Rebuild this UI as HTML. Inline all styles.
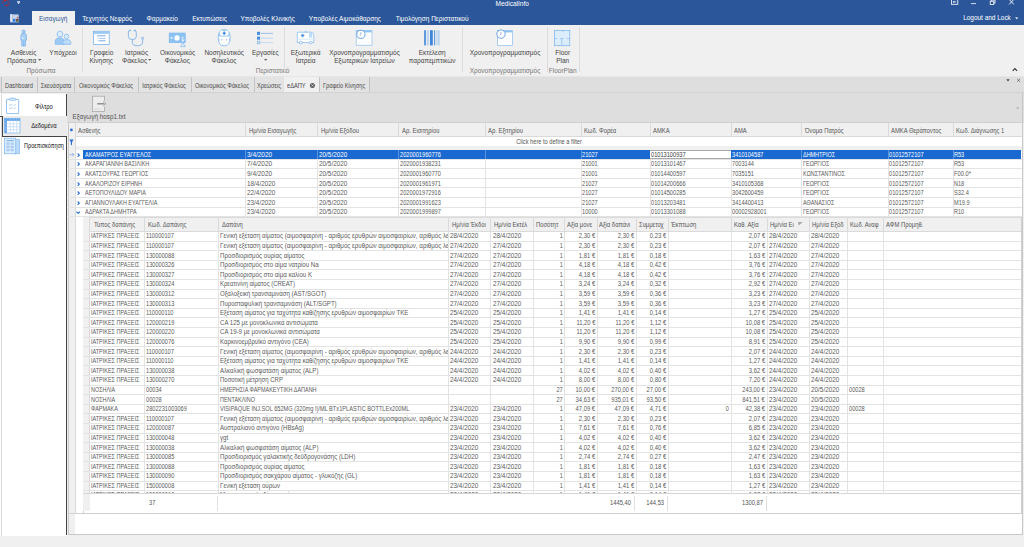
<!DOCTYPE html>
<html><head><meta charset="utf-8"><style>
html,body{margin:0;padding:0;width:1024px;height:547px;overflow:hidden;background:#f0f0f0}
body{position:relative;font-family:"Liberation Sans",sans-serif}
div,span,svg{position:absolute}
.t{white-space:nowrap}
</style></head><body>
<div style="left:0.00px;top:0.00px;width:1024.00px;height:24.60px;background:#2b579a"></div>
<span class="t" style="left:312.20px;width:400px;text-align:center;top:0.62px;font-size:6.5px;line-height:6.5px;color:#fff;">MedicalInfo</span>
<div style="left:31.80px;top:10.90px;width:43.00px;height:14.20px;background:#f0f0f0"></div>
<span class="t" style="left:-146.80px;width:400px;text-align:center;top:15.85px;font-size:6.45px;line-height:6.45px;color:#2b579a;">Εισαγωγή</span>
<span class="t" style="left:-92.80px;width:400px;text-align:center;top:15.82px;font-size:6.5px;line-height:6.5px;color:#fff;">Τεχνητός Νεφρός</span>
<span class="t" style="left:-37.80px;width:400px;text-align:center;top:15.82px;font-size:6.5px;line-height:6.5px;color:#fff;">Φαρμακείο</span>
<span class="t" style="left:9.50px;width:400px;text-align:center;top:15.82px;font-size:6.5px;line-height:6.5px;color:#fff;">Εκτυπώσεις</span>
<span class="t" style="left:67.70px;width:400px;text-align:center;top:15.82px;font-size:6.5px;line-height:6.5px;color:#fff;">Υποβολές Κλινικής</span>
<span class="t" style="left:144.90px;width:400px;text-align:center;top:15.82px;font-size:6.5px;line-height:6.5px;color:#fff;">Υποβολές Αιμοκάθαρσης</span>
<span class="t" style="left:232.10px;width:400px;text-align:center;top:15.82px;font-size:6.5px;line-height:6.5px;color:#fff;">Τιμολόγηση Περιστατικού</span>
<span class="t" style="left:787.00px;width:400px;text-align:center;top:14.84px;font-size:6.46px;line-height:6.46px;color:#fff;">Logout and Lock</span>
<div style="left:0.00px;top:24.60px;width:1024.00px;height:51.00px;background:#f0f0f0"></div>
<span class="t" style="left:-176.40px;width:400px;text-align:center;top:49.92px;font-size:6.5px;line-height:6.5px;color:#444;">Ασθενείς</span>
<span class="t" style="left:-178.40px;width:400px;text-align:center;top:58.02px;font-size:6.5px;line-height:6.5px;color:#444;">Πρόσωπα</span>
<svg style="left:38.00px;top:59.20px" width="3.2" height="2" viewBox="0 0 3.2 2"><path d="M0 0H3.2L1.6 1.8Z" fill="#666"/></svg>
<span class="t" style="left:-137.00px;width:400px;text-align:center;top:49.92px;font-size:6.5px;line-height:6.5px;color:#444;">Υπόχρεοι</span>
<span class="t" style="left:-159.00px;width:400px;text-align:center;top:68.02px;font-size:6.5px;line-height:6.5px;color:#777;">Πρόσωπα</span>
<div style="left:82.40px;top:27.00px;width:1.00px;height:45.00px;background:#dcdcdc"></div>
<span class="t" style="left:-98.30px;width:400px;text-align:center;top:49.92px;font-size:6.5px;line-height:6.5px;color:#444;">Γραφείο</span>
<span class="t" style="left:-98.80px;width:400px;text-align:center;top:58.02px;font-size:6.5px;line-height:6.5px;color:#444;">Κίνησης</span>
<span class="t" style="left:-63.50px;width:400px;text-align:center;top:49.92px;font-size:6.5px;line-height:6.5px;color:#444;">Ιατρικός</span>
<span class="t" style="left:-65.40px;width:400px;text-align:center;top:58.02px;font-size:6.5px;line-height:6.5px;color:#444;">Φάκελος</span>
<svg style="left:148.00px;top:59.20px" width="3.2" height="2" viewBox="0 0 3.2 2"><path d="M0 0H3.2L1.6 1.8Z" fill="#666"/></svg>
<span class="t" style="left:-22.40px;width:400px;text-align:center;top:49.92px;font-size:6.5px;line-height:6.5px;color:#444;">Οικονομικός</span>
<span class="t" style="left:-22.70px;width:400px;text-align:center;top:58.02px;font-size:6.5px;line-height:6.5px;color:#444;">Φάκελος</span>
<span class="t" style="left:24.20px;width:400px;text-align:center;top:49.92px;font-size:6.5px;line-height:6.5px;color:#444;">Νοσηλευτικός</span>
<span class="t" style="left:24.00px;width:400px;text-align:center;top:58.02px;font-size:6.5px;line-height:6.5px;color:#444;">Φάκελος</span>
<span class="t" style="left:65.30px;width:400px;text-align:center;top:49.92px;font-size:6.5px;line-height:6.5px;color:#444;">Εργασίες</span>
<svg style="left:264.00px;top:59.30px" width="3.2" height="2" viewBox="0 0 3.2 2"><path d="M0 0H3.2L1.6 1.8Z" fill="#666"/></svg>
<span class="t" style="left:72.60px;width:400px;text-align:center;top:68.02px;font-size:6.5px;line-height:6.5px;color:#777;">Περιστατικό</span>
<div style="left:283.80px;top:27.00px;width:1.00px;height:45.00px;background:#dcdcdc"></div>
<span class="t" style="left:105.60px;width:400px;text-align:center;top:49.92px;font-size:6.5px;line-height:6.5px;color:#444;">Εξωτερικά</span>
<span class="t" style="left:105.60px;width:400px;text-align:center;top:58.02px;font-size:6.5px;line-height:6.5px;color:#444;">Ιατρεία</span>
<span class="t" style="left:164.50px;width:400px;text-align:center;top:49.92px;font-size:6.5px;line-height:6.5px;color:#444;">Χρονοπρογραμματισμός</span>
<span class="t" style="left:164.50px;width:400px;text-align:center;top:58.02px;font-size:6.5px;line-height:6.5px;color:#444;">Εξωτερικών Ιατρείων</span>
<span class="t" style="left:232.20px;width:400px;text-align:center;top:49.92px;font-size:6.5px;line-height:6.5px;color:#444;">Εκτέλεση</span>
<span class="t" style="left:232.20px;width:400px;text-align:center;top:58.02px;font-size:6.5px;line-height:6.5px;color:#444;">παραπεμπτικών</span>
<div style="left:462.20px;top:27.00px;width:1.00px;height:45.00px;background:#dcdcdc"></div>
<span class="t" style="left:305.00px;width:400px;text-align:center;top:49.92px;font-size:6.5px;line-height:6.5px;color:#444;">Χρονοπρογραμματισμός</span>
<span class="t" style="left:305.00px;width:400px;text-align:center;top:68.02px;font-size:6.5px;line-height:6.5px;color:#777;">Χρονοπρογραμματισμός</span>
<div style="left:546.70px;top:27.00px;width:1.00px;height:45.00px;background:#dcdcdc"></div>
<span class="t" style="left:362.70px;width:400px;text-align:center;top:49.92px;font-size:6.5px;line-height:6.5px;color:#444;">Floor</span>
<span class="t" style="left:362.70px;width:400px;text-align:center;top:58.02px;font-size:6.5px;line-height:6.5px;color:#444;">Plan</span>
<span class="t" style="left:362.70px;width:400px;text-align:center;top:68.02px;font-size:6.5px;line-height:6.5px;color:#777;">FloorPlan</span>
<div style="left:578.80px;top:27.00px;width:1.00px;height:45.00px;background:#dcdcdc"></div>
<div style="left:0.00px;top:75.60px;width:1024.00px;height:17.00px;background:#dedede"></div>
<div style="left:0.00px;top:75.60px;width:1024.00px;height:1.00px;background:#e6e6e6"></div>
<div style="left:1.30px;top:76.80px;width:35.20px;height:16.00px;background:#e3e3e3;border-left:1px solid #c4c4c4"></div>
<span class="t" style="left:-180.80px;width:400px;text-align:center;top:83.27px;font-size:6.6px;line-height:6.6px;color:#4a4a4a;transform:scaleX(0.860);transform-origin:50% 50%;">Dashboard</span>
<div style="left:36.50px;top:76.80px;width:37.90px;height:16.00px;background:#e3e3e3;border-left:1px solid #c4c4c4"></div>
<span class="t" style="left:-144.25px;width:400px;text-align:center;top:83.27px;font-size:6.6px;line-height:6.6px;color:#4a4a4a;transform:scaleX(0.860);transform-origin:50% 50%;">Σκευάσματα</span>
<div style="left:74.40px;top:76.80px;width:63.30px;height:16.00px;background:#e3e3e3;border-left:1px solid #c4c4c4"></div>
<span class="t" style="left:-93.65px;width:400px;text-align:center;top:83.27px;font-size:6.6px;line-height:6.6px;color:#4a4a4a;transform:scaleX(0.860);transform-origin:50% 50%;">Οικονομικός Φάκελος</span>
<div style="left:137.70px;top:76.80px;width:52.80px;height:16.00px;background:#e3e3e3;border-left:1px solid #c4c4c4"></div>
<span class="t" style="left:-35.60px;width:400px;text-align:center;top:83.27px;font-size:6.6px;line-height:6.6px;color:#4a4a4a;transform:scaleX(0.860);transform-origin:50% 50%;">Ιατρικός Φάκελος</span>
<div style="left:190.50px;top:76.80px;width:63.10px;height:16.00px;background:#e3e3e3;border-left:1px solid #c4c4c4"></div>
<span class="t" style="left:22.35px;width:400px;text-align:center;top:83.27px;font-size:6.6px;line-height:6.6px;color:#4a4a4a;transform:scaleX(0.860);transform-origin:50% 50%;">Οικονομικός Φάκελος</span>
<div style="left:253.60px;top:76.80px;width:30.10px;height:16.00px;background:#e3e3e3;border-left:1px solid #c4c4c4"></div>
<span class="t" style="left:68.95px;width:400px;text-align:center;top:83.27px;font-size:6.6px;line-height:6.6px;color:#4a4a4a;transform:scaleX(0.860);transform-origin:50% 50%;">Χρεώσεις</span>
<div style="left:283.70px;top:76.80px;width:35.30px;height:16.00px;background:#f0f0f0"></div>
<span class="t" style="left:287.00px;top:83.17px;font-size:6.6px;line-height:6.6px;color:#444;transform:scaleX(0.860);transform-origin:0 50%;">eΔΑΠΥ</span>
<div style="left:319.00px;top:76.80px;width:49.70px;height:16.00px;background:#e3e3e3;border-left:1px solid #c4c4c4"></div>
<span class="t" style="left:144.15px;width:400px;text-align:center;top:83.27px;font-size:6.6px;line-height:6.6px;color:#4a4a4a;transform:scaleX(0.860);transform-origin:50% 50%;">Γραφείο Κίνησης</span>
<div style="left:368.70px;top:76.80px;width:1.00px;height:15.80px;background:#c4c4c4"></div>
<div style="left:0.00px;top:92.20px;width:1024.00px;height:1.00px;background:#d2d2d2"></div>
<div style="left:0.00px;top:93.50px;width:67.00px;height:442.00px;background:#fff"></div>
<div style="left:0.60px;top:93.50px;width:1.00px;height:442.00px;background:#d8d8d8"></div>
<div style="left:66.20px;top:93.50px;width:1.00px;height:22.80px;background:#444"></div>
<div style="left:0.00px;top:115.80px;width:67.00px;height:1.00px;background:#444"></div>
<div style="left:2.20px;top:116.30px;width:65.00px;height:19.90px;background:#ebebeb"></div>
<div style="left:2.20px;top:116.30px;width:1.00px;height:19.90px;background:#444"></div>
<div style="left:2.20px;top:135.90px;width:64.80px;height:1.00px;background:#444"></div>
<div style="left:66.20px;top:136.20px;width:1.00px;height:399.30px;background:#444"></div>
<span class="t" style="left:-155.70px;width:400px;text-align:center;top:103.77px;font-size:6.6px;line-height:6.6px;color:#111;transform:scaleX(0.885);transform-origin:50% 50%;">Φίλτρο</span>
<span class="t" style="left:-155.70px;width:400px;text-align:center;top:123.47px;font-size:6.6px;line-height:6.6px;color:#111;transform:scaleX(0.885);transform-origin:50% 50%;">Δεδομένα</span>
<span class="t" style="left:-155.90px;width:400px;text-align:center;top:142.97px;font-size:6.6px;line-height:6.6px;color:#111;transform:scaleX(0.830);transform-origin:50% 50%;">Προεπισκόπηση</span>
<div style="left:67.00px;top:92.60px;width:957.00px;height:30.00px;background:#dedede"></div>
<span class="t" style="left:-101.30px;width:400px;text-align:center;top:114.27px;font-size:6.6px;line-height:6.6px;color:#505050;transform:scaleX(0.960);transform-origin:50% 50%;">Εξαγωγή hosp1.txt</span>
<div style="left:68.20px;top:122.20px;width:954.10px;height:413.10px;background:#fff"></div>
<div style="left:68.20px;top:122.20px;width:954.10px;height:1.00px;background:#cfcfcf"></div>
<div style="left:68.20px;top:122.70px;width:954.10px;height:13.60px;background:#f0f0f0"></div>
<div style="left:68.20px;top:136.10px;width:954.10px;height:1.00px;background:#dadada"></div>
<div style="left:68.20px;top:146.20px;width:954.10px;height:1.00px;background:#e6e6e6"></div>
<div style="left:68.20px;top:146.40px;width:954.10px;height:3.20px;background:#f0f0f0"></div>
<div style="left:68.20px;top:122.70px;width:6.40px;height:412.60px;background:#f0f0f0"></div>
<div style="left:74.60px;top:122.70px;width:1.00px;height:390.70px;background:#dadada"></div>
<div style="left:1021.50px;top:93.00px;width:1.00px;height:442.30px;background:#c8c8c8"></div>
<div style="left:68.20px;top:122.20px;width:1.00px;height:413.10px;background:#c8c8c8"></div>
<div style="left:245.10px;top:122.70px;width:1.00px;height:13.40px;background:#dadada"></div>
<div style="left:317.30px;top:122.70px;width:1.00px;height:13.40px;background:#dadada"></div>
<div style="left:398.40px;top:122.70px;width:1.00px;height:13.40px;background:#dadada"></div>
<div style="left:485.30px;top:122.70px;width:1.00px;height:13.40px;background:#dadada"></div>
<div style="left:580.50px;top:122.70px;width:1.00px;height:13.40px;background:#dadada"></div>
<div style="left:649.60px;top:122.70px;width:1.00px;height:13.40px;background:#dadada"></div>
<div style="left:730.70px;top:122.70px;width:1.00px;height:13.40px;background:#dadada"></div>
<div style="left:801.30px;top:122.70px;width:1.00px;height:13.40px;background:#dadada"></div>
<div style="left:887.50px;top:122.70px;width:1.00px;height:13.40px;background:#dadada"></div>
<div style="left:952.70px;top:122.70px;width:1.00px;height:13.40px;background:#dadada"></div>
<span class="t" style="left:77.80px;top:127.57px;font-size:6.6px;line-height:6.6px;color:#555;transform:scaleX(0.890);transform-origin:0 50%;">Ασθενής</span>
<span class="t" style="left:248.75px;top:127.57px;font-size:6.6px;line-height:6.6px;color:#555;transform:scaleX(0.890);transform-origin:0 50%;">Ημ/νία Εισαγωγής</span>
<span class="t" style="left:321.00px;top:127.57px;font-size:6.6px;line-height:6.6px;color:#555;transform:scaleX(0.890);transform-origin:0 50%;">Ημ/νία Εξόδου</span>
<span class="t" style="left:402.30px;top:127.57px;font-size:6.6px;line-height:6.6px;color:#555;transform:scaleX(0.890);transform-origin:0 50%;">Αρ. Εισιτηρίου</span>
<span class="t" style="left:488.20px;top:127.57px;font-size:6.6px;line-height:6.6px;color:#555;transform:scaleX(0.890);transform-origin:0 50%;">Αρ. Εξιτηρίου</span>
<span class="t" style="left:583.70px;top:127.57px;font-size:6.6px;line-height:6.6px;color:#555;transform:scaleX(0.890);transform-origin:0 50%;">Κωδ. Φορέα</span>
<span class="t" style="left:652.50px;top:127.57px;font-size:6.6px;line-height:6.6px;color:#555;transform:scaleX(0.890);transform-origin:0 50%;">ΑΜΚΑ</span>
<span class="t" style="left:733.60px;top:127.57px;font-size:6.6px;line-height:6.6px;color:#555;transform:scaleX(0.890);transform-origin:0 50%;">ΑΜΑ</span>
<span class="t" style="left:804.50px;top:127.57px;font-size:6.6px;line-height:6.6px;color:#555;transform:scaleX(0.890);transform-origin:0 50%;">Όνομα Πατρός</span>
<span class="t" style="left:890.70px;top:127.57px;font-size:6.6px;line-height:6.6px;color:#555;transform:scaleX(0.890);transform-origin:0 50%;">ΑΜΚΑ Θεράποντος</span>
<span class="t" style="left:955.90px;top:127.57px;font-size:6.6px;line-height:6.6px;color:#555;transform:scaleX(0.890);transform-origin:0 50%;">Κωδ. Διάγνωσης 1</span>
<span class="t" style="left:348.50px;width:400px;text-align:center;top:138.77px;font-size:6.6px;line-height:6.6px;color:#555;transform:scaleX(0.860);transform-origin:50% 50%;">Click here to define a filter</span>
<div style="left:83.30px;top:149.60px;width:938.20px;height:9.00px;background:#1a69d1"></div>
<div style="left:649.90px;top:149.60px;width:81.00px;height:9.00px;background:#fff;border-top:1px solid #a8a8a8;border-bottom:1px solid #a8a8a8;box-sizing:border-box"></div>
<div style="left:68.20px;top:158.60px;width:954.10px;height:1.00px;background:#e3e3e3"></div>
<div style="left:245.10px;top:149.60px;width:1.00px;height:9.00px;background:#5f93dc"></div>
<div style="left:317.30px;top:149.60px;width:1.00px;height:9.00px;background:#5f93dc"></div>
<div style="left:398.40px;top:149.60px;width:1.00px;height:9.00px;background:#5f93dc"></div>
<div style="left:485.30px;top:149.60px;width:1.00px;height:9.00px;background:#5f93dc"></div>
<div style="left:580.50px;top:149.60px;width:1.00px;height:9.00px;background:#5f93dc"></div>
<div style="left:801.30px;top:149.60px;width:1.00px;height:9.00px;background:#5f93dc"></div>
<div style="left:887.50px;top:149.60px;width:1.00px;height:9.00px;background:#5f93dc"></div>
<div style="left:952.70px;top:149.60px;width:1.00px;height:9.00px;background:#5f93dc"></div>
<div style="left:83.30px;top:149.60px;width:161.80px;height:9.00px;overflow:hidden"><span class="t" style="left:1.60px;transform-origin:0 50%;top:2.21px;font-size:6.9px;line-height:6.9px;color:#fff;transform:scaleX(0.792);">ΑΚΑΜΑΤΡΟΣ ΕΥΑΓΓΕΛΟΣ</span></div>
<div style="left:245.10px;top:149.60px;width:72.20px;height:9.00px;overflow:hidden"><span class="t" style="left:1.60px;transform-origin:0 50%;top:2.21px;font-size:6.9px;line-height:6.9px;color:#fff;transform:scaleX(0.937);">3/4/2020</span></div>
<div style="left:317.30px;top:149.60px;width:81.10px;height:9.00px;overflow:hidden"><span class="t" style="left:1.60px;transform-origin:0 50%;top:2.21px;font-size:6.9px;line-height:6.9px;color:#fff;transform:scaleX(0.923);">20/5/2020</span></div>
<div style="left:398.40px;top:149.60px;width:86.90px;height:9.00px;overflow:hidden"><span class="t" style="left:1.60px;transform-origin:0 50%;top:2.21px;font-size:6.9px;line-height:6.9px;color:#fff;transform:scaleX(0.820);">2020001960776</span></div>
<div style="left:580.50px;top:149.60px;width:69.10px;height:9.00px;overflow:hidden"><span class="t" style="left:1.60px;transform-origin:0 50%;top:2.21px;font-size:6.9px;line-height:6.9px;color:#fff;transform:scaleX(0.820);">21027</span></div>
<div style="left:649.60px;top:149.60px;width:81.10px;height:9.00px;overflow:hidden"><span class="t" style="left:1.60px;transform-origin:0 50%;top:2.21px;font-size:6.9px;line-height:6.9px;color:#3a3a3a;transform:scaleX(0.820);">01013100937</span></div>
<div style="left:730.70px;top:149.60px;width:70.60px;height:9.00px;overflow:hidden"><span class="t" style="left:1.60px;transform-origin:0 50%;top:2.21px;font-size:6.9px;line-height:6.9px;color:#fff;transform:scaleX(0.820);">3410104587</span></div>
<div style="left:801.30px;top:149.60px;width:86.20px;height:9.00px;overflow:hidden"><span class="t" style="left:1.60px;transform-origin:0 50%;top:2.21px;font-size:6.9px;line-height:6.9px;color:#fff;transform:scaleX(0.790);">ΔΗΜΗΤΡΙΟΣ</span></div>
<div style="left:887.50px;top:149.60px;width:65.20px;height:9.00px;overflow:hidden"><span class="t" style="left:1.60px;transform-origin:0 50%;top:2.21px;font-size:6.9px;line-height:6.9px;color:#fff;transform:scaleX(0.820);">01012572107</span></div>
<div style="left:952.70px;top:149.60px;width:68.60px;height:9.00px;overflow:hidden"><span class="t" style="left:1.60px;transform-origin:0 50%;top:2.21px;font-size:6.9px;line-height:6.9px;color:#fff;transform:scaleX(0.808);">R53</span></div>
<svg style="left:77.2px;top:152.70px" width="3" height="4.4" viewBox="0 0 3 4.4"><path d="M0.6 0.5L2.3 2.2L0.6 3.9" stroke="#2a6fd6" stroke-width="1.1" fill="none"/></svg>
<div style="left:68.20px;top:168.20px;width:954.10px;height:1.00px;background:#e3e3e3"></div>
<div style="left:245.10px;top:159.20px;width:1.00px;height:9.00px;background:#e3e3e3"></div>
<div style="left:317.30px;top:159.20px;width:1.00px;height:9.00px;background:#e3e3e3"></div>
<div style="left:398.40px;top:159.20px;width:1.00px;height:9.00px;background:#e3e3e3"></div>
<div style="left:485.30px;top:159.20px;width:1.00px;height:9.00px;background:#e3e3e3"></div>
<div style="left:580.50px;top:159.20px;width:1.00px;height:9.00px;background:#e3e3e3"></div>
<div style="left:649.60px;top:159.20px;width:1.00px;height:9.00px;background:#e3e3e3"></div>
<div style="left:730.70px;top:159.20px;width:1.00px;height:9.00px;background:#e3e3e3"></div>
<div style="left:801.30px;top:159.20px;width:1.00px;height:9.00px;background:#e3e3e3"></div>
<div style="left:887.50px;top:159.20px;width:1.00px;height:9.00px;background:#e3e3e3"></div>
<div style="left:952.70px;top:159.20px;width:1.00px;height:9.00px;background:#e3e3e3"></div>
<div style="left:83.30px;top:159.20px;width:161.80px;height:9.00px;overflow:hidden"><span class="t" style="left:1.60px;transform-origin:0 50%;top:2.21px;font-size:6.9px;line-height:6.9px;color:#5a5a5a;transform:scaleX(0.793);">ΑΚΑΡΑΓΙΑΝΝΗ ΒΑΣΙΛΙΚΗ</span></div>
<div style="left:245.10px;top:159.20px;width:72.20px;height:9.00px;overflow:hidden"><span class="t" style="left:1.60px;transform-origin:0 50%;top:2.21px;font-size:6.9px;line-height:6.9px;color:#5a5a5a;transform:scaleX(0.937);">7/4/2020</span></div>
<div style="left:317.30px;top:159.20px;width:81.10px;height:9.00px;overflow:hidden"><span class="t" style="left:1.60px;transform-origin:0 50%;top:2.21px;font-size:6.9px;line-height:6.9px;color:#5a5a5a;transform:scaleX(0.923);">20/5/2020</span></div>
<div style="left:398.40px;top:159.20px;width:86.90px;height:9.00px;overflow:hidden"><span class="t" style="left:1.60px;transform-origin:0 50%;top:2.21px;font-size:6.9px;line-height:6.9px;color:#5a5a5a;transform:scaleX(0.820);">2020001938231</span></div>
<div style="left:580.50px;top:159.20px;width:69.10px;height:9.00px;overflow:hidden"><span class="t" style="left:1.60px;transform-origin:0 50%;top:2.21px;font-size:6.9px;line-height:6.9px;color:#5a5a5a;transform:scaleX(0.820);">21001</span></div>
<div style="left:649.60px;top:159.20px;width:81.10px;height:9.00px;overflow:hidden"><span class="t" style="left:1.60px;transform-origin:0 50%;top:2.21px;font-size:6.9px;line-height:6.9px;color:#5a5a5a;transform:scaleX(0.820);">01013101467</span></div>
<div style="left:730.70px;top:159.20px;width:70.60px;height:9.00px;overflow:hidden"><span class="t" style="left:1.60px;transform-origin:0 50%;top:2.21px;font-size:6.9px;line-height:6.9px;color:#5a5a5a;transform:scaleX(0.820);">7003144</span></div>
<div style="left:801.30px;top:159.20px;width:86.20px;height:9.00px;overflow:hidden"><span class="t" style="left:1.60px;transform-origin:0 50%;top:2.21px;font-size:6.9px;line-height:6.9px;color:#5a5a5a;transform:scaleX(0.790);">ΓΕΩΡΓΙΟΣ</span></div>
<div style="left:887.50px;top:159.20px;width:65.20px;height:9.00px;overflow:hidden"><span class="t" style="left:1.60px;transform-origin:0 50%;top:2.21px;font-size:6.9px;line-height:6.9px;color:#5a5a5a;transform:scaleX(0.820);">01012572107</span></div>
<div style="left:952.70px;top:159.20px;width:68.60px;height:9.00px;overflow:hidden"><span class="t" style="left:1.60px;transform-origin:0 50%;top:2.21px;font-size:6.9px;line-height:6.9px;color:#5a5a5a;transform:scaleX(0.808);">R53</span></div>
<svg style="left:77.2px;top:162.30px" width="3" height="4.4" viewBox="0 0 3 4.4"><path d="M0.6 0.5L2.3 2.2L0.6 3.9" stroke="#2a6fd6" stroke-width="1.1" fill="none"/></svg>
<div style="left:68.20px;top:177.80px;width:954.10px;height:1.00px;background:#e3e3e3"></div>
<div style="left:245.10px;top:168.80px;width:1.00px;height:9.00px;background:#e3e3e3"></div>
<div style="left:317.30px;top:168.80px;width:1.00px;height:9.00px;background:#e3e3e3"></div>
<div style="left:398.40px;top:168.80px;width:1.00px;height:9.00px;background:#e3e3e3"></div>
<div style="left:485.30px;top:168.80px;width:1.00px;height:9.00px;background:#e3e3e3"></div>
<div style="left:580.50px;top:168.80px;width:1.00px;height:9.00px;background:#e3e3e3"></div>
<div style="left:649.60px;top:168.80px;width:1.00px;height:9.00px;background:#e3e3e3"></div>
<div style="left:730.70px;top:168.80px;width:1.00px;height:9.00px;background:#e3e3e3"></div>
<div style="left:801.30px;top:168.80px;width:1.00px;height:9.00px;background:#e3e3e3"></div>
<div style="left:887.50px;top:168.80px;width:1.00px;height:9.00px;background:#e3e3e3"></div>
<div style="left:952.70px;top:168.80px;width:1.00px;height:9.00px;background:#e3e3e3"></div>
<div style="left:83.30px;top:168.80px;width:161.80px;height:9.00px;overflow:hidden"><span class="t" style="left:1.60px;transform-origin:0 50%;top:2.21px;font-size:6.9px;line-height:6.9px;color:#5a5a5a;transform:scaleX(0.793);">ΑΚΑΤΣΟΥΡΑΣ ΓΕΩΡΓΙΟΣ</span></div>
<div style="left:245.10px;top:168.80px;width:72.20px;height:9.00px;overflow:hidden"><span class="t" style="left:1.60px;transform-origin:0 50%;top:2.21px;font-size:6.9px;line-height:6.9px;color:#5a5a5a;transform:scaleX(0.937);">9/4/2020</span></div>
<div style="left:317.30px;top:168.80px;width:81.10px;height:9.00px;overflow:hidden"><span class="t" style="left:1.60px;transform-origin:0 50%;top:2.21px;font-size:6.9px;line-height:6.9px;color:#5a5a5a;transform:scaleX(0.923);">20/5/2020</span></div>
<div style="left:398.40px;top:168.80px;width:86.90px;height:9.00px;overflow:hidden"><span class="t" style="left:1.60px;transform-origin:0 50%;top:2.21px;font-size:6.9px;line-height:6.9px;color:#5a5a5a;transform:scaleX(0.820);">2020001960770</span></div>
<div style="left:580.50px;top:168.80px;width:69.10px;height:9.00px;overflow:hidden"><span class="t" style="left:1.60px;transform-origin:0 50%;top:2.21px;font-size:6.9px;line-height:6.9px;color:#5a5a5a;transform:scaleX(0.820);">21001</span></div>
<div style="left:649.60px;top:168.80px;width:81.10px;height:9.00px;overflow:hidden"><span class="t" style="left:1.60px;transform-origin:0 50%;top:2.21px;font-size:6.9px;line-height:6.9px;color:#5a5a5a;transform:scaleX(0.820);">01014400597</span></div>
<div style="left:730.70px;top:168.80px;width:70.60px;height:9.00px;overflow:hidden"><span class="t" style="left:1.60px;transform-origin:0 50%;top:2.21px;font-size:6.9px;line-height:6.9px;color:#5a5a5a;transform:scaleX(0.820);">7035151</span></div>
<div style="left:801.30px;top:168.80px;width:86.20px;height:9.00px;overflow:hidden"><span class="t" style="left:1.60px;transform-origin:0 50%;top:2.21px;font-size:6.9px;line-height:6.9px;color:#5a5a5a;transform:scaleX(0.790);">ΚΩΝΣΤΑΝΤΙΝΟΣ</span></div>
<div style="left:887.50px;top:168.80px;width:65.20px;height:9.00px;overflow:hidden"><span class="t" style="left:1.60px;transform-origin:0 50%;top:2.21px;font-size:6.9px;line-height:6.9px;color:#5a5a5a;transform:scaleX(0.820);">01012572107</span></div>
<div style="left:952.70px;top:168.80px;width:68.60px;height:9.00px;overflow:hidden"><span class="t" style="left:1.60px;transform-origin:0 50%;top:2.21px;font-size:6.9px;line-height:6.9px;color:#5a5a5a;transform:scaleX(0.832);">F00.0*</span></div>
<svg style="left:77.2px;top:171.90px" width="3" height="4.4" viewBox="0 0 3 4.4"><path d="M0.6 0.5L2.3 2.2L0.6 3.9" stroke="#2a6fd6" stroke-width="1.1" fill="none"/></svg>
<div style="left:68.20px;top:187.40px;width:954.10px;height:1.00px;background:#e3e3e3"></div>
<div style="left:245.10px;top:178.40px;width:1.00px;height:9.00px;background:#e3e3e3"></div>
<div style="left:317.30px;top:178.40px;width:1.00px;height:9.00px;background:#e3e3e3"></div>
<div style="left:398.40px;top:178.40px;width:1.00px;height:9.00px;background:#e3e3e3"></div>
<div style="left:485.30px;top:178.40px;width:1.00px;height:9.00px;background:#e3e3e3"></div>
<div style="left:580.50px;top:178.40px;width:1.00px;height:9.00px;background:#e3e3e3"></div>
<div style="left:649.60px;top:178.40px;width:1.00px;height:9.00px;background:#e3e3e3"></div>
<div style="left:730.70px;top:178.40px;width:1.00px;height:9.00px;background:#e3e3e3"></div>
<div style="left:801.30px;top:178.40px;width:1.00px;height:9.00px;background:#e3e3e3"></div>
<div style="left:887.50px;top:178.40px;width:1.00px;height:9.00px;background:#e3e3e3"></div>
<div style="left:952.70px;top:178.40px;width:1.00px;height:9.00px;background:#e3e3e3"></div>
<div style="left:83.30px;top:178.40px;width:161.80px;height:9.00px;overflow:hidden"><span class="t" style="left:1.60px;transform-origin:0 50%;top:2.21px;font-size:6.9px;line-height:6.9px;color:#5a5a5a;transform:scaleX(0.793);">ΑΚΑΛΟΡΙΖΟΥ ΕΙΡΗΝΗ</span></div>
<div style="left:245.10px;top:178.40px;width:72.20px;height:9.00px;overflow:hidden"><span class="t" style="left:1.60px;transform-origin:0 50%;top:2.21px;font-size:6.9px;line-height:6.9px;color:#5a5a5a;transform:scaleX(0.923);">18/4/2020</span></div>
<div style="left:317.30px;top:178.40px;width:81.10px;height:9.00px;overflow:hidden"><span class="t" style="left:1.60px;transform-origin:0 50%;top:2.21px;font-size:6.9px;line-height:6.9px;color:#5a5a5a;transform:scaleX(0.923);">20/5/2020</span></div>
<div style="left:398.40px;top:178.40px;width:86.90px;height:9.00px;overflow:hidden"><span class="t" style="left:1.60px;transform-origin:0 50%;top:2.21px;font-size:6.9px;line-height:6.9px;color:#5a5a5a;transform:scaleX(0.820);">2020001961971</span></div>
<div style="left:580.50px;top:178.40px;width:69.10px;height:9.00px;overflow:hidden"><span class="t" style="left:1.60px;transform-origin:0 50%;top:2.21px;font-size:6.9px;line-height:6.9px;color:#5a5a5a;transform:scaleX(0.820);">21027</span></div>
<div style="left:649.60px;top:178.40px;width:81.10px;height:9.00px;overflow:hidden"><span class="t" style="left:1.60px;transform-origin:0 50%;top:2.21px;font-size:6.9px;line-height:6.9px;color:#5a5a5a;transform:scaleX(0.820);">01014200666</span></div>
<div style="left:730.70px;top:178.40px;width:70.60px;height:9.00px;overflow:hidden"><span class="t" style="left:1.60px;transform-origin:0 50%;top:2.21px;font-size:6.9px;line-height:6.9px;color:#5a5a5a;transform:scaleX(0.820);">3410105368</span></div>
<div style="left:801.30px;top:178.40px;width:86.20px;height:9.00px;overflow:hidden"><span class="t" style="left:1.60px;transform-origin:0 50%;top:2.21px;font-size:6.9px;line-height:6.9px;color:#5a5a5a;transform:scaleX(0.790);">ΓΕΩΡΓΙΟΣ</span></div>
<div style="left:887.50px;top:178.40px;width:65.20px;height:9.00px;overflow:hidden"><span class="t" style="left:1.60px;transform-origin:0 50%;top:2.21px;font-size:6.9px;line-height:6.9px;color:#5a5a5a;transform:scaleX(0.820);">01012572107</span></div>
<div style="left:952.70px;top:178.40px;width:68.60px;height:9.00px;overflow:hidden"><span class="t" style="left:1.60px;transform-origin:0 50%;top:2.21px;font-size:6.9px;line-height:6.9px;color:#5a5a5a;transform:scaleX(0.808);">N18</span></div>
<svg style="left:77.2px;top:181.50px" width="3" height="4.4" viewBox="0 0 3 4.4"><path d="M0.6 0.5L2.3 2.2L0.6 3.9" stroke="#2a6fd6" stroke-width="1.1" fill="none"/></svg>
<div style="left:68.20px;top:197.00px;width:954.10px;height:1.00px;background:#e3e3e3"></div>
<div style="left:245.10px;top:188.00px;width:1.00px;height:9.00px;background:#e3e3e3"></div>
<div style="left:317.30px;top:188.00px;width:1.00px;height:9.00px;background:#e3e3e3"></div>
<div style="left:398.40px;top:188.00px;width:1.00px;height:9.00px;background:#e3e3e3"></div>
<div style="left:485.30px;top:188.00px;width:1.00px;height:9.00px;background:#e3e3e3"></div>
<div style="left:580.50px;top:188.00px;width:1.00px;height:9.00px;background:#e3e3e3"></div>
<div style="left:649.60px;top:188.00px;width:1.00px;height:9.00px;background:#e3e3e3"></div>
<div style="left:730.70px;top:188.00px;width:1.00px;height:9.00px;background:#e3e3e3"></div>
<div style="left:801.30px;top:188.00px;width:1.00px;height:9.00px;background:#e3e3e3"></div>
<div style="left:887.50px;top:188.00px;width:1.00px;height:9.00px;background:#e3e3e3"></div>
<div style="left:952.70px;top:188.00px;width:1.00px;height:9.00px;background:#e3e3e3"></div>
<div style="left:83.30px;top:188.00px;width:161.80px;height:9.00px;overflow:hidden"><span class="t" style="left:1.60px;transform-origin:0 50%;top:2.21px;font-size:6.9px;line-height:6.9px;color:#5a5a5a;transform:scaleX(0.793);">ΑΕΤΟΠΟΥΛΙΔΟΥ ΜΑΡΙΑ</span></div>
<div style="left:245.10px;top:188.00px;width:72.20px;height:9.00px;overflow:hidden"><span class="t" style="left:1.60px;transform-origin:0 50%;top:2.21px;font-size:6.9px;line-height:6.9px;color:#5a5a5a;transform:scaleX(0.923);">22/4/2020</span></div>
<div style="left:317.30px;top:188.00px;width:81.10px;height:9.00px;overflow:hidden"><span class="t" style="left:1.60px;transform-origin:0 50%;top:2.21px;font-size:6.9px;line-height:6.9px;color:#5a5a5a;transform:scaleX(0.923);">20/5/2020</span></div>
<div style="left:398.40px;top:188.00px;width:86.90px;height:9.00px;overflow:hidden"><span class="t" style="left:1.60px;transform-origin:0 50%;top:2.21px;font-size:6.9px;line-height:6.9px;color:#5a5a5a;transform:scaleX(0.820);">2020001972916</span></div>
<div style="left:580.50px;top:188.00px;width:69.10px;height:9.00px;overflow:hidden"><span class="t" style="left:1.60px;transform-origin:0 50%;top:2.21px;font-size:6.9px;line-height:6.9px;color:#5a5a5a;transform:scaleX(0.820);">21027</span></div>
<div style="left:649.60px;top:188.00px;width:81.10px;height:9.00px;overflow:hidden"><span class="t" style="left:1.60px;transform-origin:0 50%;top:2.21px;font-size:6.9px;line-height:6.9px;color:#5a5a5a;transform:scaleX(0.820);">01014500285</span></div>
<div style="left:730.70px;top:188.00px;width:70.60px;height:9.00px;overflow:hidden"><span class="t" style="left:1.60px;transform-origin:0 50%;top:2.21px;font-size:6.9px;line-height:6.9px;color:#5a5a5a;transform:scaleX(0.820);">3042600459</span></div>
<div style="left:801.30px;top:188.00px;width:86.20px;height:9.00px;overflow:hidden"><span class="t" style="left:1.60px;transform-origin:0 50%;top:2.21px;font-size:6.9px;line-height:6.9px;color:#5a5a5a;transform:scaleX(0.790);">ΓΕΩΡΓΙΟΣ</span></div>
<div style="left:887.50px;top:188.00px;width:65.20px;height:9.00px;overflow:hidden"><span class="t" style="left:1.60px;transform-origin:0 50%;top:2.21px;font-size:6.9px;line-height:6.9px;color:#5a5a5a;transform:scaleX(0.820);">01012572107</span></div>
<div style="left:952.70px;top:188.00px;width:68.60px;height:9.00px;overflow:hidden"><span class="t" style="left:1.60px;transform-origin:0 50%;top:2.21px;font-size:6.9px;line-height:6.9px;color:#5a5a5a;transform:scaleX(0.821);">S32.4</span></div>
<svg style="left:77.2px;top:191.10px" width="3" height="4.4" viewBox="0 0 3 4.4"><path d="M0.6 0.5L2.3 2.2L0.6 3.9" stroke="#2a6fd6" stroke-width="1.1" fill="none"/></svg>
<div style="left:68.20px;top:206.60px;width:954.10px;height:1.00px;background:#e3e3e3"></div>
<div style="left:245.10px;top:197.60px;width:1.00px;height:9.00px;background:#e3e3e3"></div>
<div style="left:317.30px;top:197.60px;width:1.00px;height:9.00px;background:#e3e3e3"></div>
<div style="left:398.40px;top:197.60px;width:1.00px;height:9.00px;background:#e3e3e3"></div>
<div style="left:485.30px;top:197.60px;width:1.00px;height:9.00px;background:#e3e3e3"></div>
<div style="left:580.50px;top:197.60px;width:1.00px;height:9.00px;background:#e3e3e3"></div>
<div style="left:649.60px;top:197.60px;width:1.00px;height:9.00px;background:#e3e3e3"></div>
<div style="left:730.70px;top:197.60px;width:1.00px;height:9.00px;background:#e3e3e3"></div>
<div style="left:801.30px;top:197.60px;width:1.00px;height:9.00px;background:#e3e3e3"></div>
<div style="left:887.50px;top:197.60px;width:1.00px;height:9.00px;background:#e3e3e3"></div>
<div style="left:952.70px;top:197.60px;width:1.00px;height:9.00px;background:#e3e3e3"></div>
<div style="left:83.30px;top:197.60px;width:161.80px;height:9.00px;overflow:hidden"><span class="t" style="left:1.60px;transform-origin:0 50%;top:2.21px;font-size:6.9px;line-height:6.9px;color:#5a5a5a;transform:scaleX(0.792);">ΑΓΙΑΝΝΟΥΛΑΚΗ ΕΥΑΓΓΕΛΙΑ</span></div>
<div style="left:245.10px;top:197.60px;width:72.20px;height:9.00px;overflow:hidden"><span class="t" style="left:1.60px;transform-origin:0 50%;top:2.21px;font-size:6.9px;line-height:6.9px;color:#5a5a5a;transform:scaleX(0.923);">23/4/2020</span></div>
<div style="left:317.30px;top:197.60px;width:81.10px;height:9.00px;overflow:hidden"><span class="t" style="left:1.60px;transform-origin:0 50%;top:2.21px;font-size:6.9px;line-height:6.9px;color:#5a5a5a;transform:scaleX(0.923);">20/5/2020</span></div>
<div style="left:398.40px;top:197.60px;width:86.90px;height:9.00px;overflow:hidden"><span class="t" style="left:1.60px;transform-origin:0 50%;top:2.21px;font-size:6.9px;line-height:6.9px;color:#5a5a5a;transform:scaleX(0.820);">2020001991623</span></div>
<div style="left:580.50px;top:197.60px;width:69.10px;height:9.00px;overflow:hidden"><span class="t" style="left:1.60px;transform-origin:0 50%;top:2.21px;font-size:6.9px;line-height:6.9px;color:#5a5a5a;transform:scaleX(0.820);">21027</span></div>
<div style="left:649.60px;top:197.60px;width:81.10px;height:9.00px;overflow:hidden"><span class="t" style="left:1.60px;transform-origin:0 50%;top:2.21px;font-size:6.9px;line-height:6.9px;color:#5a5a5a;transform:scaleX(0.820);">01013203481</span></div>
<div style="left:730.70px;top:197.60px;width:70.60px;height:9.00px;overflow:hidden"><span class="t" style="left:1.60px;transform-origin:0 50%;top:2.21px;font-size:6.9px;line-height:6.9px;color:#5a5a5a;transform:scaleX(0.820);">3414400413</span></div>
<div style="left:801.30px;top:197.60px;width:86.20px;height:9.00px;overflow:hidden"><span class="t" style="left:1.60px;transform-origin:0 50%;top:2.21px;font-size:6.9px;line-height:6.9px;color:#5a5a5a;transform:scaleX(0.790);">ΑΘΑΝΑΣΙΟΣ</span></div>
<div style="left:887.50px;top:197.60px;width:65.20px;height:9.00px;overflow:hidden"><span class="t" style="left:1.60px;transform-origin:0 50%;top:2.21px;font-size:6.9px;line-height:6.9px;color:#5a5a5a;transform:scaleX(0.820);">01012572107</span></div>
<div style="left:952.70px;top:197.60px;width:68.60px;height:9.00px;overflow:hidden"><span class="t" style="left:1.60px;transform-origin:0 50%;top:2.21px;font-size:6.9px;line-height:6.9px;color:#5a5a5a;transform:scaleX(0.819);">M19.9</span></div>
<svg style="left:77.2px;top:200.70px" width="3" height="4.4" viewBox="0 0 3 4.4"><path d="M0.6 0.5L2.3 2.2L0.6 3.9" stroke="#2a6fd6" stroke-width="1.1" fill="none"/></svg>
<div style="left:68.20px;top:216.20px;width:954.10px;height:1.00px;background:#e3e3e3"></div>
<div style="left:245.10px;top:207.20px;width:1.00px;height:9.00px;background:#e3e3e3"></div>
<div style="left:317.30px;top:207.20px;width:1.00px;height:9.00px;background:#e3e3e3"></div>
<div style="left:398.40px;top:207.20px;width:1.00px;height:9.00px;background:#e3e3e3"></div>
<div style="left:485.30px;top:207.20px;width:1.00px;height:9.00px;background:#e3e3e3"></div>
<div style="left:580.50px;top:207.20px;width:1.00px;height:9.00px;background:#e3e3e3"></div>
<div style="left:649.60px;top:207.20px;width:1.00px;height:9.00px;background:#e3e3e3"></div>
<div style="left:730.70px;top:207.20px;width:1.00px;height:9.00px;background:#e3e3e3"></div>
<div style="left:801.30px;top:207.20px;width:1.00px;height:9.00px;background:#e3e3e3"></div>
<div style="left:887.50px;top:207.20px;width:1.00px;height:9.00px;background:#e3e3e3"></div>
<div style="left:952.70px;top:207.20px;width:1.00px;height:9.00px;background:#e3e3e3"></div>
<div style="left:83.30px;top:207.20px;width:161.80px;height:9.00px;overflow:hidden"><span class="t" style="left:1.60px;transform-origin:0 50%;top:2.21px;font-size:6.9px;line-height:6.9px;color:#5a5a5a;transform:scaleX(0.793);">ΑΔΡΑΚΤΑ ΔΗΜΗΤΡΑ</span></div>
<div style="left:245.10px;top:207.20px;width:72.20px;height:9.00px;overflow:hidden"><span class="t" style="left:1.60px;transform-origin:0 50%;top:2.21px;font-size:6.9px;line-height:6.9px;color:#5a5a5a;transform:scaleX(0.923);">23/4/2020</span></div>
<div style="left:317.30px;top:207.20px;width:81.10px;height:9.00px;overflow:hidden"><span class="t" style="left:1.60px;transform-origin:0 50%;top:2.21px;font-size:6.9px;line-height:6.9px;color:#5a5a5a;transform:scaleX(0.923);">20/5/2020</span></div>
<div style="left:398.40px;top:207.20px;width:86.90px;height:9.00px;overflow:hidden"><span class="t" style="left:1.60px;transform-origin:0 50%;top:2.21px;font-size:6.9px;line-height:6.9px;color:#5a5a5a;transform:scaleX(0.820);">2020001999897</span></div>
<div style="left:580.50px;top:207.20px;width:69.10px;height:9.00px;overflow:hidden"><span class="t" style="left:1.60px;transform-origin:0 50%;top:2.21px;font-size:6.9px;line-height:6.9px;color:#5a5a5a;transform:scaleX(0.820);">10000</span></div>
<div style="left:649.60px;top:207.20px;width:81.10px;height:9.00px;overflow:hidden"><span class="t" style="left:1.60px;transform-origin:0 50%;top:2.21px;font-size:6.9px;line-height:6.9px;color:#5a5a5a;transform:scaleX(0.820);">01013301088</span></div>
<div style="left:730.70px;top:207.20px;width:70.60px;height:9.00px;overflow:hidden"><span class="t" style="left:1.60px;transform-origin:0 50%;top:2.21px;font-size:6.9px;line-height:6.9px;color:#5a5a5a;transform:scaleX(0.820);">00002928001</span></div>
<div style="left:801.30px;top:207.20px;width:86.20px;height:9.00px;overflow:hidden"><span class="t" style="left:1.60px;transform-origin:0 50%;top:2.21px;font-size:6.9px;line-height:6.9px;color:#5a5a5a;transform:scaleX(0.790);">ΓΕΩΡΓΙΟΣ</span></div>
<div style="left:887.50px;top:207.20px;width:65.20px;height:9.00px;overflow:hidden"><span class="t" style="left:1.60px;transform-origin:0 50%;top:2.21px;font-size:6.9px;line-height:6.9px;color:#5a5a5a;transform:scaleX(0.820);">01012572107</span></div>
<div style="left:952.70px;top:207.20px;width:68.60px;height:9.00px;overflow:hidden"><span class="t" style="left:1.60px;transform-origin:0 50%;top:2.21px;font-size:6.9px;line-height:6.9px;color:#5a5a5a;transform:scaleX(0.808);">R10</span></div>
<svg style="left:76.4px;top:211.00px" width="4.4" height="3" viewBox="0 0 4.4 3"><path d="M0.5 0.6L2.2 2.3L3.9 0.6" stroke="#2a6fd6" stroke-width="1.1" fill="none"/></svg>
<div style="left:82.90px;top:216.80px;width:938.50px;height:296.40px;background:#fff"></div>
<div style="left:82.90px;top:216.80px;width:1.00px;height:296.40px;background:#d0d0d0"></div>
<div style="left:82.90px;top:216.80px;width:938.50px;height:14.80px;background:#f0f0f0"></div>
<div style="left:82.90px;top:216.80px;width:938.50px;height:1.00px;background:#dadada"></div>
<div style="left:82.90px;top:231.10px;width:938.50px;height:1.00px;background:#dadada"></div>
<div style="left:83.40px;top:216.80px;width:6.40px;height:294.00px;background:#f0f0f0"></div>
<div style="left:89.40px;top:216.80px;width:1.00px;height:276.40px;background:#dadada"></div>
<div style="left:143.60px;top:216.80px;width:1.00px;height:14.80px;background:#dadada"></div>
<div style="left:217.80px;top:216.80px;width:1.00px;height:14.80px;background:#dadada"></div>
<div style="left:448.10px;top:216.80px;width:1.00px;height:14.80px;background:#dadada"></div>
<div style="left:490.30px;top:216.80px;width:1.00px;height:14.80px;background:#dadada"></div>
<div style="left:533.40px;top:216.80px;width:1.00px;height:14.80px;background:#dadada"></div>
<div style="left:564.40px;top:216.80px;width:1.00px;height:14.80px;background:#dadada"></div>
<div style="left:596.90px;top:216.80px;width:1.00px;height:14.80px;background:#dadada"></div>
<div style="left:635.90px;top:216.80px;width:1.00px;height:14.80px;background:#dadada"></div>
<div style="left:667.60px;top:216.80px;width:1.00px;height:14.80px;background:#dadada"></div>
<div style="left:730.60px;top:216.80px;width:1.00px;height:14.80px;background:#dadada"></div>
<div style="left:766.60px;top:216.80px;width:1.00px;height:14.80px;background:#dadada"></div>
<div style="left:808.50px;top:216.80px;width:1.00px;height:14.80px;background:#dadada"></div>
<div style="left:846.50px;top:216.80px;width:1.00px;height:14.80px;background:#dadada"></div>
<div style="left:882.80px;top:216.80px;width:1.00px;height:14.80px;background:#dadada"></div>
<span class="t" style="left:94.20px;top:221.77px;font-size:6.6px;line-height:6.6px;color:#555;transform:scaleX(0.890);transform-origin:0 50%;">Τύπος δαπάνης</span>
<span class="t" style="left:147.60px;top:221.77px;font-size:6.6px;line-height:6.6px;color:#555;transform:scaleX(0.890);transform-origin:0 50%;">Κωδ. Δαπάνης</span>
<span class="t" style="left:221.60px;top:221.77px;font-size:6.6px;line-height:6.6px;color:#555;transform:scaleX(0.890);transform-origin:0 50%;">Δαπάνη</span>
<span class="t" style="left:452.20px;top:221.77px;font-size:6.6px;line-height:6.6px;color:#555;transform:scaleX(0.890);transform-origin:0 50%;">Ημ/νία Έκδοι</span>
<span class="t" style="left:493.80px;top:221.77px;font-size:6.6px;line-height:6.6px;color:#555;transform:scaleX(0.890);transform-origin:0 50%;">Ημ/νία Εκτέλ</span>
<span class="t" style="left:536.40px;top:221.77px;font-size:6.6px;line-height:6.6px;color:#555;transform:scaleX(0.890);transform-origin:0 50%;">Ποσότητ</span>
<span class="t" style="left:566.90px;top:221.77px;font-size:6.6px;line-height:6.6px;color:#555;transform:scaleX(0.890);transform-origin:0 50%;">Αξία μονε</span>
<span class="t" style="left:599.40px;top:221.77px;font-size:6.6px;line-height:6.6px;color:#555;transform:scaleX(0.890);transform-origin:0 50%;">Αξία δαπάνι</span>
<span class="t" style="left:639.20px;top:221.77px;font-size:6.6px;line-height:6.6px;color:#555;transform:scaleX(0.890);transform-origin:0 50%;">Συμμετοχ</span>
<span class="t" style="left:670.70px;top:221.77px;font-size:6.6px;line-height:6.6px;color:#555;transform:scaleX(0.890);transform-origin:0 50%;">Έκπτωση</span>
<span class="t" style="left:734.00px;top:221.77px;font-size:6.6px;line-height:6.6px;color:#555;transform:scaleX(0.890);transform-origin:0 50%;">Καθ. Αξία</span>
<span class="t" style="left:769.60px;top:221.77px;font-size:6.6px;line-height:6.6px;color:#555;transform:scaleX(0.890);transform-origin:0 50%;">Ημ/νία Ει</span>
<span class="t" style="left:811.80px;top:221.77px;font-size:6.6px;line-height:6.6px;color:#555;transform:scaleX(0.890);transform-origin:0 50%;">Ημ/νία Εξόδ</span>
<span class="t" style="left:849.80px;top:221.77px;font-size:6.6px;line-height:6.6px;color:#555;transform:scaleX(0.890);transform-origin:0 50%;">Κωδ. Αναφ</span>
<span class="t" style="left:886.40px;top:221.77px;font-size:6.6px;line-height:6.6px;color:#555;transform:scaleX(0.890);transform-origin:0 50%;">ΑΦΜ Προμηθ.</span>
<div style="left:82.90px;top:240.60px;width:938.50px;height:1.00px;background:#e3e3e3"></div>
<div style="left:143.60px;top:231.60px;width:1.00px;height:9.60px;background:#e3e3e3"></div>
<div style="left:217.80px;top:231.60px;width:1.00px;height:9.60px;background:#e3e3e3"></div>
<div style="left:448.10px;top:231.60px;width:1.00px;height:9.60px;background:#e3e3e3"></div>
<div style="left:490.30px;top:231.60px;width:1.00px;height:9.60px;background:#e3e3e3"></div>
<div style="left:533.40px;top:231.60px;width:1.00px;height:9.60px;background:#e3e3e3"></div>
<div style="left:564.40px;top:231.60px;width:1.00px;height:9.60px;background:#e3e3e3"></div>
<div style="left:596.90px;top:231.60px;width:1.00px;height:9.60px;background:#e3e3e3"></div>
<div style="left:635.90px;top:231.60px;width:1.00px;height:9.60px;background:#e3e3e3"></div>
<div style="left:667.60px;top:231.60px;width:1.00px;height:9.60px;background:#e3e3e3"></div>
<div style="left:730.60px;top:231.60px;width:1.00px;height:9.60px;background:#e3e3e3"></div>
<div style="left:766.60px;top:231.60px;width:1.00px;height:9.60px;background:#e3e3e3"></div>
<div style="left:808.50px;top:231.60px;width:1.00px;height:9.60px;background:#e3e3e3"></div>
<div style="left:846.50px;top:231.60px;width:1.00px;height:9.60px;background:#e3e3e3"></div>
<div style="left:882.80px;top:231.60px;width:1.00px;height:9.60px;background:#e3e3e3"></div>
<div style="left:89.40px;top:231.60px;width:54.20px;height:9.00px;overflow:hidden"><span class="t" style="left:1.60px;transform-origin:0 50%;top:1.81px;font-size:6.9px;line-height:6.9px;color:#5a5a5a;transform:scaleX(0.793);">ΙΑΤΡΙΚΕΣ ΠΡΑΞΕΙΣ</span></div>
<div style="left:143.60px;top:231.60px;width:74.20px;height:9.00px;overflow:hidden"><span class="t" style="left:2.40px;transform-origin:0 50%;top:1.81px;font-size:6.9px;line-height:6.9px;color:#5a5a5a;transform:scaleX(0.820);">110000107</span></div>
<div style="left:217.80px;top:231.60px;width:230.30px;height:9.00px;overflow:hidden"><span class="t" style="left:2.40px;transform-origin:0 50%;top:1.81px;font-size:6.9px;line-height:6.9px;color:#5a5a5a;transform:scaleX(0.898);">Γενική εξέταση αίματος (αιμοσφαιρίνη - αριθμός ερυθρών αιμοσφαιρίων, αριθμός λευ</span></div>
<div style="left:448.10px;top:231.60px;width:42.20px;height:9.00px;overflow:hidden"><span class="t" style="left:2.40px;transform-origin:0 50%;top:1.81px;font-size:6.9px;line-height:6.9px;color:#5a5a5a;transform:scaleX(0.923);">28/4/2020</span></div>
<div style="left:490.30px;top:231.60px;width:43.10px;height:9.00px;overflow:hidden"><span class="t" style="left:2.40px;transform-origin:0 50%;top:1.81px;font-size:6.9px;line-height:6.9px;color:#5a5a5a;transform:scaleX(0.923);">28/4/2020</span></div>
<div style="left:533.40px;top:231.60px;width:31.00px;height:9.00px;overflow:hidden"><span class="t" style="right:1.60px;transform-origin:100% 50%;top:1.81px;font-size:6.9px;line-height:6.9px;color:#5a5a5a;transform:scaleX(0.820);">1</span></div>
<div style="left:564.40px;top:231.60px;width:32.50px;height:9.00px;overflow:hidden"><span class="t" style="right:1.60px;transform-origin:100% 50%;top:1.81px;font-size:6.9px;line-height:6.9px;color:#5a5a5a;transform:scaleX(0.852);">2,30 €</span></div>
<div style="left:596.90px;top:231.60px;width:39.00px;height:9.00px;overflow:hidden"><span class="t" style="right:1.60px;transform-origin:100% 50%;top:1.81px;font-size:6.9px;line-height:6.9px;color:#5a5a5a;transform:scaleX(0.852);">2,30 €</span></div>
<div style="left:635.90px;top:231.60px;width:31.70px;height:9.00px;overflow:hidden"><span class="t" style="right:1.60px;transform-origin:100% 50%;top:1.81px;font-size:6.9px;line-height:6.9px;color:#5a5a5a;transform:scaleX(0.852);">0,23 €</span></div>
<div style="left:730.60px;top:231.60px;width:36.00px;height:9.00px;overflow:hidden"><span class="t" style="right:1.60px;transform-origin:100% 50%;top:1.81px;font-size:6.9px;line-height:6.9px;color:#5a5a5a;transform:scaleX(0.852);">2,07 €</span></div>
<div style="left:766.60px;top:231.60px;width:41.90px;height:9.00px;overflow:hidden"><span class="t" style="left:2.40px;transform-origin:0 50%;top:1.81px;font-size:6.9px;line-height:6.9px;color:#5a5a5a;transform:scaleX(0.923);">28/4/2020</span></div>
<div style="left:808.50px;top:231.60px;width:38.00px;height:9.00px;overflow:hidden"><span class="t" style="left:2.40px;transform-origin:0 50%;top:1.81px;font-size:6.9px;line-height:6.9px;color:#5a5a5a;transform:scaleX(0.923);">28/4/2020</span></div>
<div style="left:82.90px;top:250.20px;width:938.50px;height:1.00px;background:#e3e3e3"></div>
<div style="left:143.60px;top:241.20px;width:1.00px;height:9.60px;background:#e3e3e3"></div>
<div style="left:217.80px;top:241.20px;width:1.00px;height:9.60px;background:#e3e3e3"></div>
<div style="left:448.10px;top:241.20px;width:1.00px;height:9.60px;background:#e3e3e3"></div>
<div style="left:490.30px;top:241.20px;width:1.00px;height:9.60px;background:#e3e3e3"></div>
<div style="left:533.40px;top:241.20px;width:1.00px;height:9.60px;background:#e3e3e3"></div>
<div style="left:564.40px;top:241.20px;width:1.00px;height:9.60px;background:#e3e3e3"></div>
<div style="left:596.90px;top:241.20px;width:1.00px;height:9.60px;background:#e3e3e3"></div>
<div style="left:635.90px;top:241.20px;width:1.00px;height:9.60px;background:#e3e3e3"></div>
<div style="left:667.60px;top:241.20px;width:1.00px;height:9.60px;background:#e3e3e3"></div>
<div style="left:730.60px;top:241.20px;width:1.00px;height:9.60px;background:#e3e3e3"></div>
<div style="left:766.60px;top:241.20px;width:1.00px;height:9.60px;background:#e3e3e3"></div>
<div style="left:808.50px;top:241.20px;width:1.00px;height:9.60px;background:#e3e3e3"></div>
<div style="left:846.50px;top:241.20px;width:1.00px;height:9.60px;background:#e3e3e3"></div>
<div style="left:882.80px;top:241.20px;width:1.00px;height:9.60px;background:#e3e3e3"></div>
<div style="left:89.40px;top:241.20px;width:54.20px;height:9.00px;overflow:hidden"><span class="t" style="left:1.60px;transform-origin:0 50%;top:1.81px;font-size:6.9px;line-height:6.9px;color:#5a5a5a;transform:scaleX(0.793);">ΙΑΤΡΙΚΕΣ ΠΡΑΞΕΙΣ</span></div>
<div style="left:143.60px;top:241.20px;width:74.20px;height:9.00px;overflow:hidden"><span class="t" style="left:2.40px;transform-origin:0 50%;top:1.81px;font-size:6.9px;line-height:6.9px;color:#5a5a5a;transform:scaleX(0.820);">110000107</span></div>
<div style="left:217.80px;top:241.20px;width:230.30px;height:9.00px;overflow:hidden"><span class="t" style="left:2.40px;transform-origin:0 50%;top:1.81px;font-size:6.9px;line-height:6.9px;color:#5a5a5a;transform:scaleX(0.898);">Γενική εξέταση αίματος (αιμοσφαιρίνη - αριθμός ερυθρών αιμοσφαιρίων, αριθμός λευ</span></div>
<div style="left:448.10px;top:241.20px;width:42.20px;height:9.00px;overflow:hidden"><span class="t" style="left:2.40px;transform-origin:0 50%;top:1.81px;font-size:6.9px;line-height:6.9px;color:#5a5a5a;transform:scaleX(0.923);">27/4/2020</span></div>
<div style="left:490.30px;top:241.20px;width:43.10px;height:9.00px;overflow:hidden"><span class="t" style="left:2.40px;transform-origin:0 50%;top:1.81px;font-size:6.9px;line-height:6.9px;color:#5a5a5a;transform:scaleX(0.923);">27/4/2020</span></div>
<div style="left:533.40px;top:241.20px;width:31.00px;height:9.00px;overflow:hidden"><span class="t" style="right:1.60px;transform-origin:100% 50%;top:1.81px;font-size:6.9px;line-height:6.9px;color:#5a5a5a;transform:scaleX(0.820);">1</span></div>
<div style="left:564.40px;top:241.20px;width:32.50px;height:9.00px;overflow:hidden"><span class="t" style="right:1.60px;transform-origin:100% 50%;top:1.81px;font-size:6.9px;line-height:6.9px;color:#5a5a5a;transform:scaleX(0.852);">2,30 €</span></div>
<div style="left:596.90px;top:241.20px;width:39.00px;height:9.00px;overflow:hidden"><span class="t" style="right:1.60px;transform-origin:100% 50%;top:1.81px;font-size:6.9px;line-height:6.9px;color:#5a5a5a;transform:scaleX(0.852);">2,30 €</span></div>
<div style="left:635.90px;top:241.20px;width:31.70px;height:9.00px;overflow:hidden"><span class="t" style="right:1.60px;transform-origin:100% 50%;top:1.81px;font-size:6.9px;line-height:6.9px;color:#5a5a5a;transform:scaleX(0.852);">0,23 €</span></div>
<div style="left:730.60px;top:241.20px;width:36.00px;height:9.00px;overflow:hidden"><span class="t" style="right:1.60px;transform-origin:100% 50%;top:1.81px;font-size:6.9px;line-height:6.9px;color:#5a5a5a;transform:scaleX(0.852);">2,07 €</span></div>
<div style="left:766.60px;top:241.20px;width:41.90px;height:9.00px;overflow:hidden"><span class="t" style="left:2.40px;transform-origin:0 50%;top:1.81px;font-size:6.9px;line-height:6.9px;color:#5a5a5a;transform:scaleX(0.923);">27/4/2020</span></div>
<div style="left:808.50px;top:241.20px;width:38.00px;height:9.00px;overflow:hidden"><span class="t" style="left:2.40px;transform-origin:0 50%;top:1.81px;font-size:6.9px;line-height:6.9px;color:#5a5a5a;transform:scaleX(0.923);">27/4/2020</span></div>
<div style="left:82.90px;top:259.80px;width:938.50px;height:1.00px;background:#e3e3e3"></div>
<div style="left:143.60px;top:250.80px;width:1.00px;height:9.60px;background:#e3e3e3"></div>
<div style="left:217.80px;top:250.80px;width:1.00px;height:9.60px;background:#e3e3e3"></div>
<div style="left:448.10px;top:250.80px;width:1.00px;height:9.60px;background:#e3e3e3"></div>
<div style="left:490.30px;top:250.80px;width:1.00px;height:9.60px;background:#e3e3e3"></div>
<div style="left:533.40px;top:250.80px;width:1.00px;height:9.60px;background:#e3e3e3"></div>
<div style="left:564.40px;top:250.80px;width:1.00px;height:9.60px;background:#e3e3e3"></div>
<div style="left:596.90px;top:250.80px;width:1.00px;height:9.60px;background:#e3e3e3"></div>
<div style="left:635.90px;top:250.80px;width:1.00px;height:9.60px;background:#e3e3e3"></div>
<div style="left:667.60px;top:250.80px;width:1.00px;height:9.60px;background:#e3e3e3"></div>
<div style="left:730.60px;top:250.80px;width:1.00px;height:9.60px;background:#e3e3e3"></div>
<div style="left:766.60px;top:250.80px;width:1.00px;height:9.60px;background:#e3e3e3"></div>
<div style="left:808.50px;top:250.80px;width:1.00px;height:9.60px;background:#e3e3e3"></div>
<div style="left:846.50px;top:250.80px;width:1.00px;height:9.60px;background:#e3e3e3"></div>
<div style="left:882.80px;top:250.80px;width:1.00px;height:9.60px;background:#e3e3e3"></div>
<div style="left:89.40px;top:250.80px;width:54.20px;height:9.00px;overflow:hidden"><span class="t" style="left:1.60px;transform-origin:0 50%;top:1.81px;font-size:6.9px;line-height:6.9px;color:#5a5a5a;transform:scaleX(0.793);">ΙΑΤΡΙΚΕΣ ΠΡΑΞΕΙΣ</span></div>
<div style="left:143.60px;top:250.80px;width:74.20px;height:9.00px;overflow:hidden"><span class="t" style="left:2.40px;transform-origin:0 50%;top:1.81px;font-size:6.9px;line-height:6.9px;color:#5a5a5a;transform:scaleX(0.820);">130000088</span></div>
<div style="left:217.80px;top:250.80px;width:230.30px;height:9.00px;overflow:hidden"><span class="t" style="left:2.40px;transform-origin:0 50%;top:1.81px;font-size:6.9px;line-height:6.9px;color:#5a5a5a;transform:scaleX(0.894);">Προσδιορισμός ουρίας αίματος</span></div>
<div style="left:448.10px;top:250.80px;width:42.20px;height:9.00px;overflow:hidden"><span class="t" style="left:2.40px;transform-origin:0 50%;top:1.81px;font-size:6.9px;line-height:6.9px;color:#5a5a5a;transform:scaleX(0.923);">27/4/2020</span></div>
<div style="left:490.30px;top:250.80px;width:43.10px;height:9.00px;overflow:hidden"><span class="t" style="left:2.40px;transform-origin:0 50%;top:1.81px;font-size:6.9px;line-height:6.9px;color:#5a5a5a;transform:scaleX(0.923);">27/4/2020</span></div>
<div style="left:533.40px;top:250.80px;width:31.00px;height:9.00px;overflow:hidden"><span class="t" style="right:1.60px;transform-origin:100% 50%;top:1.81px;font-size:6.9px;line-height:6.9px;color:#5a5a5a;transform:scaleX(0.820);">1</span></div>
<div style="left:564.40px;top:250.80px;width:32.50px;height:9.00px;overflow:hidden"><span class="t" style="right:1.60px;transform-origin:100% 50%;top:1.81px;font-size:6.9px;line-height:6.9px;color:#5a5a5a;transform:scaleX(0.852);">1,81 €</span></div>
<div style="left:596.90px;top:250.80px;width:39.00px;height:9.00px;overflow:hidden"><span class="t" style="right:1.60px;transform-origin:100% 50%;top:1.81px;font-size:6.9px;line-height:6.9px;color:#5a5a5a;transform:scaleX(0.852);">1,81 €</span></div>
<div style="left:635.90px;top:250.80px;width:31.70px;height:9.00px;overflow:hidden"><span class="t" style="right:1.60px;transform-origin:100% 50%;top:1.81px;font-size:6.9px;line-height:6.9px;color:#5a5a5a;transform:scaleX(0.852);">0,18 €</span></div>
<div style="left:730.60px;top:250.80px;width:36.00px;height:9.00px;overflow:hidden"><span class="t" style="right:1.60px;transform-origin:100% 50%;top:1.81px;font-size:6.9px;line-height:6.9px;color:#5a5a5a;transform:scaleX(0.852);">1,63 €</span></div>
<div style="left:766.60px;top:250.80px;width:41.90px;height:9.00px;overflow:hidden"><span class="t" style="left:2.40px;transform-origin:0 50%;top:1.81px;font-size:6.9px;line-height:6.9px;color:#5a5a5a;transform:scaleX(0.923);">27/4/2020</span></div>
<div style="left:808.50px;top:250.80px;width:38.00px;height:9.00px;overflow:hidden"><span class="t" style="left:2.40px;transform-origin:0 50%;top:1.81px;font-size:6.9px;line-height:6.9px;color:#5a5a5a;transform:scaleX(0.923);">27/4/2020</span></div>
<div style="left:82.90px;top:269.40px;width:938.50px;height:1.00px;background:#e3e3e3"></div>
<div style="left:143.60px;top:260.40px;width:1.00px;height:9.60px;background:#e3e3e3"></div>
<div style="left:217.80px;top:260.40px;width:1.00px;height:9.60px;background:#e3e3e3"></div>
<div style="left:448.10px;top:260.40px;width:1.00px;height:9.60px;background:#e3e3e3"></div>
<div style="left:490.30px;top:260.40px;width:1.00px;height:9.60px;background:#e3e3e3"></div>
<div style="left:533.40px;top:260.40px;width:1.00px;height:9.60px;background:#e3e3e3"></div>
<div style="left:564.40px;top:260.40px;width:1.00px;height:9.60px;background:#e3e3e3"></div>
<div style="left:596.90px;top:260.40px;width:1.00px;height:9.60px;background:#e3e3e3"></div>
<div style="left:635.90px;top:260.40px;width:1.00px;height:9.60px;background:#e3e3e3"></div>
<div style="left:667.60px;top:260.40px;width:1.00px;height:9.60px;background:#e3e3e3"></div>
<div style="left:730.60px;top:260.40px;width:1.00px;height:9.60px;background:#e3e3e3"></div>
<div style="left:766.60px;top:260.40px;width:1.00px;height:9.60px;background:#e3e3e3"></div>
<div style="left:808.50px;top:260.40px;width:1.00px;height:9.60px;background:#e3e3e3"></div>
<div style="left:846.50px;top:260.40px;width:1.00px;height:9.60px;background:#e3e3e3"></div>
<div style="left:882.80px;top:260.40px;width:1.00px;height:9.60px;background:#e3e3e3"></div>
<div style="left:89.40px;top:260.40px;width:54.20px;height:9.00px;overflow:hidden"><span class="t" style="left:1.60px;transform-origin:0 50%;top:1.81px;font-size:6.9px;line-height:6.9px;color:#5a5a5a;transform:scaleX(0.793);">ΙΑΤΡΙΚΕΣ ΠΡΑΞΕΙΣ</span></div>
<div style="left:143.60px;top:260.40px;width:74.20px;height:9.00px;overflow:hidden"><span class="t" style="left:2.40px;transform-origin:0 50%;top:1.81px;font-size:6.9px;line-height:6.9px;color:#5a5a5a;transform:scaleX(0.820);">130000326</span></div>
<div style="left:217.80px;top:260.40px;width:230.30px;height:9.00px;overflow:hidden"><span class="t" style="left:2.40px;transform-origin:0 50%;top:1.81px;font-size:6.9px;line-height:6.9px;color:#5a5a5a;transform:scaleX(0.890);">Προσδιορισμός στο αίμα νατρίου Na</span></div>
<div style="left:448.10px;top:260.40px;width:42.20px;height:9.00px;overflow:hidden"><span class="t" style="left:2.40px;transform-origin:0 50%;top:1.81px;font-size:6.9px;line-height:6.9px;color:#5a5a5a;transform:scaleX(0.923);">27/4/2020</span></div>
<div style="left:490.30px;top:260.40px;width:43.10px;height:9.00px;overflow:hidden"><span class="t" style="left:2.40px;transform-origin:0 50%;top:1.81px;font-size:6.9px;line-height:6.9px;color:#5a5a5a;transform:scaleX(0.923);">27/4/2020</span></div>
<div style="left:533.40px;top:260.40px;width:31.00px;height:9.00px;overflow:hidden"><span class="t" style="right:1.60px;transform-origin:100% 50%;top:1.81px;font-size:6.9px;line-height:6.9px;color:#5a5a5a;transform:scaleX(0.820);">1</span></div>
<div style="left:564.40px;top:260.40px;width:32.50px;height:9.00px;overflow:hidden"><span class="t" style="right:1.60px;transform-origin:100% 50%;top:1.81px;font-size:6.9px;line-height:6.9px;color:#5a5a5a;transform:scaleX(0.852);">4,18 €</span></div>
<div style="left:596.90px;top:260.40px;width:39.00px;height:9.00px;overflow:hidden"><span class="t" style="right:1.60px;transform-origin:100% 50%;top:1.81px;font-size:6.9px;line-height:6.9px;color:#5a5a5a;transform:scaleX(0.852);">4,18 €</span></div>
<div style="left:635.90px;top:260.40px;width:31.70px;height:9.00px;overflow:hidden"><span class="t" style="right:1.60px;transform-origin:100% 50%;top:1.81px;font-size:6.9px;line-height:6.9px;color:#5a5a5a;transform:scaleX(0.852);">0,42 €</span></div>
<div style="left:730.60px;top:260.40px;width:36.00px;height:9.00px;overflow:hidden"><span class="t" style="right:1.60px;transform-origin:100% 50%;top:1.81px;font-size:6.9px;line-height:6.9px;color:#5a5a5a;transform:scaleX(0.852);">3,76 €</span></div>
<div style="left:766.60px;top:260.40px;width:41.90px;height:9.00px;overflow:hidden"><span class="t" style="left:2.40px;transform-origin:0 50%;top:1.81px;font-size:6.9px;line-height:6.9px;color:#5a5a5a;transform:scaleX(0.923);">27/4/2020</span></div>
<div style="left:808.50px;top:260.40px;width:38.00px;height:9.00px;overflow:hidden"><span class="t" style="left:2.40px;transform-origin:0 50%;top:1.81px;font-size:6.9px;line-height:6.9px;color:#5a5a5a;transform:scaleX(0.923);">27/4/2020</span></div>
<div style="left:82.90px;top:279.00px;width:938.50px;height:1.00px;background:#e3e3e3"></div>
<div style="left:143.60px;top:270.00px;width:1.00px;height:9.60px;background:#e3e3e3"></div>
<div style="left:217.80px;top:270.00px;width:1.00px;height:9.60px;background:#e3e3e3"></div>
<div style="left:448.10px;top:270.00px;width:1.00px;height:9.60px;background:#e3e3e3"></div>
<div style="left:490.30px;top:270.00px;width:1.00px;height:9.60px;background:#e3e3e3"></div>
<div style="left:533.40px;top:270.00px;width:1.00px;height:9.60px;background:#e3e3e3"></div>
<div style="left:564.40px;top:270.00px;width:1.00px;height:9.60px;background:#e3e3e3"></div>
<div style="left:596.90px;top:270.00px;width:1.00px;height:9.60px;background:#e3e3e3"></div>
<div style="left:635.90px;top:270.00px;width:1.00px;height:9.60px;background:#e3e3e3"></div>
<div style="left:667.60px;top:270.00px;width:1.00px;height:9.60px;background:#e3e3e3"></div>
<div style="left:730.60px;top:270.00px;width:1.00px;height:9.60px;background:#e3e3e3"></div>
<div style="left:766.60px;top:270.00px;width:1.00px;height:9.60px;background:#e3e3e3"></div>
<div style="left:808.50px;top:270.00px;width:1.00px;height:9.60px;background:#e3e3e3"></div>
<div style="left:846.50px;top:270.00px;width:1.00px;height:9.60px;background:#e3e3e3"></div>
<div style="left:882.80px;top:270.00px;width:1.00px;height:9.60px;background:#e3e3e3"></div>
<div style="left:89.40px;top:270.00px;width:54.20px;height:9.00px;overflow:hidden"><span class="t" style="left:1.60px;transform-origin:0 50%;top:1.81px;font-size:6.9px;line-height:6.9px;color:#5a5a5a;transform:scaleX(0.793);">ΙΑΤΡΙΚΕΣ ΠΡΑΞΕΙΣ</span></div>
<div style="left:143.60px;top:270.00px;width:74.20px;height:9.00px;overflow:hidden"><span class="t" style="left:2.40px;transform-origin:0 50%;top:1.81px;font-size:6.9px;line-height:6.9px;color:#5a5a5a;transform:scaleX(0.820);">130000327</span></div>
<div style="left:217.80px;top:270.00px;width:230.30px;height:9.00px;overflow:hidden"><span class="t" style="left:2.40px;transform-origin:0 50%;top:1.81px;font-size:6.9px;line-height:6.9px;color:#5a5a5a;transform:scaleX(0.890);">Προσδιορισμός στο αίμα καλίου K</span></div>
<div style="left:448.10px;top:270.00px;width:42.20px;height:9.00px;overflow:hidden"><span class="t" style="left:2.40px;transform-origin:0 50%;top:1.81px;font-size:6.9px;line-height:6.9px;color:#5a5a5a;transform:scaleX(0.923);">27/4/2020</span></div>
<div style="left:490.30px;top:270.00px;width:43.10px;height:9.00px;overflow:hidden"><span class="t" style="left:2.40px;transform-origin:0 50%;top:1.81px;font-size:6.9px;line-height:6.9px;color:#5a5a5a;transform:scaleX(0.923);">27/4/2020</span></div>
<div style="left:533.40px;top:270.00px;width:31.00px;height:9.00px;overflow:hidden"><span class="t" style="right:1.60px;transform-origin:100% 50%;top:1.81px;font-size:6.9px;line-height:6.9px;color:#5a5a5a;transform:scaleX(0.820);">1</span></div>
<div style="left:564.40px;top:270.00px;width:32.50px;height:9.00px;overflow:hidden"><span class="t" style="right:1.60px;transform-origin:100% 50%;top:1.81px;font-size:6.9px;line-height:6.9px;color:#5a5a5a;transform:scaleX(0.852);">4,18 €</span></div>
<div style="left:596.90px;top:270.00px;width:39.00px;height:9.00px;overflow:hidden"><span class="t" style="right:1.60px;transform-origin:100% 50%;top:1.81px;font-size:6.9px;line-height:6.9px;color:#5a5a5a;transform:scaleX(0.852);">4,18 €</span></div>
<div style="left:635.90px;top:270.00px;width:31.70px;height:9.00px;overflow:hidden"><span class="t" style="right:1.60px;transform-origin:100% 50%;top:1.81px;font-size:6.9px;line-height:6.9px;color:#5a5a5a;transform:scaleX(0.852);">0,42 €</span></div>
<div style="left:730.60px;top:270.00px;width:36.00px;height:9.00px;overflow:hidden"><span class="t" style="right:1.60px;transform-origin:100% 50%;top:1.81px;font-size:6.9px;line-height:6.9px;color:#5a5a5a;transform:scaleX(0.852);">3,76 €</span></div>
<div style="left:766.60px;top:270.00px;width:41.90px;height:9.00px;overflow:hidden"><span class="t" style="left:2.40px;transform-origin:0 50%;top:1.81px;font-size:6.9px;line-height:6.9px;color:#5a5a5a;transform:scaleX(0.923);">27/4/2020</span></div>
<div style="left:808.50px;top:270.00px;width:38.00px;height:9.00px;overflow:hidden"><span class="t" style="left:2.40px;transform-origin:0 50%;top:1.81px;font-size:6.9px;line-height:6.9px;color:#5a5a5a;transform:scaleX(0.923);">27/4/2020</span></div>
<div style="left:82.90px;top:288.60px;width:938.50px;height:1.00px;background:#e3e3e3"></div>
<div style="left:143.60px;top:279.60px;width:1.00px;height:9.60px;background:#e3e3e3"></div>
<div style="left:217.80px;top:279.60px;width:1.00px;height:9.60px;background:#e3e3e3"></div>
<div style="left:448.10px;top:279.60px;width:1.00px;height:9.60px;background:#e3e3e3"></div>
<div style="left:490.30px;top:279.60px;width:1.00px;height:9.60px;background:#e3e3e3"></div>
<div style="left:533.40px;top:279.60px;width:1.00px;height:9.60px;background:#e3e3e3"></div>
<div style="left:564.40px;top:279.60px;width:1.00px;height:9.60px;background:#e3e3e3"></div>
<div style="left:596.90px;top:279.60px;width:1.00px;height:9.60px;background:#e3e3e3"></div>
<div style="left:635.90px;top:279.60px;width:1.00px;height:9.60px;background:#e3e3e3"></div>
<div style="left:667.60px;top:279.60px;width:1.00px;height:9.60px;background:#e3e3e3"></div>
<div style="left:730.60px;top:279.60px;width:1.00px;height:9.60px;background:#e3e3e3"></div>
<div style="left:766.60px;top:279.60px;width:1.00px;height:9.60px;background:#e3e3e3"></div>
<div style="left:808.50px;top:279.60px;width:1.00px;height:9.60px;background:#e3e3e3"></div>
<div style="left:846.50px;top:279.60px;width:1.00px;height:9.60px;background:#e3e3e3"></div>
<div style="left:882.80px;top:279.60px;width:1.00px;height:9.60px;background:#e3e3e3"></div>
<div style="left:89.40px;top:279.60px;width:54.20px;height:9.00px;overflow:hidden"><span class="t" style="left:1.60px;transform-origin:0 50%;top:1.81px;font-size:6.9px;line-height:6.9px;color:#5a5a5a;transform:scaleX(0.793);">ΙΑΤΡΙΚΕΣ ΠΡΑΞΕΙΣ</span></div>
<div style="left:143.60px;top:279.60px;width:74.20px;height:9.00px;overflow:hidden"><span class="t" style="left:2.40px;transform-origin:0 50%;top:1.81px;font-size:6.9px;line-height:6.9px;color:#5a5a5a;transform:scaleX(0.820);">130000324</span></div>
<div style="left:217.80px;top:279.60px;width:230.30px;height:9.00px;overflow:hidden"><span class="t" style="left:2.40px;transform-origin:0 50%;top:1.81px;font-size:6.9px;line-height:6.9px;color:#5a5a5a;transform:scaleX(0.865);">Κρεατινίνη αίματος (CREAT)</span></div>
<div style="left:448.10px;top:279.60px;width:42.20px;height:9.00px;overflow:hidden"><span class="t" style="left:2.40px;transform-origin:0 50%;top:1.81px;font-size:6.9px;line-height:6.9px;color:#5a5a5a;transform:scaleX(0.923);">27/4/2020</span></div>
<div style="left:490.30px;top:279.60px;width:43.10px;height:9.00px;overflow:hidden"><span class="t" style="left:2.40px;transform-origin:0 50%;top:1.81px;font-size:6.9px;line-height:6.9px;color:#5a5a5a;transform:scaleX(0.923);">27/4/2020</span></div>
<div style="left:533.40px;top:279.60px;width:31.00px;height:9.00px;overflow:hidden"><span class="t" style="right:1.60px;transform-origin:100% 50%;top:1.81px;font-size:6.9px;line-height:6.9px;color:#5a5a5a;transform:scaleX(0.820);">1</span></div>
<div style="left:564.40px;top:279.60px;width:32.50px;height:9.00px;overflow:hidden"><span class="t" style="right:1.60px;transform-origin:100% 50%;top:1.81px;font-size:6.9px;line-height:6.9px;color:#5a5a5a;transform:scaleX(0.852);">3,24 €</span></div>
<div style="left:596.90px;top:279.60px;width:39.00px;height:9.00px;overflow:hidden"><span class="t" style="right:1.60px;transform-origin:100% 50%;top:1.81px;font-size:6.9px;line-height:6.9px;color:#5a5a5a;transform:scaleX(0.852);">3,24 €</span></div>
<div style="left:635.90px;top:279.60px;width:31.70px;height:9.00px;overflow:hidden"><span class="t" style="right:1.60px;transform-origin:100% 50%;top:1.81px;font-size:6.9px;line-height:6.9px;color:#5a5a5a;transform:scaleX(0.852);">0,32 €</span></div>
<div style="left:730.60px;top:279.60px;width:36.00px;height:9.00px;overflow:hidden"><span class="t" style="right:1.60px;transform-origin:100% 50%;top:1.81px;font-size:6.9px;line-height:6.9px;color:#5a5a5a;transform:scaleX(0.852);">2,92 €</span></div>
<div style="left:766.60px;top:279.60px;width:41.90px;height:9.00px;overflow:hidden"><span class="t" style="left:2.40px;transform-origin:0 50%;top:1.81px;font-size:6.9px;line-height:6.9px;color:#5a5a5a;transform:scaleX(0.923);">27/4/2020</span></div>
<div style="left:808.50px;top:279.60px;width:38.00px;height:9.00px;overflow:hidden"><span class="t" style="left:2.40px;transform-origin:0 50%;top:1.81px;font-size:6.9px;line-height:6.9px;color:#5a5a5a;transform:scaleX(0.923);">27/4/2020</span></div>
<div style="left:82.90px;top:298.20px;width:938.50px;height:1.00px;background:#e3e3e3"></div>
<div style="left:143.60px;top:289.20px;width:1.00px;height:9.60px;background:#e3e3e3"></div>
<div style="left:217.80px;top:289.20px;width:1.00px;height:9.60px;background:#e3e3e3"></div>
<div style="left:448.10px;top:289.20px;width:1.00px;height:9.60px;background:#e3e3e3"></div>
<div style="left:490.30px;top:289.20px;width:1.00px;height:9.60px;background:#e3e3e3"></div>
<div style="left:533.40px;top:289.20px;width:1.00px;height:9.60px;background:#e3e3e3"></div>
<div style="left:564.40px;top:289.20px;width:1.00px;height:9.60px;background:#e3e3e3"></div>
<div style="left:596.90px;top:289.20px;width:1.00px;height:9.60px;background:#e3e3e3"></div>
<div style="left:635.90px;top:289.20px;width:1.00px;height:9.60px;background:#e3e3e3"></div>
<div style="left:667.60px;top:289.20px;width:1.00px;height:9.60px;background:#e3e3e3"></div>
<div style="left:730.60px;top:289.20px;width:1.00px;height:9.60px;background:#e3e3e3"></div>
<div style="left:766.60px;top:289.20px;width:1.00px;height:9.60px;background:#e3e3e3"></div>
<div style="left:808.50px;top:289.20px;width:1.00px;height:9.60px;background:#e3e3e3"></div>
<div style="left:846.50px;top:289.20px;width:1.00px;height:9.60px;background:#e3e3e3"></div>
<div style="left:882.80px;top:289.20px;width:1.00px;height:9.60px;background:#e3e3e3"></div>
<div style="left:89.40px;top:289.20px;width:54.20px;height:9.00px;overflow:hidden"><span class="t" style="left:1.60px;transform-origin:0 50%;top:1.81px;font-size:6.9px;line-height:6.9px;color:#5a5a5a;transform:scaleX(0.793);">ΙΑΤΡΙΚΕΣ ΠΡΑΞΕΙΣ</span></div>
<div style="left:143.60px;top:289.20px;width:74.20px;height:9.00px;overflow:hidden"><span class="t" style="left:2.40px;transform-origin:0 50%;top:1.81px;font-size:6.9px;line-height:6.9px;color:#5a5a5a;transform:scaleX(0.820);">130000312</span></div>
<div style="left:217.80px;top:289.20px;width:230.30px;height:9.00px;overflow:hidden"><span class="t" style="left:2.40px;transform-origin:0 50%;top:1.81px;font-size:6.9px;line-height:6.9px;color:#5a5a5a;transform:scaleX(0.877);">Οξαλοξεική τρανσαμινάση (AST/SGOT)</span></div>
<div style="left:448.10px;top:289.20px;width:42.20px;height:9.00px;overflow:hidden"><span class="t" style="left:2.40px;transform-origin:0 50%;top:1.81px;font-size:6.9px;line-height:6.9px;color:#5a5a5a;transform:scaleX(0.923);">27/4/2020</span></div>
<div style="left:490.30px;top:289.20px;width:43.10px;height:9.00px;overflow:hidden"><span class="t" style="left:2.40px;transform-origin:0 50%;top:1.81px;font-size:6.9px;line-height:6.9px;color:#5a5a5a;transform:scaleX(0.923);">27/4/2020</span></div>
<div style="left:533.40px;top:289.20px;width:31.00px;height:9.00px;overflow:hidden"><span class="t" style="right:1.60px;transform-origin:100% 50%;top:1.81px;font-size:6.9px;line-height:6.9px;color:#5a5a5a;transform:scaleX(0.820);">1</span></div>
<div style="left:564.40px;top:289.20px;width:32.50px;height:9.00px;overflow:hidden"><span class="t" style="right:1.60px;transform-origin:100% 50%;top:1.81px;font-size:6.9px;line-height:6.9px;color:#5a5a5a;transform:scaleX(0.852);">3,59 €</span></div>
<div style="left:596.90px;top:289.20px;width:39.00px;height:9.00px;overflow:hidden"><span class="t" style="right:1.60px;transform-origin:100% 50%;top:1.81px;font-size:6.9px;line-height:6.9px;color:#5a5a5a;transform:scaleX(0.852);">3,59 €</span></div>
<div style="left:635.90px;top:289.20px;width:31.70px;height:9.00px;overflow:hidden"><span class="t" style="right:1.60px;transform-origin:100% 50%;top:1.81px;font-size:6.9px;line-height:6.9px;color:#5a5a5a;transform:scaleX(0.852);">0,36 €</span></div>
<div style="left:730.60px;top:289.20px;width:36.00px;height:9.00px;overflow:hidden"><span class="t" style="right:1.60px;transform-origin:100% 50%;top:1.81px;font-size:6.9px;line-height:6.9px;color:#5a5a5a;transform:scaleX(0.852);">3,23 €</span></div>
<div style="left:766.60px;top:289.20px;width:41.90px;height:9.00px;overflow:hidden"><span class="t" style="left:2.40px;transform-origin:0 50%;top:1.81px;font-size:6.9px;line-height:6.9px;color:#5a5a5a;transform:scaleX(0.923);">27/4/2020</span></div>
<div style="left:808.50px;top:289.20px;width:38.00px;height:9.00px;overflow:hidden"><span class="t" style="left:2.40px;transform-origin:0 50%;top:1.81px;font-size:6.9px;line-height:6.9px;color:#5a5a5a;transform:scaleX(0.923);">27/4/2020</span></div>
<div style="left:82.90px;top:307.80px;width:938.50px;height:1.00px;background:#e3e3e3"></div>
<div style="left:143.60px;top:298.80px;width:1.00px;height:9.60px;background:#e3e3e3"></div>
<div style="left:217.80px;top:298.80px;width:1.00px;height:9.60px;background:#e3e3e3"></div>
<div style="left:448.10px;top:298.80px;width:1.00px;height:9.60px;background:#e3e3e3"></div>
<div style="left:490.30px;top:298.80px;width:1.00px;height:9.60px;background:#e3e3e3"></div>
<div style="left:533.40px;top:298.80px;width:1.00px;height:9.60px;background:#e3e3e3"></div>
<div style="left:564.40px;top:298.80px;width:1.00px;height:9.60px;background:#e3e3e3"></div>
<div style="left:596.90px;top:298.80px;width:1.00px;height:9.60px;background:#e3e3e3"></div>
<div style="left:635.90px;top:298.80px;width:1.00px;height:9.60px;background:#e3e3e3"></div>
<div style="left:667.60px;top:298.80px;width:1.00px;height:9.60px;background:#e3e3e3"></div>
<div style="left:730.60px;top:298.80px;width:1.00px;height:9.60px;background:#e3e3e3"></div>
<div style="left:766.60px;top:298.80px;width:1.00px;height:9.60px;background:#e3e3e3"></div>
<div style="left:808.50px;top:298.80px;width:1.00px;height:9.60px;background:#e3e3e3"></div>
<div style="left:846.50px;top:298.80px;width:1.00px;height:9.60px;background:#e3e3e3"></div>
<div style="left:882.80px;top:298.80px;width:1.00px;height:9.60px;background:#e3e3e3"></div>
<div style="left:89.40px;top:298.80px;width:54.20px;height:9.00px;overflow:hidden"><span class="t" style="left:1.60px;transform-origin:0 50%;top:1.81px;font-size:6.9px;line-height:6.9px;color:#5a5a5a;transform:scaleX(0.793);">ΙΑΤΡΙΚΕΣ ΠΡΑΞΕΙΣ</span></div>
<div style="left:143.60px;top:298.80px;width:74.20px;height:9.00px;overflow:hidden"><span class="t" style="left:2.40px;transform-origin:0 50%;top:1.81px;font-size:6.9px;line-height:6.9px;color:#5a5a5a;transform:scaleX(0.820);">130000313</span></div>
<div style="left:217.80px;top:298.80px;width:230.30px;height:9.00px;overflow:hidden"><span class="t" style="left:2.40px;transform-origin:0 50%;top:1.81px;font-size:6.9px;line-height:6.9px;color:#5a5a5a;transform:scaleX(0.881);">Πυροσταφυλική τρανσαμινάση (ALT/SGPT)</span></div>
<div style="left:448.10px;top:298.80px;width:42.20px;height:9.00px;overflow:hidden"><span class="t" style="left:2.40px;transform-origin:0 50%;top:1.81px;font-size:6.9px;line-height:6.9px;color:#5a5a5a;transform:scaleX(0.923);">27/4/2020</span></div>
<div style="left:490.30px;top:298.80px;width:43.10px;height:9.00px;overflow:hidden"><span class="t" style="left:2.40px;transform-origin:0 50%;top:1.81px;font-size:6.9px;line-height:6.9px;color:#5a5a5a;transform:scaleX(0.923);">27/4/2020</span></div>
<div style="left:533.40px;top:298.80px;width:31.00px;height:9.00px;overflow:hidden"><span class="t" style="right:1.60px;transform-origin:100% 50%;top:1.81px;font-size:6.9px;line-height:6.9px;color:#5a5a5a;transform:scaleX(0.820);">1</span></div>
<div style="left:564.40px;top:298.80px;width:32.50px;height:9.00px;overflow:hidden"><span class="t" style="right:1.60px;transform-origin:100% 50%;top:1.81px;font-size:6.9px;line-height:6.9px;color:#5a5a5a;transform:scaleX(0.852);">3,59 €</span></div>
<div style="left:596.90px;top:298.80px;width:39.00px;height:9.00px;overflow:hidden"><span class="t" style="right:1.60px;transform-origin:100% 50%;top:1.81px;font-size:6.9px;line-height:6.9px;color:#5a5a5a;transform:scaleX(0.852);">3,59 €</span></div>
<div style="left:635.90px;top:298.80px;width:31.70px;height:9.00px;overflow:hidden"><span class="t" style="right:1.60px;transform-origin:100% 50%;top:1.81px;font-size:6.9px;line-height:6.9px;color:#5a5a5a;transform:scaleX(0.852);">0,36 €</span></div>
<div style="left:730.60px;top:298.80px;width:36.00px;height:9.00px;overflow:hidden"><span class="t" style="right:1.60px;transform-origin:100% 50%;top:1.81px;font-size:6.9px;line-height:6.9px;color:#5a5a5a;transform:scaleX(0.852);">3,23 €</span></div>
<div style="left:766.60px;top:298.80px;width:41.90px;height:9.00px;overflow:hidden"><span class="t" style="left:2.40px;transform-origin:0 50%;top:1.81px;font-size:6.9px;line-height:6.9px;color:#5a5a5a;transform:scaleX(0.923);">27/4/2020</span></div>
<div style="left:808.50px;top:298.80px;width:38.00px;height:9.00px;overflow:hidden"><span class="t" style="left:2.40px;transform-origin:0 50%;top:1.81px;font-size:6.9px;line-height:6.9px;color:#5a5a5a;transform:scaleX(0.923);">27/4/2020</span></div>
<div style="left:82.90px;top:317.40px;width:938.50px;height:1.00px;background:#e3e3e3"></div>
<div style="left:143.60px;top:308.40px;width:1.00px;height:9.60px;background:#e3e3e3"></div>
<div style="left:217.80px;top:308.40px;width:1.00px;height:9.60px;background:#e3e3e3"></div>
<div style="left:448.10px;top:308.40px;width:1.00px;height:9.60px;background:#e3e3e3"></div>
<div style="left:490.30px;top:308.40px;width:1.00px;height:9.60px;background:#e3e3e3"></div>
<div style="left:533.40px;top:308.40px;width:1.00px;height:9.60px;background:#e3e3e3"></div>
<div style="left:564.40px;top:308.40px;width:1.00px;height:9.60px;background:#e3e3e3"></div>
<div style="left:596.90px;top:308.40px;width:1.00px;height:9.60px;background:#e3e3e3"></div>
<div style="left:635.90px;top:308.40px;width:1.00px;height:9.60px;background:#e3e3e3"></div>
<div style="left:667.60px;top:308.40px;width:1.00px;height:9.60px;background:#e3e3e3"></div>
<div style="left:730.60px;top:308.40px;width:1.00px;height:9.60px;background:#e3e3e3"></div>
<div style="left:766.60px;top:308.40px;width:1.00px;height:9.60px;background:#e3e3e3"></div>
<div style="left:808.50px;top:308.40px;width:1.00px;height:9.60px;background:#e3e3e3"></div>
<div style="left:846.50px;top:308.40px;width:1.00px;height:9.60px;background:#e3e3e3"></div>
<div style="left:882.80px;top:308.40px;width:1.00px;height:9.60px;background:#e3e3e3"></div>
<div style="left:89.40px;top:308.40px;width:54.20px;height:9.00px;overflow:hidden"><span class="t" style="left:1.60px;transform-origin:0 50%;top:1.81px;font-size:6.9px;line-height:6.9px;color:#5a5a5a;transform:scaleX(0.793);">ΙΑΤΡΙΚΕΣ ΠΡΑΞΕΙΣ</span></div>
<div style="left:143.60px;top:308.40px;width:74.20px;height:9.00px;overflow:hidden"><span class="t" style="left:2.40px;transform-origin:0 50%;top:1.81px;font-size:6.9px;line-height:6.9px;color:#5a5a5a;transform:scaleX(0.820);">110000110</span></div>
<div style="left:217.80px;top:308.40px;width:230.30px;height:9.00px;overflow:hidden"><span class="t" style="left:2.40px;transform-origin:0 50%;top:1.81px;font-size:6.9px;line-height:6.9px;color:#5a5a5a;transform:scaleX(0.891);">Εξέταση αίματος για ταχύτητα καθίζησης ερυθρών αιμοσφαιρίων ΤΚΕ</span></div>
<div style="left:448.10px;top:308.40px;width:42.20px;height:9.00px;overflow:hidden"><span class="t" style="left:2.40px;transform-origin:0 50%;top:1.81px;font-size:6.9px;line-height:6.9px;color:#5a5a5a;transform:scaleX(0.923);">25/4/2020</span></div>
<div style="left:490.30px;top:308.40px;width:43.10px;height:9.00px;overflow:hidden"><span class="t" style="left:2.40px;transform-origin:0 50%;top:1.81px;font-size:6.9px;line-height:6.9px;color:#5a5a5a;transform:scaleX(0.923);">25/4/2020</span></div>
<div style="left:533.40px;top:308.40px;width:31.00px;height:9.00px;overflow:hidden"><span class="t" style="right:1.60px;transform-origin:100% 50%;top:1.81px;font-size:6.9px;line-height:6.9px;color:#5a5a5a;transform:scaleX(0.820);">1</span></div>
<div style="left:564.40px;top:308.40px;width:32.50px;height:9.00px;overflow:hidden"><span class="t" style="right:1.60px;transform-origin:100% 50%;top:1.81px;font-size:6.9px;line-height:6.9px;color:#5a5a5a;transform:scaleX(0.852);">1,41 €</span></div>
<div style="left:596.90px;top:308.40px;width:39.00px;height:9.00px;overflow:hidden"><span class="t" style="right:1.60px;transform-origin:100% 50%;top:1.81px;font-size:6.9px;line-height:6.9px;color:#5a5a5a;transform:scaleX(0.852);">1,41 €</span></div>
<div style="left:635.90px;top:308.40px;width:31.70px;height:9.00px;overflow:hidden"><span class="t" style="right:1.60px;transform-origin:100% 50%;top:1.81px;font-size:6.9px;line-height:6.9px;color:#5a5a5a;transform:scaleX(0.852);">0,14 €</span></div>
<div style="left:730.60px;top:308.40px;width:36.00px;height:9.00px;overflow:hidden"><span class="t" style="right:1.60px;transform-origin:100% 50%;top:1.81px;font-size:6.9px;line-height:6.9px;color:#5a5a5a;transform:scaleX(0.852);">1,27 €</span></div>
<div style="left:766.60px;top:308.40px;width:41.90px;height:9.00px;overflow:hidden"><span class="t" style="left:2.40px;transform-origin:0 50%;top:1.81px;font-size:6.9px;line-height:6.9px;color:#5a5a5a;transform:scaleX(0.923);">25/4/2020</span></div>
<div style="left:808.50px;top:308.40px;width:38.00px;height:9.00px;overflow:hidden"><span class="t" style="left:2.40px;transform-origin:0 50%;top:1.81px;font-size:6.9px;line-height:6.9px;color:#5a5a5a;transform:scaleX(0.923);">25/4/2020</span></div>
<div style="left:82.90px;top:327.00px;width:938.50px;height:1.00px;background:#e3e3e3"></div>
<div style="left:143.60px;top:318.00px;width:1.00px;height:9.60px;background:#e3e3e3"></div>
<div style="left:217.80px;top:318.00px;width:1.00px;height:9.60px;background:#e3e3e3"></div>
<div style="left:448.10px;top:318.00px;width:1.00px;height:9.60px;background:#e3e3e3"></div>
<div style="left:490.30px;top:318.00px;width:1.00px;height:9.60px;background:#e3e3e3"></div>
<div style="left:533.40px;top:318.00px;width:1.00px;height:9.60px;background:#e3e3e3"></div>
<div style="left:564.40px;top:318.00px;width:1.00px;height:9.60px;background:#e3e3e3"></div>
<div style="left:596.90px;top:318.00px;width:1.00px;height:9.60px;background:#e3e3e3"></div>
<div style="left:635.90px;top:318.00px;width:1.00px;height:9.60px;background:#e3e3e3"></div>
<div style="left:667.60px;top:318.00px;width:1.00px;height:9.60px;background:#e3e3e3"></div>
<div style="left:730.60px;top:318.00px;width:1.00px;height:9.60px;background:#e3e3e3"></div>
<div style="left:766.60px;top:318.00px;width:1.00px;height:9.60px;background:#e3e3e3"></div>
<div style="left:808.50px;top:318.00px;width:1.00px;height:9.60px;background:#e3e3e3"></div>
<div style="left:846.50px;top:318.00px;width:1.00px;height:9.60px;background:#e3e3e3"></div>
<div style="left:882.80px;top:318.00px;width:1.00px;height:9.60px;background:#e3e3e3"></div>
<div style="left:89.40px;top:318.00px;width:54.20px;height:9.00px;overflow:hidden"><span class="t" style="left:1.60px;transform-origin:0 50%;top:1.81px;font-size:6.9px;line-height:6.9px;color:#5a5a5a;transform:scaleX(0.793);">ΙΑΤΡΙΚΕΣ ΠΡΑΞΕΙΣ</span></div>
<div style="left:143.60px;top:318.00px;width:74.20px;height:9.00px;overflow:hidden"><span class="t" style="left:2.40px;transform-origin:0 50%;top:1.81px;font-size:6.9px;line-height:6.9px;color:#5a5a5a;transform:scaleX(0.820);">120000219</span></div>
<div style="left:217.80px;top:318.00px;width:230.30px;height:9.00px;overflow:hidden"><span class="t" style="left:2.40px;transform-origin:0 50%;top:1.81px;font-size:6.9px;line-height:6.9px;color:#5a5a5a;transform:scaleX(0.882);">CA 125 με μονοκλωνικά αντισώματα</span></div>
<div style="left:448.10px;top:318.00px;width:42.20px;height:9.00px;overflow:hidden"><span class="t" style="left:2.40px;transform-origin:0 50%;top:1.81px;font-size:6.9px;line-height:6.9px;color:#5a5a5a;transform:scaleX(0.923);">25/4/2020</span></div>
<div style="left:490.30px;top:318.00px;width:43.10px;height:9.00px;overflow:hidden"><span class="t" style="left:2.40px;transform-origin:0 50%;top:1.81px;font-size:6.9px;line-height:6.9px;color:#5a5a5a;transform:scaleX(0.923);">25/4/2020</span></div>
<div style="left:533.40px;top:318.00px;width:31.00px;height:9.00px;overflow:hidden"><span class="t" style="right:1.60px;transform-origin:100% 50%;top:1.81px;font-size:6.9px;line-height:6.9px;color:#5a5a5a;transform:scaleX(0.820);">1</span></div>
<div style="left:564.40px;top:318.00px;width:32.50px;height:9.00px;overflow:hidden"><span class="t" style="right:1.60px;transform-origin:100% 50%;top:1.81px;font-size:6.9px;line-height:6.9px;color:#5a5a5a;transform:scaleX(0.847);">11,20 €</span></div>
<div style="left:596.90px;top:318.00px;width:39.00px;height:9.00px;overflow:hidden"><span class="t" style="right:1.60px;transform-origin:100% 50%;top:1.81px;font-size:6.9px;line-height:6.9px;color:#5a5a5a;transform:scaleX(0.847);">11,20 €</span></div>
<div style="left:635.90px;top:318.00px;width:31.70px;height:9.00px;overflow:hidden"><span class="t" style="right:1.60px;transform-origin:100% 50%;top:1.81px;font-size:6.9px;line-height:6.9px;color:#5a5a5a;transform:scaleX(0.852);">1,12 €</span></div>
<div style="left:730.60px;top:318.00px;width:36.00px;height:9.00px;overflow:hidden"><span class="t" style="right:1.60px;transform-origin:100% 50%;top:1.81px;font-size:6.9px;line-height:6.9px;color:#5a5a5a;transform:scaleX(0.847);">10,08 €</span></div>
<div style="left:766.60px;top:318.00px;width:41.90px;height:9.00px;overflow:hidden"><span class="t" style="left:2.40px;transform-origin:0 50%;top:1.81px;font-size:6.9px;line-height:6.9px;color:#5a5a5a;transform:scaleX(0.923);">25/4/2020</span></div>
<div style="left:808.50px;top:318.00px;width:38.00px;height:9.00px;overflow:hidden"><span class="t" style="left:2.40px;transform-origin:0 50%;top:1.81px;font-size:6.9px;line-height:6.9px;color:#5a5a5a;transform:scaleX(0.923);">25/4/2020</span></div>
<div style="left:82.90px;top:336.60px;width:938.50px;height:1.00px;background:#e3e3e3"></div>
<div style="left:143.60px;top:327.60px;width:1.00px;height:9.60px;background:#e3e3e3"></div>
<div style="left:217.80px;top:327.60px;width:1.00px;height:9.60px;background:#e3e3e3"></div>
<div style="left:448.10px;top:327.60px;width:1.00px;height:9.60px;background:#e3e3e3"></div>
<div style="left:490.30px;top:327.60px;width:1.00px;height:9.60px;background:#e3e3e3"></div>
<div style="left:533.40px;top:327.60px;width:1.00px;height:9.60px;background:#e3e3e3"></div>
<div style="left:564.40px;top:327.60px;width:1.00px;height:9.60px;background:#e3e3e3"></div>
<div style="left:596.90px;top:327.60px;width:1.00px;height:9.60px;background:#e3e3e3"></div>
<div style="left:635.90px;top:327.60px;width:1.00px;height:9.60px;background:#e3e3e3"></div>
<div style="left:667.60px;top:327.60px;width:1.00px;height:9.60px;background:#e3e3e3"></div>
<div style="left:730.60px;top:327.60px;width:1.00px;height:9.60px;background:#e3e3e3"></div>
<div style="left:766.60px;top:327.60px;width:1.00px;height:9.60px;background:#e3e3e3"></div>
<div style="left:808.50px;top:327.60px;width:1.00px;height:9.60px;background:#e3e3e3"></div>
<div style="left:846.50px;top:327.60px;width:1.00px;height:9.60px;background:#e3e3e3"></div>
<div style="left:882.80px;top:327.60px;width:1.00px;height:9.60px;background:#e3e3e3"></div>
<div style="left:89.40px;top:327.60px;width:54.20px;height:9.00px;overflow:hidden"><span class="t" style="left:1.60px;transform-origin:0 50%;top:1.81px;font-size:6.9px;line-height:6.9px;color:#5a5a5a;transform:scaleX(0.793);">ΙΑΤΡΙΚΕΣ ΠΡΑΞΕΙΣ</span></div>
<div style="left:143.60px;top:327.60px;width:74.20px;height:9.00px;overflow:hidden"><span class="t" style="left:2.40px;transform-origin:0 50%;top:1.81px;font-size:6.9px;line-height:6.9px;color:#5a5a5a;transform:scaleX(0.820);">120000220</span></div>
<div style="left:217.80px;top:327.60px;width:230.30px;height:9.00px;overflow:hidden"><span class="t" style="left:2.40px;transform-origin:0 50%;top:1.81px;font-size:6.9px;line-height:6.9px;color:#5a5a5a;transform:scaleX(0.883);">CA 19-9 με μονοκλωνικά αντισώματα</span></div>
<div style="left:448.10px;top:327.60px;width:42.20px;height:9.00px;overflow:hidden"><span class="t" style="left:2.40px;transform-origin:0 50%;top:1.81px;font-size:6.9px;line-height:6.9px;color:#5a5a5a;transform:scaleX(0.923);">25/4/2020</span></div>
<div style="left:490.30px;top:327.60px;width:43.10px;height:9.00px;overflow:hidden"><span class="t" style="left:2.40px;transform-origin:0 50%;top:1.81px;font-size:6.9px;line-height:6.9px;color:#5a5a5a;transform:scaleX(0.923);">25/4/2020</span></div>
<div style="left:533.40px;top:327.60px;width:31.00px;height:9.00px;overflow:hidden"><span class="t" style="right:1.60px;transform-origin:100% 50%;top:1.81px;font-size:6.9px;line-height:6.9px;color:#5a5a5a;transform:scaleX(0.820);">1</span></div>
<div style="left:564.40px;top:327.60px;width:32.50px;height:9.00px;overflow:hidden"><span class="t" style="right:1.60px;transform-origin:100% 50%;top:1.81px;font-size:6.9px;line-height:6.9px;color:#5a5a5a;transform:scaleX(0.847);">11,20 €</span></div>
<div style="left:596.90px;top:327.60px;width:39.00px;height:9.00px;overflow:hidden"><span class="t" style="right:1.60px;transform-origin:100% 50%;top:1.81px;font-size:6.9px;line-height:6.9px;color:#5a5a5a;transform:scaleX(0.847);">11,20 €</span></div>
<div style="left:635.90px;top:327.60px;width:31.70px;height:9.00px;overflow:hidden"><span class="t" style="right:1.60px;transform-origin:100% 50%;top:1.81px;font-size:6.9px;line-height:6.9px;color:#5a5a5a;transform:scaleX(0.852);">1,12 €</span></div>
<div style="left:730.60px;top:327.60px;width:36.00px;height:9.00px;overflow:hidden"><span class="t" style="right:1.60px;transform-origin:100% 50%;top:1.81px;font-size:6.9px;line-height:6.9px;color:#5a5a5a;transform:scaleX(0.847);">10,08 €</span></div>
<div style="left:766.60px;top:327.60px;width:41.90px;height:9.00px;overflow:hidden"><span class="t" style="left:2.40px;transform-origin:0 50%;top:1.81px;font-size:6.9px;line-height:6.9px;color:#5a5a5a;transform:scaleX(0.923);">25/4/2020</span></div>
<div style="left:808.50px;top:327.60px;width:38.00px;height:9.00px;overflow:hidden"><span class="t" style="left:2.40px;transform-origin:0 50%;top:1.81px;font-size:6.9px;line-height:6.9px;color:#5a5a5a;transform:scaleX(0.923);">25/4/2020</span></div>
<div style="left:82.90px;top:346.20px;width:938.50px;height:1.00px;background:#e3e3e3"></div>
<div style="left:143.60px;top:337.20px;width:1.00px;height:9.60px;background:#e3e3e3"></div>
<div style="left:217.80px;top:337.20px;width:1.00px;height:9.60px;background:#e3e3e3"></div>
<div style="left:448.10px;top:337.20px;width:1.00px;height:9.60px;background:#e3e3e3"></div>
<div style="left:490.30px;top:337.20px;width:1.00px;height:9.60px;background:#e3e3e3"></div>
<div style="left:533.40px;top:337.20px;width:1.00px;height:9.60px;background:#e3e3e3"></div>
<div style="left:564.40px;top:337.20px;width:1.00px;height:9.60px;background:#e3e3e3"></div>
<div style="left:596.90px;top:337.20px;width:1.00px;height:9.60px;background:#e3e3e3"></div>
<div style="left:635.90px;top:337.20px;width:1.00px;height:9.60px;background:#e3e3e3"></div>
<div style="left:667.60px;top:337.20px;width:1.00px;height:9.60px;background:#e3e3e3"></div>
<div style="left:730.60px;top:337.20px;width:1.00px;height:9.60px;background:#e3e3e3"></div>
<div style="left:766.60px;top:337.20px;width:1.00px;height:9.60px;background:#e3e3e3"></div>
<div style="left:808.50px;top:337.20px;width:1.00px;height:9.60px;background:#e3e3e3"></div>
<div style="left:846.50px;top:337.20px;width:1.00px;height:9.60px;background:#e3e3e3"></div>
<div style="left:882.80px;top:337.20px;width:1.00px;height:9.60px;background:#e3e3e3"></div>
<div style="left:89.40px;top:337.20px;width:54.20px;height:9.00px;overflow:hidden"><span class="t" style="left:1.60px;transform-origin:0 50%;top:1.81px;font-size:6.9px;line-height:6.9px;color:#5a5a5a;transform:scaleX(0.793);">ΙΑΤΡΙΚΕΣ ΠΡΑΞΕΙΣ</span></div>
<div style="left:143.60px;top:337.20px;width:74.20px;height:9.00px;overflow:hidden"><span class="t" style="left:2.40px;transform-origin:0 50%;top:1.81px;font-size:6.9px;line-height:6.9px;color:#5a5a5a;transform:scaleX(0.820);">120000076</span></div>
<div style="left:217.80px;top:337.20px;width:230.30px;height:9.00px;overflow:hidden"><span class="t" style="left:2.40px;transform-origin:0 50%;top:1.81px;font-size:6.9px;line-height:6.9px;color:#5a5a5a;transform:scaleX(0.880);">Καρκινοεμβρυϊκό αντιγόνο (CEA)</span></div>
<div style="left:448.10px;top:337.20px;width:42.20px;height:9.00px;overflow:hidden"><span class="t" style="left:2.40px;transform-origin:0 50%;top:1.81px;font-size:6.9px;line-height:6.9px;color:#5a5a5a;transform:scaleX(0.923);">25/4/2020</span></div>
<div style="left:490.30px;top:337.20px;width:43.10px;height:9.00px;overflow:hidden"><span class="t" style="left:2.40px;transform-origin:0 50%;top:1.81px;font-size:6.9px;line-height:6.9px;color:#5a5a5a;transform:scaleX(0.923);">25/4/2020</span></div>
<div style="left:533.40px;top:337.20px;width:31.00px;height:9.00px;overflow:hidden"><span class="t" style="right:1.60px;transform-origin:100% 50%;top:1.81px;font-size:6.9px;line-height:6.9px;color:#5a5a5a;transform:scaleX(0.820);">1</span></div>
<div style="left:564.40px;top:337.20px;width:32.50px;height:9.00px;overflow:hidden"><span class="t" style="right:1.60px;transform-origin:100% 50%;top:1.81px;font-size:6.9px;line-height:6.9px;color:#5a5a5a;transform:scaleX(0.852);">9,90 €</span></div>
<div style="left:596.90px;top:337.20px;width:39.00px;height:9.00px;overflow:hidden"><span class="t" style="right:1.60px;transform-origin:100% 50%;top:1.81px;font-size:6.9px;line-height:6.9px;color:#5a5a5a;transform:scaleX(0.852);">9,90 €</span></div>
<div style="left:635.90px;top:337.20px;width:31.70px;height:9.00px;overflow:hidden"><span class="t" style="right:1.60px;transform-origin:100% 50%;top:1.81px;font-size:6.9px;line-height:6.9px;color:#5a5a5a;transform:scaleX(0.852);">0,99 €</span></div>
<div style="left:730.60px;top:337.20px;width:36.00px;height:9.00px;overflow:hidden"><span class="t" style="right:1.60px;transform-origin:100% 50%;top:1.81px;font-size:6.9px;line-height:6.9px;color:#5a5a5a;transform:scaleX(0.852);">8,91 €</span></div>
<div style="left:766.60px;top:337.20px;width:41.90px;height:9.00px;overflow:hidden"><span class="t" style="left:2.40px;transform-origin:0 50%;top:1.81px;font-size:6.9px;line-height:6.9px;color:#5a5a5a;transform:scaleX(0.923);">25/4/2020</span></div>
<div style="left:808.50px;top:337.20px;width:38.00px;height:9.00px;overflow:hidden"><span class="t" style="left:2.40px;transform-origin:0 50%;top:1.81px;font-size:6.9px;line-height:6.9px;color:#5a5a5a;transform:scaleX(0.923);">25/4/2020</span></div>
<div style="left:82.90px;top:355.80px;width:938.50px;height:1.00px;background:#e3e3e3"></div>
<div style="left:143.60px;top:346.80px;width:1.00px;height:9.60px;background:#e3e3e3"></div>
<div style="left:217.80px;top:346.80px;width:1.00px;height:9.60px;background:#e3e3e3"></div>
<div style="left:448.10px;top:346.80px;width:1.00px;height:9.60px;background:#e3e3e3"></div>
<div style="left:490.30px;top:346.80px;width:1.00px;height:9.60px;background:#e3e3e3"></div>
<div style="left:533.40px;top:346.80px;width:1.00px;height:9.60px;background:#e3e3e3"></div>
<div style="left:564.40px;top:346.80px;width:1.00px;height:9.60px;background:#e3e3e3"></div>
<div style="left:596.90px;top:346.80px;width:1.00px;height:9.60px;background:#e3e3e3"></div>
<div style="left:635.90px;top:346.80px;width:1.00px;height:9.60px;background:#e3e3e3"></div>
<div style="left:667.60px;top:346.80px;width:1.00px;height:9.60px;background:#e3e3e3"></div>
<div style="left:730.60px;top:346.80px;width:1.00px;height:9.60px;background:#e3e3e3"></div>
<div style="left:766.60px;top:346.80px;width:1.00px;height:9.60px;background:#e3e3e3"></div>
<div style="left:808.50px;top:346.80px;width:1.00px;height:9.60px;background:#e3e3e3"></div>
<div style="left:846.50px;top:346.80px;width:1.00px;height:9.60px;background:#e3e3e3"></div>
<div style="left:882.80px;top:346.80px;width:1.00px;height:9.60px;background:#e3e3e3"></div>
<div style="left:89.40px;top:346.80px;width:54.20px;height:9.00px;overflow:hidden"><span class="t" style="left:1.60px;transform-origin:0 50%;top:1.81px;font-size:6.9px;line-height:6.9px;color:#5a5a5a;transform:scaleX(0.793);">ΙΑΤΡΙΚΕΣ ΠΡΑΞΕΙΣ</span></div>
<div style="left:143.60px;top:346.80px;width:74.20px;height:9.00px;overflow:hidden"><span class="t" style="left:2.40px;transform-origin:0 50%;top:1.81px;font-size:6.9px;line-height:6.9px;color:#5a5a5a;transform:scaleX(0.820);">110000107</span></div>
<div style="left:217.80px;top:346.80px;width:230.30px;height:9.00px;overflow:hidden"><span class="t" style="left:2.40px;transform-origin:0 50%;top:1.81px;font-size:6.9px;line-height:6.9px;color:#5a5a5a;transform:scaleX(0.898);">Γενική εξέταση αίματος (αιμοσφαιρίνη - αριθμός ερυθρών αιμοσφαιρίων, αριθμός λευ</span></div>
<div style="left:448.10px;top:346.80px;width:42.20px;height:9.00px;overflow:hidden"><span class="t" style="left:2.40px;transform-origin:0 50%;top:1.81px;font-size:6.9px;line-height:6.9px;color:#5a5a5a;transform:scaleX(0.923);">24/4/2020</span></div>
<div style="left:490.30px;top:346.80px;width:43.10px;height:9.00px;overflow:hidden"><span class="t" style="left:2.40px;transform-origin:0 50%;top:1.81px;font-size:6.9px;line-height:6.9px;color:#5a5a5a;transform:scaleX(0.923);">24/4/2020</span></div>
<div style="left:533.40px;top:346.80px;width:31.00px;height:9.00px;overflow:hidden"><span class="t" style="right:1.60px;transform-origin:100% 50%;top:1.81px;font-size:6.9px;line-height:6.9px;color:#5a5a5a;transform:scaleX(0.820);">1</span></div>
<div style="left:564.40px;top:346.80px;width:32.50px;height:9.00px;overflow:hidden"><span class="t" style="right:1.60px;transform-origin:100% 50%;top:1.81px;font-size:6.9px;line-height:6.9px;color:#5a5a5a;transform:scaleX(0.852);">2,30 €</span></div>
<div style="left:596.90px;top:346.80px;width:39.00px;height:9.00px;overflow:hidden"><span class="t" style="right:1.60px;transform-origin:100% 50%;top:1.81px;font-size:6.9px;line-height:6.9px;color:#5a5a5a;transform:scaleX(0.852);">2,30 €</span></div>
<div style="left:635.90px;top:346.80px;width:31.70px;height:9.00px;overflow:hidden"><span class="t" style="right:1.60px;transform-origin:100% 50%;top:1.81px;font-size:6.9px;line-height:6.9px;color:#5a5a5a;transform:scaleX(0.852);">0,23 €</span></div>
<div style="left:730.60px;top:346.80px;width:36.00px;height:9.00px;overflow:hidden"><span class="t" style="right:1.60px;transform-origin:100% 50%;top:1.81px;font-size:6.9px;line-height:6.9px;color:#5a5a5a;transform:scaleX(0.852);">2,07 €</span></div>
<div style="left:766.60px;top:346.80px;width:41.90px;height:9.00px;overflow:hidden"><span class="t" style="left:2.40px;transform-origin:0 50%;top:1.81px;font-size:6.9px;line-height:6.9px;color:#5a5a5a;transform:scaleX(0.923);">24/4/2020</span></div>
<div style="left:808.50px;top:346.80px;width:38.00px;height:9.00px;overflow:hidden"><span class="t" style="left:2.40px;transform-origin:0 50%;top:1.81px;font-size:6.9px;line-height:6.9px;color:#5a5a5a;transform:scaleX(0.923);">24/4/2020</span></div>
<div style="left:82.90px;top:365.40px;width:938.50px;height:1.00px;background:#e3e3e3"></div>
<div style="left:143.60px;top:356.40px;width:1.00px;height:9.60px;background:#e3e3e3"></div>
<div style="left:217.80px;top:356.40px;width:1.00px;height:9.60px;background:#e3e3e3"></div>
<div style="left:448.10px;top:356.40px;width:1.00px;height:9.60px;background:#e3e3e3"></div>
<div style="left:490.30px;top:356.40px;width:1.00px;height:9.60px;background:#e3e3e3"></div>
<div style="left:533.40px;top:356.40px;width:1.00px;height:9.60px;background:#e3e3e3"></div>
<div style="left:564.40px;top:356.40px;width:1.00px;height:9.60px;background:#e3e3e3"></div>
<div style="left:596.90px;top:356.40px;width:1.00px;height:9.60px;background:#e3e3e3"></div>
<div style="left:635.90px;top:356.40px;width:1.00px;height:9.60px;background:#e3e3e3"></div>
<div style="left:667.60px;top:356.40px;width:1.00px;height:9.60px;background:#e3e3e3"></div>
<div style="left:730.60px;top:356.40px;width:1.00px;height:9.60px;background:#e3e3e3"></div>
<div style="left:766.60px;top:356.40px;width:1.00px;height:9.60px;background:#e3e3e3"></div>
<div style="left:808.50px;top:356.40px;width:1.00px;height:9.60px;background:#e3e3e3"></div>
<div style="left:846.50px;top:356.40px;width:1.00px;height:9.60px;background:#e3e3e3"></div>
<div style="left:882.80px;top:356.40px;width:1.00px;height:9.60px;background:#e3e3e3"></div>
<div style="left:89.40px;top:356.40px;width:54.20px;height:9.00px;overflow:hidden"><span class="t" style="left:1.60px;transform-origin:0 50%;top:1.81px;font-size:6.9px;line-height:6.9px;color:#5a5a5a;transform:scaleX(0.793);">ΙΑΤΡΙΚΕΣ ΠΡΑΞΕΙΣ</span></div>
<div style="left:143.60px;top:356.40px;width:74.20px;height:9.00px;overflow:hidden"><span class="t" style="left:2.40px;transform-origin:0 50%;top:1.81px;font-size:6.9px;line-height:6.9px;color:#5a5a5a;transform:scaleX(0.820);">110000110</span></div>
<div style="left:217.80px;top:356.40px;width:230.30px;height:9.00px;overflow:hidden"><span class="t" style="left:2.40px;transform-origin:0 50%;top:1.81px;font-size:6.9px;line-height:6.9px;color:#5a5a5a;transform:scaleX(0.891);">Εξέταση αίματος για ταχύτητα καθίζησης ερυθρών αιμοσφαιρίων ΤΚΕ</span></div>
<div style="left:448.10px;top:356.40px;width:42.20px;height:9.00px;overflow:hidden"><span class="t" style="left:2.40px;transform-origin:0 50%;top:1.81px;font-size:6.9px;line-height:6.9px;color:#5a5a5a;transform:scaleX(0.923);">24/4/2020</span></div>
<div style="left:490.30px;top:356.40px;width:43.10px;height:9.00px;overflow:hidden"><span class="t" style="left:2.40px;transform-origin:0 50%;top:1.81px;font-size:6.9px;line-height:6.9px;color:#5a5a5a;transform:scaleX(0.923);">24/4/2020</span></div>
<div style="left:533.40px;top:356.40px;width:31.00px;height:9.00px;overflow:hidden"><span class="t" style="right:1.60px;transform-origin:100% 50%;top:1.81px;font-size:6.9px;line-height:6.9px;color:#5a5a5a;transform:scaleX(0.820);">1</span></div>
<div style="left:564.40px;top:356.40px;width:32.50px;height:9.00px;overflow:hidden"><span class="t" style="right:1.60px;transform-origin:100% 50%;top:1.81px;font-size:6.9px;line-height:6.9px;color:#5a5a5a;transform:scaleX(0.852);">1,41 €</span></div>
<div style="left:596.90px;top:356.40px;width:39.00px;height:9.00px;overflow:hidden"><span class="t" style="right:1.60px;transform-origin:100% 50%;top:1.81px;font-size:6.9px;line-height:6.9px;color:#5a5a5a;transform:scaleX(0.852);">1,41 €</span></div>
<div style="left:635.90px;top:356.40px;width:31.70px;height:9.00px;overflow:hidden"><span class="t" style="right:1.60px;transform-origin:100% 50%;top:1.81px;font-size:6.9px;line-height:6.9px;color:#5a5a5a;transform:scaleX(0.852);">0,14 €</span></div>
<div style="left:730.60px;top:356.40px;width:36.00px;height:9.00px;overflow:hidden"><span class="t" style="right:1.60px;transform-origin:100% 50%;top:1.81px;font-size:6.9px;line-height:6.9px;color:#5a5a5a;transform:scaleX(0.852);">1,27 €</span></div>
<div style="left:766.60px;top:356.40px;width:41.90px;height:9.00px;overflow:hidden"><span class="t" style="left:2.40px;transform-origin:0 50%;top:1.81px;font-size:6.9px;line-height:6.9px;color:#5a5a5a;transform:scaleX(0.923);">24/4/2020</span></div>
<div style="left:808.50px;top:356.40px;width:38.00px;height:9.00px;overflow:hidden"><span class="t" style="left:2.40px;transform-origin:0 50%;top:1.81px;font-size:6.9px;line-height:6.9px;color:#5a5a5a;transform:scaleX(0.923);">24/4/2020</span></div>
<div style="left:82.90px;top:375.00px;width:938.50px;height:1.00px;background:#e3e3e3"></div>
<div style="left:143.60px;top:366.00px;width:1.00px;height:9.60px;background:#e3e3e3"></div>
<div style="left:217.80px;top:366.00px;width:1.00px;height:9.60px;background:#e3e3e3"></div>
<div style="left:448.10px;top:366.00px;width:1.00px;height:9.60px;background:#e3e3e3"></div>
<div style="left:490.30px;top:366.00px;width:1.00px;height:9.60px;background:#e3e3e3"></div>
<div style="left:533.40px;top:366.00px;width:1.00px;height:9.60px;background:#e3e3e3"></div>
<div style="left:564.40px;top:366.00px;width:1.00px;height:9.60px;background:#e3e3e3"></div>
<div style="left:596.90px;top:366.00px;width:1.00px;height:9.60px;background:#e3e3e3"></div>
<div style="left:635.90px;top:366.00px;width:1.00px;height:9.60px;background:#e3e3e3"></div>
<div style="left:667.60px;top:366.00px;width:1.00px;height:9.60px;background:#e3e3e3"></div>
<div style="left:730.60px;top:366.00px;width:1.00px;height:9.60px;background:#e3e3e3"></div>
<div style="left:766.60px;top:366.00px;width:1.00px;height:9.60px;background:#e3e3e3"></div>
<div style="left:808.50px;top:366.00px;width:1.00px;height:9.60px;background:#e3e3e3"></div>
<div style="left:846.50px;top:366.00px;width:1.00px;height:9.60px;background:#e3e3e3"></div>
<div style="left:882.80px;top:366.00px;width:1.00px;height:9.60px;background:#e3e3e3"></div>
<div style="left:89.40px;top:366.00px;width:54.20px;height:9.00px;overflow:hidden"><span class="t" style="left:1.60px;transform-origin:0 50%;top:1.81px;font-size:6.9px;line-height:6.9px;color:#5a5a5a;transform:scaleX(0.793);">ΙΑΤΡΙΚΕΣ ΠΡΑΞΕΙΣ</span></div>
<div style="left:143.60px;top:366.00px;width:74.20px;height:9.00px;overflow:hidden"><span class="t" style="left:2.40px;transform-origin:0 50%;top:1.81px;font-size:6.9px;line-height:6.9px;color:#5a5a5a;transform:scaleX(0.820);">130000038</span></div>
<div style="left:217.80px;top:366.00px;width:230.30px;height:9.00px;overflow:hidden"><span class="t" style="left:2.40px;transform-origin:0 50%;top:1.81px;font-size:6.9px;line-height:6.9px;color:#5a5a5a;transform:scaleX(0.883);">Αλκαλική φωσφατάση αίματος (ALP)</span></div>
<div style="left:448.10px;top:366.00px;width:42.20px;height:9.00px;overflow:hidden"><span class="t" style="left:2.40px;transform-origin:0 50%;top:1.81px;font-size:6.9px;line-height:6.9px;color:#5a5a5a;transform:scaleX(0.923);">24/4/2020</span></div>
<div style="left:490.30px;top:366.00px;width:43.10px;height:9.00px;overflow:hidden"><span class="t" style="left:2.40px;transform-origin:0 50%;top:1.81px;font-size:6.9px;line-height:6.9px;color:#5a5a5a;transform:scaleX(0.923);">24/4/2020</span></div>
<div style="left:533.40px;top:366.00px;width:31.00px;height:9.00px;overflow:hidden"><span class="t" style="right:1.60px;transform-origin:100% 50%;top:1.81px;font-size:6.9px;line-height:6.9px;color:#5a5a5a;transform:scaleX(0.820);">1</span></div>
<div style="left:564.40px;top:366.00px;width:32.50px;height:9.00px;overflow:hidden"><span class="t" style="right:1.60px;transform-origin:100% 50%;top:1.81px;font-size:6.9px;line-height:6.9px;color:#5a5a5a;transform:scaleX(0.852);">4,02 €</span></div>
<div style="left:596.90px;top:366.00px;width:39.00px;height:9.00px;overflow:hidden"><span class="t" style="right:1.60px;transform-origin:100% 50%;top:1.81px;font-size:6.9px;line-height:6.9px;color:#5a5a5a;transform:scaleX(0.852);">4,02 €</span></div>
<div style="left:635.90px;top:366.00px;width:31.70px;height:9.00px;overflow:hidden"><span class="t" style="right:1.60px;transform-origin:100% 50%;top:1.81px;font-size:6.9px;line-height:6.9px;color:#5a5a5a;transform:scaleX(0.852);">0,40 €</span></div>
<div style="left:730.60px;top:366.00px;width:36.00px;height:9.00px;overflow:hidden"><span class="t" style="right:1.60px;transform-origin:100% 50%;top:1.81px;font-size:6.9px;line-height:6.9px;color:#5a5a5a;transform:scaleX(0.852);">3,62 €</span></div>
<div style="left:766.60px;top:366.00px;width:41.90px;height:9.00px;overflow:hidden"><span class="t" style="left:2.40px;transform-origin:0 50%;top:1.81px;font-size:6.9px;line-height:6.9px;color:#5a5a5a;transform:scaleX(0.923);">24/4/2020</span></div>
<div style="left:808.50px;top:366.00px;width:38.00px;height:9.00px;overflow:hidden"><span class="t" style="left:2.40px;transform-origin:0 50%;top:1.81px;font-size:6.9px;line-height:6.9px;color:#5a5a5a;transform:scaleX(0.923);">24/4/2020</span></div>
<div style="left:82.90px;top:384.60px;width:938.50px;height:1.00px;background:#e3e3e3"></div>
<div style="left:143.60px;top:375.60px;width:1.00px;height:9.60px;background:#e3e3e3"></div>
<div style="left:217.80px;top:375.60px;width:1.00px;height:9.60px;background:#e3e3e3"></div>
<div style="left:448.10px;top:375.60px;width:1.00px;height:9.60px;background:#e3e3e3"></div>
<div style="left:490.30px;top:375.60px;width:1.00px;height:9.60px;background:#e3e3e3"></div>
<div style="left:533.40px;top:375.60px;width:1.00px;height:9.60px;background:#e3e3e3"></div>
<div style="left:564.40px;top:375.60px;width:1.00px;height:9.60px;background:#e3e3e3"></div>
<div style="left:596.90px;top:375.60px;width:1.00px;height:9.60px;background:#e3e3e3"></div>
<div style="left:635.90px;top:375.60px;width:1.00px;height:9.60px;background:#e3e3e3"></div>
<div style="left:667.60px;top:375.60px;width:1.00px;height:9.60px;background:#e3e3e3"></div>
<div style="left:730.60px;top:375.60px;width:1.00px;height:9.60px;background:#e3e3e3"></div>
<div style="left:766.60px;top:375.60px;width:1.00px;height:9.60px;background:#e3e3e3"></div>
<div style="left:808.50px;top:375.60px;width:1.00px;height:9.60px;background:#e3e3e3"></div>
<div style="left:846.50px;top:375.60px;width:1.00px;height:9.60px;background:#e3e3e3"></div>
<div style="left:882.80px;top:375.60px;width:1.00px;height:9.60px;background:#e3e3e3"></div>
<div style="left:89.40px;top:375.60px;width:54.20px;height:9.00px;overflow:hidden"><span class="t" style="left:1.60px;transform-origin:0 50%;top:1.81px;font-size:6.9px;line-height:6.9px;color:#5a5a5a;transform:scaleX(0.793);">ΙΑΤΡΙΚΕΣ ΠΡΑΞΕΙΣ</span></div>
<div style="left:143.60px;top:375.60px;width:74.20px;height:9.00px;overflow:hidden"><span class="t" style="left:2.40px;transform-origin:0 50%;top:1.81px;font-size:6.9px;line-height:6.9px;color:#5a5a5a;transform:scaleX(0.820);">130000270</span></div>
<div style="left:217.80px;top:375.60px;width:230.30px;height:9.00px;overflow:hidden"><span class="t" style="left:2.40px;transform-origin:0 50%;top:1.81px;font-size:6.9px;line-height:6.9px;color:#5a5a5a;transform:scaleX(0.870);">Ποσοτική μέτρηση CRP</span></div>
<div style="left:448.10px;top:375.60px;width:42.20px;height:9.00px;overflow:hidden"><span class="t" style="left:2.40px;transform-origin:0 50%;top:1.81px;font-size:6.9px;line-height:6.9px;color:#5a5a5a;transform:scaleX(0.923);">24/4/2020</span></div>
<div style="left:490.30px;top:375.60px;width:43.10px;height:9.00px;overflow:hidden"><span class="t" style="left:2.40px;transform-origin:0 50%;top:1.81px;font-size:6.9px;line-height:6.9px;color:#5a5a5a;transform:scaleX(0.923);">24/4/2020</span></div>
<div style="left:533.40px;top:375.60px;width:31.00px;height:9.00px;overflow:hidden"><span class="t" style="right:1.60px;transform-origin:100% 50%;top:1.81px;font-size:6.9px;line-height:6.9px;color:#5a5a5a;transform:scaleX(0.820);">1</span></div>
<div style="left:564.40px;top:375.60px;width:32.50px;height:9.00px;overflow:hidden"><span class="t" style="right:1.60px;transform-origin:100% 50%;top:1.81px;font-size:6.9px;line-height:6.9px;color:#5a5a5a;transform:scaleX(0.852);">8,00 €</span></div>
<div style="left:596.90px;top:375.60px;width:39.00px;height:9.00px;overflow:hidden"><span class="t" style="right:1.60px;transform-origin:100% 50%;top:1.81px;font-size:6.9px;line-height:6.9px;color:#5a5a5a;transform:scaleX(0.852);">8,00 €</span></div>
<div style="left:635.90px;top:375.60px;width:31.70px;height:9.00px;overflow:hidden"><span class="t" style="right:1.60px;transform-origin:100% 50%;top:1.81px;font-size:6.9px;line-height:6.9px;color:#5a5a5a;transform:scaleX(0.852);">0,80 €</span></div>
<div style="left:730.60px;top:375.60px;width:36.00px;height:9.00px;overflow:hidden"><span class="t" style="right:1.60px;transform-origin:100% 50%;top:1.81px;font-size:6.9px;line-height:6.9px;color:#5a5a5a;transform:scaleX(0.852);">7,20 €</span></div>
<div style="left:766.60px;top:375.60px;width:41.90px;height:9.00px;overflow:hidden"><span class="t" style="left:2.40px;transform-origin:0 50%;top:1.81px;font-size:6.9px;line-height:6.9px;color:#5a5a5a;transform:scaleX(0.923);">24/4/2020</span></div>
<div style="left:808.50px;top:375.60px;width:38.00px;height:9.00px;overflow:hidden"><span class="t" style="left:2.40px;transform-origin:0 50%;top:1.81px;font-size:6.9px;line-height:6.9px;color:#5a5a5a;transform:scaleX(0.923);">24/4/2020</span></div>
<div style="left:82.90px;top:394.20px;width:938.50px;height:1.00px;background:#e3e3e3"></div>
<div style="left:143.60px;top:385.20px;width:1.00px;height:9.60px;background:#e3e3e3"></div>
<div style="left:217.80px;top:385.20px;width:1.00px;height:9.60px;background:#e3e3e3"></div>
<div style="left:448.10px;top:385.20px;width:1.00px;height:9.60px;background:#e3e3e3"></div>
<div style="left:490.30px;top:385.20px;width:1.00px;height:9.60px;background:#e3e3e3"></div>
<div style="left:533.40px;top:385.20px;width:1.00px;height:9.60px;background:#e3e3e3"></div>
<div style="left:564.40px;top:385.20px;width:1.00px;height:9.60px;background:#e3e3e3"></div>
<div style="left:596.90px;top:385.20px;width:1.00px;height:9.60px;background:#e3e3e3"></div>
<div style="left:635.90px;top:385.20px;width:1.00px;height:9.60px;background:#e3e3e3"></div>
<div style="left:667.60px;top:385.20px;width:1.00px;height:9.60px;background:#e3e3e3"></div>
<div style="left:730.60px;top:385.20px;width:1.00px;height:9.60px;background:#e3e3e3"></div>
<div style="left:766.60px;top:385.20px;width:1.00px;height:9.60px;background:#e3e3e3"></div>
<div style="left:808.50px;top:385.20px;width:1.00px;height:9.60px;background:#e3e3e3"></div>
<div style="left:846.50px;top:385.20px;width:1.00px;height:9.60px;background:#e3e3e3"></div>
<div style="left:882.80px;top:385.20px;width:1.00px;height:9.60px;background:#e3e3e3"></div>
<div style="left:89.40px;top:385.20px;width:54.20px;height:9.00px;overflow:hidden"><span class="t" style="left:1.60px;transform-origin:0 50%;top:1.81px;font-size:6.9px;line-height:6.9px;color:#5a5a5a;transform:scaleX(0.790);">ΝΟΣΗΛΙΑ</span></div>
<div style="left:143.60px;top:385.20px;width:74.20px;height:9.00px;overflow:hidden"><span class="t" style="left:2.40px;transform-origin:0 50%;top:1.81px;font-size:6.9px;line-height:6.9px;color:#5a5a5a;transform:scaleX(0.820);">00034</span></div>
<div style="left:217.80px;top:385.20px;width:230.30px;height:9.00px;overflow:hidden"><span class="t" style="left:2.40px;transform-origin:0 50%;top:1.81px;font-size:6.9px;line-height:6.9px;color:#5a5a5a;transform:scaleX(0.793);">ΗΜΕΡΗΣΙΑ ΦΑΡΜΑΚΕΥΤΙΚΗ ΔΑΠΑΝΗ</span></div>
<div style="left:533.40px;top:385.20px;width:31.00px;height:9.00px;overflow:hidden"><span class="t" style="right:1.60px;transform-origin:100% 50%;top:1.81px;font-size:6.9px;line-height:6.9px;color:#5a5a5a;transform:scaleX(0.820);">27</span></div>
<div style="left:564.40px;top:385.20px;width:32.50px;height:9.00px;overflow:hidden"><span class="t" style="right:1.60px;transform-origin:100% 50%;top:1.81px;font-size:6.9px;line-height:6.9px;color:#5a5a5a;transform:scaleX(0.847);">10,00 €</span></div>
<div style="left:596.90px;top:385.20px;width:39.00px;height:9.00px;overflow:hidden"><span class="t" style="right:1.60px;transform-origin:100% 50%;top:1.81px;font-size:6.9px;line-height:6.9px;color:#5a5a5a;transform:scaleX(0.843);">270,00 €</span></div>
<div style="left:635.90px;top:385.20px;width:31.70px;height:9.00px;overflow:hidden"><span class="t" style="right:1.60px;transform-origin:100% 50%;top:1.81px;font-size:6.9px;line-height:6.9px;color:#5a5a5a;transform:scaleX(0.847);">27,00 €</span></div>
<div style="left:730.60px;top:385.20px;width:36.00px;height:9.00px;overflow:hidden"><span class="t" style="right:1.60px;transform-origin:100% 50%;top:1.81px;font-size:6.9px;line-height:6.9px;color:#5a5a5a;transform:scaleX(0.843);">243,00 €</span></div>
<div style="left:766.60px;top:385.20px;width:41.90px;height:9.00px;overflow:hidden"><span class="t" style="left:2.40px;transform-origin:0 50%;top:1.81px;font-size:6.9px;line-height:6.9px;color:#5a5a5a;transform:scaleX(0.923);">23/4/2020</span></div>
<div style="left:808.50px;top:385.20px;width:38.00px;height:9.00px;overflow:hidden"><span class="t" style="left:2.40px;transform-origin:0 50%;top:1.81px;font-size:6.9px;line-height:6.9px;color:#5a5a5a;transform:scaleX(0.923);">20/5/2020</span></div>
<div style="left:846.50px;top:385.20px;width:36.30px;height:9.00px;overflow:hidden"><span class="t" style="left:2.40px;transform-origin:0 50%;top:1.81px;font-size:6.9px;line-height:6.9px;color:#5a5a5a;transform:scaleX(0.820);">00028</span></div>
<div style="left:82.90px;top:403.80px;width:938.50px;height:1.00px;background:#e3e3e3"></div>
<div style="left:143.60px;top:394.80px;width:1.00px;height:9.60px;background:#e3e3e3"></div>
<div style="left:217.80px;top:394.80px;width:1.00px;height:9.60px;background:#e3e3e3"></div>
<div style="left:448.10px;top:394.80px;width:1.00px;height:9.60px;background:#e3e3e3"></div>
<div style="left:490.30px;top:394.80px;width:1.00px;height:9.60px;background:#e3e3e3"></div>
<div style="left:533.40px;top:394.80px;width:1.00px;height:9.60px;background:#e3e3e3"></div>
<div style="left:564.40px;top:394.80px;width:1.00px;height:9.60px;background:#e3e3e3"></div>
<div style="left:596.90px;top:394.80px;width:1.00px;height:9.60px;background:#e3e3e3"></div>
<div style="left:635.90px;top:394.80px;width:1.00px;height:9.60px;background:#e3e3e3"></div>
<div style="left:667.60px;top:394.80px;width:1.00px;height:9.60px;background:#e3e3e3"></div>
<div style="left:730.60px;top:394.80px;width:1.00px;height:9.60px;background:#e3e3e3"></div>
<div style="left:766.60px;top:394.80px;width:1.00px;height:9.60px;background:#e3e3e3"></div>
<div style="left:808.50px;top:394.80px;width:1.00px;height:9.60px;background:#e3e3e3"></div>
<div style="left:846.50px;top:394.80px;width:1.00px;height:9.60px;background:#e3e3e3"></div>
<div style="left:882.80px;top:394.80px;width:1.00px;height:9.60px;background:#e3e3e3"></div>
<div style="left:89.40px;top:394.80px;width:54.20px;height:9.00px;overflow:hidden"><span class="t" style="left:1.60px;transform-origin:0 50%;top:1.81px;font-size:6.9px;line-height:6.9px;color:#5a5a5a;transform:scaleX(0.790);">ΝΟΣΗΛΙΑ</span></div>
<div style="left:143.60px;top:394.80px;width:74.20px;height:9.00px;overflow:hidden"><span class="t" style="left:2.40px;transform-origin:0 50%;top:1.81px;font-size:6.9px;line-height:6.9px;color:#5a5a5a;transform:scaleX(0.820);">00028</span></div>
<div style="left:217.80px;top:394.80px;width:230.30px;height:9.00px;overflow:hidden"><span class="t" style="left:2.40px;transform-origin:0 50%;top:1.81px;font-size:6.9px;line-height:6.9px;color:#5a5a5a;transform:scaleX(0.790);">ΠΕΝΤΑΚΛΙΝΟ</span></div>
<div style="left:533.40px;top:394.80px;width:31.00px;height:9.00px;overflow:hidden"><span class="t" style="right:1.60px;transform-origin:100% 50%;top:1.81px;font-size:6.9px;line-height:6.9px;color:#5a5a5a;transform:scaleX(0.820);">27</span></div>
<div style="left:564.40px;top:394.80px;width:32.50px;height:9.00px;overflow:hidden"><span class="t" style="right:1.60px;transform-origin:100% 50%;top:1.81px;font-size:6.9px;line-height:6.9px;color:#5a5a5a;transform:scaleX(0.847);">34,63 €</span></div>
<div style="left:596.90px;top:394.80px;width:39.00px;height:9.00px;overflow:hidden"><span class="t" style="right:1.60px;transform-origin:100% 50%;top:1.81px;font-size:6.9px;line-height:6.9px;color:#5a5a5a;transform:scaleX(0.843);">935,01 €</span></div>
<div style="left:635.90px;top:394.80px;width:31.70px;height:9.00px;overflow:hidden"><span class="t" style="right:1.60px;transform-origin:100% 50%;top:1.81px;font-size:6.9px;line-height:6.9px;color:#5a5a5a;transform:scaleX(0.847);">93,50 €</span></div>
<div style="left:730.60px;top:394.80px;width:36.00px;height:9.00px;overflow:hidden"><span class="t" style="right:1.60px;transform-origin:100% 50%;top:1.81px;font-size:6.9px;line-height:6.9px;color:#5a5a5a;transform:scaleX(0.843);">841,51 €</span></div>
<div style="left:766.60px;top:394.80px;width:41.90px;height:9.00px;overflow:hidden"><span class="t" style="left:2.40px;transform-origin:0 50%;top:1.81px;font-size:6.9px;line-height:6.9px;color:#5a5a5a;transform:scaleX(0.923);">23/4/2020</span></div>
<div style="left:808.50px;top:394.80px;width:38.00px;height:9.00px;overflow:hidden"><span class="t" style="left:2.40px;transform-origin:0 50%;top:1.81px;font-size:6.9px;line-height:6.9px;color:#5a5a5a;transform:scaleX(0.923);">20/5/2020</span></div>
<div style="left:82.90px;top:413.40px;width:938.50px;height:1.00px;background:#e3e3e3"></div>
<div style="left:143.60px;top:404.40px;width:1.00px;height:9.60px;background:#e3e3e3"></div>
<div style="left:217.80px;top:404.40px;width:1.00px;height:9.60px;background:#e3e3e3"></div>
<div style="left:448.10px;top:404.40px;width:1.00px;height:9.60px;background:#e3e3e3"></div>
<div style="left:490.30px;top:404.40px;width:1.00px;height:9.60px;background:#e3e3e3"></div>
<div style="left:533.40px;top:404.40px;width:1.00px;height:9.60px;background:#e3e3e3"></div>
<div style="left:564.40px;top:404.40px;width:1.00px;height:9.60px;background:#e3e3e3"></div>
<div style="left:596.90px;top:404.40px;width:1.00px;height:9.60px;background:#e3e3e3"></div>
<div style="left:635.90px;top:404.40px;width:1.00px;height:9.60px;background:#e3e3e3"></div>
<div style="left:667.60px;top:404.40px;width:1.00px;height:9.60px;background:#e3e3e3"></div>
<div style="left:730.60px;top:404.40px;width:1.00px;height:9.60px;background:#e3e3e3"></div>
<div style="left:766.60px;top:404.40px;width:1.00px;height:9.60px;background:#e3e3e3"></div>
<div style="left:808.50px;top:404.40px;width:1.00px;height:9.60px;background:#e3e3e3"></div>
<div style="left:846.50px;top:404.40px;width:1.00px;height:9.60px;background:#e3e3e3"></div>
<div style="left:882.80px;top:404.40px;width:1.00px;height:9.60px;background:#e3e3e3"></div>
<div style="left:89.40px;top:404.40px;width:54.20px;height:9.00px;overflow:hidden"><span class="t" style="left:1.60px;transform-origin:0 50%;top:1.81px;font-size:6.9px;line-height:6.9px;color:#5a5a5a;transform:scaleX(0.790);">ΦΑΡΜΑΚΑ</span></div>
<div style="left:143.60px;top:404.40px;width:74.20px;height:9.00px;overflow:hidden"><span class="t" style="left:2.40px;transform-origin:0 50%;top:1.81px;font-size:6.9px;line-height:6.9px;color:#5a5a5a;transform:scaleX(0.820);">2802231003069</span></div>
<div style="left:217.80px;top:404.40px;width:230.30px;height:9.00px;overflow:hidden"><span class="t" style="left:2.40px;transform-origin:0 50%;top:1.81px;font-size:6.9px;line-height:6.9px;color:#5a5a5a;transform:scaleX(0.818);">VISIPAQUE INJ.SOL 652MG (320mg I)/ML BTx1PLASTIC BOTTLEx200ML</span></div>
<div style="left:448.10px;top:404.40px;width:42.20px;height:9.00px;overflow:hidden"><span class="t" style="left:2.40px;transform-origin:0 50%;top:1.81px;font-size:6.9px;line-height:6.9px;color:#5a5a5a;transform:scaleX(0.923);">23/4/2020</span></div>
<div style="left:490.30px;top:404.40px;width:43.10px;height:9.00px;overflow:hidden"><span class="t" style="left:2.40px;transform-origin:0 50%;top:1.81px;font-size:6.9px;line-height:6.9px;color:#5a5a5a;transform:scaleX(0.923);">23/4/2020</span></div>
<div style="left:533.40px;top:404.40px;width:31.00px;height:9.00px;overflow:hidden"><span class="t" style="right:1.60px;transform-origin:100% 50%;top:1.81px;font-size:6.9px;line-height:6.9px;color:#5a5a5a;transform:scaleX(0.820);">1</span></div>
<div style="left:564.40px;top:404.40px;width:32.50px;height:9.00px;overflow:hidden"><span class="t" style="right:1.60px;transform-origin:100% 50%;top:1.81px;font-size:6.9px;line-height:6.9px;color:#5a5a5a;transform:scaleX(0.847);">47,09 €</span></div>
<div style="left:596.90px;top:404.40px;width:39.00px;height:9.00px;overflow:hidden"><span class="t" style="right:1.60px;transform-origin:100% 50%;top:1.81px;font-size:6.9px;line-height:6.9px;color:#5a5a5a;transform:scaleX(0.847);">47,09 €</span></div>
<div style="left:635.90px;top:404.40px;width:31.70px;height:9.00px;overflow:hidden"><span class="t" style="right:1.60px;transform-origin:100% 50%;top:1.81px;font-size:6.9px;line-height:6.9px;color:#5a5a5a;transform:scaleX(0.852);">4,71 €</span></div>
<div style="left:667.60px;top:404.40px;width:63.00px;height:9.00px;overflow:hidden"><span class="t" style="right:1.60px;transform-origin:100% 50%;top:1.81px;font-size:6.9px;line-height:6.9px;color:#5a5a5a;transform:scaleX(0.820);">0</span></div>
<div style="left:730.60px;top:404.40px;width:36.00px;height:9.00px;overflow:hidden"><span class="t" style="right:1.60px;transform-origin:100% 50%;top:1.81px;font-size:6.9px;line-height:6.9px;color:#5a5a5a;transform:scaleX(0.847);">42,38 €</span></div>
<div style="left:766.60px;top:404.40px;width:41.90px;height:9.00px;overflow:hidden"><span class="t" style="left:2.40px;transform-origin:0 50%;top:1.81px;font-size:6.9px;line-height:6.9px;color:#5a5a5a;transform:scaleX(0.923);">23/4/2020</span></div>
<div style="left:808.50px;top:404.40px;width:38.00px;height:9.00px;overflow:hidden"><span class="t" style="left:2.40px;transform-origin:0 50%;top:1.81px;font-size:6.9px;line-height:6.9px;color:#5a5a5a;transform:scaleX(0.923);">23/4/2020</span></div>
<div style="left:846.50px;top:404.40px;width:36.30px;height:9.00px;overflow:hidden"><span class="t" style="left:2.40px;transform-origin:0 50%;top:1.81px;font-size:6.9px;line-height:6.9px;color:#5a5a5a;transform:scaleX(0.820);">00028</span></div>
<div style="left:82.90px;top:423.00px;width:938.50px;height:1.00px;background:#e3e3e3"></div>
<div style="left:143.60px;top:414.00px;width:1.00px;height:9.60px;background:#e3e3e3"></div>
<div style="left:217.80px;top:414.00px;width:1.00px;height:9.60px;background:#e3e3e3"></div>
<div style="left:448.10px;top:414.00px;width:1.00px;height:9.60px;background:#e3e3e3"></div>
<div style="left:490.30px;top:414.00px;width:1.00px;height:9.60px;background:#e3e3e3"></div>
<div style="left:533.40px;top:414.00px;width:1.00px;height:9.60px;background:#e3e3e3"></div>
<div style="left:564.40px;top:414.00px;width:1.00px;height:9.60px;background:#e3e3e3"></div>
<div style="left:596.90px;top:414.00px;width:1.00px;height:9.60px;background:#e3e3e3"></div>
<div style="left:635.90px;top:414.00px;width:1.00px;height:9.60px;background:#e3e3e3"></div>
<div style="left:667.60px;top:414.00px;width:1.00px;height:9.60px;background:#e3e3e3"></div>
<div style="left:730.60px;top:414.00px;width:1.00px;height:9.60px;background:#e3e3e3"></div>
<div style="left:766.60px;top:414.00px;width:1.00px;height:9.60px;background:#e3e3e3"></div>
<div style="left:808.50px;top:414.00px;width:1.00px;height:9.60px;background:#e3e3e3"></div>
<div style="left:846.50px;top:414.00px;width:1.00px;height:9.60px;background:#e3e3e3"></div>
<div style="left:882.80px;top:414.00px;width:1.00px;height:9.60px;background:#e3e3e3"></div>
<div style="left:89.40px;top:414.00px;width:54.20px;height:9.00px;overflow:hidden"><span class="t" style="left:1.60px;transform-origin:0 50%;top:1.81px;font-size:6.9px;line-height:6.9px;color:#5a5a5a;transform:scaleX(0.793);">ΙΑΤΡΙΚΕΣ ΠΡΑΞΕΙΣ</span></div>
<div style="left:143.60px;top:414.00px;width:74.20px;height:9.00px;overflow:hidden"><span class="t" style="left:2.40px;transform-origin:0 50%;top:1.81px;font-size:6.9px;line-height:6.9px;color:#5a5a5a;transform:scaleX(0.820);">110000107</span></div>
<div style="left:217.80px;top:414.00px;width:230.30px;height:9.00px;overflow:hidden"><span class="t" style="left:2.40px;transform-origin:0 50%;top:1.81px;font-size:6.9px;line-height:6.9px;color:#5a5a5a;transform:scaleX(0.898);">Γενική εξέταση αίματος (αιμοσφαιρίνη - αριθμός ερυθρών αιμοσφαιρίων, αριθμός λευ</span></div>
<div style="left:448.10px;top:414.00px;width:42.20px;height:9.00px;overflow:hidden"><span class="t" style="left:2.40px;transform-origin:0 50%;top:1.81px;font-size:6.9px;line-height:6.9px;color:#5a5a5a;transform:scaleX(0.923);">23/4/2020</span></div>
<div style="left:490.30px;top:414.00px;width:43.10px;height:9.00px;overflow:hidden"><span class="t" style="left:2.40px;transform-origin:0 50%;top:1.81px;font-size:6.9px;line-height:6.9px;color:#5a5a5a;transform:scaleX(0.923);">23/4/2020</span></div>
<div style="left:533.40px;top:414.00px;width:31.00px;height:9.00px;overflow:hidden"><span class="t" style="right:1.60px;transform-origin:100% 50%;top:1.81px;font-size:6.9px;line-height:6.9px;color:#5a5a5a;transform:scaleX(0.820);">1</span></div>
<div style="left:564.40px;top:414.00px;width:32.50px;height:9.00px;overflow:hidden"><span class="t" style="right:1.60px;transform-origin:100% 50%;top:1.81px;font-size:6.9px;line-height:6.9px;color:#5a5a5a;transform:scaleX(0.852);">2,30 €</span></div>
<div style="left:596.90px;top:414.00px;width:39.00px;height:9.00px;overflow:hidden"><span class="t" style="right:1.60px;transform-origin:100% 50%;top:1.81px;font-size:6.9px;line-height:6.9px;color:#5a5a5a;transform:scaleX(0.852);">2,30 €</span></div>
<div style="left:635.90px;top:414.00px;width:31.70px;height:9.00px;overflow:hidden"><span class="t" style="right:1.60px;transform-origin:100% 50%;top:1.81px;font-size:6.9px;line-height:6.9px;color:#5a5a5a;transform:scaleX(0.852);">0,23 €</span></div>
<div style="left:730.60px;top:414.00px;width:36.00px;height:9.00px;overflow:hidden"><span class="t" style="right:1.60px;transform-origin:100% 50%;top:1.81px;font-size:6.9px;line-height:6.9px;color:#5a5a5a;transform:scaleX(0.852);">2,07 €</span></div>
<div style="left:766.60px;top:414.00px;width:41.90px;height:9.00px;overflow:hidden"><span class="t" style="left:2.40px;transform-origin:0 50%;top:1.81px;font-size:6.9px;line-height:6.9px;color:#5a5a5a;transform:scaleX(0.923);">23/4/2020</span></div>
<div style="left:808.50px;top:414.00px;width:38.00px;height:9.00px;overflow:hidden"><span class="t" style="left:2.40px;transform-origin:0 50%;top:1.81px;font-size:6.9px;line-height:6.9px;color:#5a5a5a;transform:scaleX(0.923);">23/4/2020</span></div>
<div style="left:82.90px;top:432.60px;width:938.50px;height:1.00px;background:#e3e3e3"></div>
<div style="left:143.60px;top:423.60px;width:1.00px;height:9.60px;background:#e3e3e3"></div>
<div style="left:217.80px;top:423.60px;width:1.00px;height:9.60px;background:#e3e3e3"></div>
<div style="left:448.10px;top:423.60px;width:1.00px;height:9.60px;background:#e3e3e3"></div>
<div style="left:490.30px;top:423.60px;width:1.00px;height:9.60px;background:#e3e3e3"></div>
<div style="left:533.40px;top:423.60px;width:1.00px;height:9.60px;background:#e3e3e3"></div>
<div style="left:564.40px;top:423.60px;width:1.00px;height:9.60px;background:#e3e3e3"></div>
<div style="left:596.90px;top:423.60px;width:1.00px;height:9.60px;background:#e3e3e3"></div>
<div style="left:635.90px;top:423.60px;width:1.00px;height:9.60px;background:#e3e3e3"></div>
<div style="left:667.60px;top:423.60px;width:1.00px;height:9.60px;background:#e3e3e3"></div>
<div style="left:730.60px;top:423.60px;width:1.00px;height:9.60px;background:#e3e3e3"></div>
<div style="left:766.60px;top:423.60px;width:1.00px;height:9.60px;background:#e3e3e3"></div>
<div style="left:808.50px;top:423.60px;width:1.00px;height:9.60px;background:#e3e3e3"></div>
<div style="left:846.50px;top:423.60px;width:1.00px;height:9.60px;background:#e3e3e3"></div>
<div style="left:882.80px;top:423.60px;width:1.00px;height:9.60px;background:#e3e3e3"></div>
<div style="left:89.40px;top:423.60px;width:54.20px;height:9.00px;overflow:hidden"><span class="t" style="left:1.60px;transform-origin:0 50%;top:1.81px;font-size:6.9px;line-height:6.9px;color:#5a5a5a;transform:scaleX(0.793);">ΙΑΤΡΙΚΕΣ ΠΡΑΞΕΙΣ</span></div>
<div style="left:143.60px;top:423.60px;width:74.20px;height:9.00px;overflow:hidden"><span class="t" style="left:2.40px;transform-origin:0 50%;top:1.81px;font-size:6.9px;line-height:6.9px;color:#5a5a5a;transform:scaleX(0.820);">120000087</span></div>
<div style="left:217.80px;top:423.60px;width:230.30px;height:9.00px;overflow:hidden"><span class="t" style="left:2.40px;transform-origin:0 50%;top:1.81px;font-size:6.9px;line-height:6.9px;color:#5a5a5a;transform:scaleX(0.878);">Αυστραλιανό αντιγόνο (HBsAg)</span></div>
<div style="left:448.10px;top:423.60px;width:42.20px;height:9.00px;overflow:hidden"><span class="t" style="left:2.40px;transform-origin:0 50%;top:1.81px;font-size:6.9px;line-height:6.9px;color:#5a5a5a;transform:scaleX(0.923);">23/4/2020</span></div>
<div style="left:490.30px;top:423.60px;width:43.10px;height:9.00px;overflow:hidden"><span class="t" style="left:2.40px;transform-origin:0 50%;top:1.81px;font-size:6.9px;line-height:6.9px;color:#5a5a5a;transform:scaleX(0.923);">23/4/2020</span></div>
<div style="left:533.40px;top:423.60px;width:31.00px;height:9.00px;overflow:hidden"><span class="t" style="right:1.60px;transform-origin:100% 50%;top:1.81px;font-size:6.9px;line-height:6.9px;color:#5a5a5a;transform:scaleX(0.820);">1</span></div>
<div style="left:564.40px;top:423.60px;width:32.50px;height:9.00px;overflow:hidden"><span class="t" style="right:1.60px;transform-origin:100% 50%;top:1.81px;font-size:6.9px;line-height:6.9px;color:#5a5a5a;transform:scaleX(0.852);">7,61 €</span></div>
<div style="left:596.90px;top:423.60px;width:39.00px;height:9.00px;overflow:hidden"><span class="t" style="right:1.60px;transform-origin:100% 50%;top:1.81px;font-size:6.9px;line-height:6.9px;color:#5a5a5a;transform:scaleX(0.852);">7,61 €</span></div>
<div style="left:635.90px;top:423.60px;width:31.70px;height:9.00px;overflow:hidden"><span class="t" style="right:1.60px;transform-origin:100% 50%;top:1.81px;font-size:6.9px;line-height:6.9px;color:#5a5a5a;transform:scaleX(0.852);">0,76 €</span></div>
<div style="left:730.60px;top:423.60px;width:36.00px;height:9.00px;overflow:hidden"><span class="t" style="right:1.60px;transform-origin:100% 50%;top:1.81px;font-size:6.9px;line-height:6.9px;color:#5a5a5a;transform:scaleX(0.852);">6,85 €</span></div>
<div style="left:766.60px;top:423.60px;width:41.90px;height:9.00px;overflow:hidden"><span class="t" style="left:2.40px;transform-origin:0 50%;top:1.81px;font-size:6.9px;line-height:6.9px;color:#5a5a5a;transform:scaleX(0.923);">23/4/2020</span></div>
<div style="left:808.50px;top:423.60px;width:38.00px;height:9.00px;overflow:hidden"><span class="t" style="left:2.40px;transform-origin:0 50%;top:1.81px;font-size:6.9px;line-height:6.9px;color:#5a5a5a;transform:scaleX(0.923);">23/4/2020</span></div>
<div style="left:82.90px;top:442.20px;width:938.50px;height:1.00px;background:#e3e3e3"></div>
<div style="left:143.60px;top:433.20px;width:1.00px;height:9.60px;background:#e3e3e3"></div>
<div style="left:217.80px;top:433.20px;width:1.00px;height:9.60px;background:#e3e3e3"></div>
<div style="left:448.10px;top:433.20px;width:1.00px;height:9.60px;background:#e3e3e3"></div>
<div style="left:490.30px;top:433.20px;width:1.00px;height:9.60px;background:#e3e3e3"></div>
<div style="left:533.40px;top:433.20px;width:1.00px;height:9.60px;background:#e3e3e3"></div>
<div style="left:564.40px;top:433.20px;width:1.00px;height:9.60px;background:#e3e3e3"></div>
<div style="left:596.90px;top:433.20px;width:1.00px;height:9.60px;background:#e3e3e3"></div>
<div style="left:635.90px;top:433.20px;width:1.00px;height:9.60px;background:#e3e3e3"></div>
<div style="left:667.60px;top:433.20px;width:1.00px;height:9.60px;background:#e3e3e3"></div>
<div style="left:730.60px;top:433.20px;width:1.00px;height:9.60px;background:#e3e3e3"></div>
<div style="left:766.60px;top:433.20px;width:1.00px;height:9.60px;background:#e3e3e3"></div>
<div style="left:808.50px;top:433.20px;width:1.00px;height:9.60px;background:#e3e3e3"></div>
<div style="left:846.50px;top:433.20px;width:1.00px;height:9.60px;background:#e3e3e3"></div>
<div style="left:882.80px;top:433.20px;width:1.00px;height:9.60px;background:#e3e3e3"></div>
<div style="left:89.40px;top:433.20px;width:54.20px;height:9.00px;overflow:hidden"><span class="t" style="left:1.60px;transform-origin:0 50%;top:1.81px;font-size:6.9px;line-height:6.9px;color:#5a5a5a;transform:scaleX(0.793);">ΙΑΤΡΙΚΕΣ ΠΡΑΞΕΙΣ</span></div>
<div style="left:143.60px;top:433.20px;width:74.20px;height:9.00px;overflow:hidden"><span class="t" style="left:2.40px;transform-origin:0 50%;top:1.81px;font-size:6.9px;line-height:6.9px;color:#5a5a5a;transform:scaleX(0.820);">130000048</span></div>
<div style="left:217.80px;top:433.20px;width:230.30px;height:9.00px;overflow:hidden"><span class="t" style="left:2.40px;transform-origin:0 50%;top:1.81px;font-size:6.9px;line-height:6.9px;color:#5a5a5a;transform:scaleX(0.900);">γgt</span></div>
<div style="left:448.10px;top:433.20px;width:42.20px;height:9.00px;overflow:hidden"><span class="t" style="left:2.40px;transform-origin:0 50%;top:1.81px;font-size:6.9px;line-height:6.9px;color:#5a5a5a;transform:scaleX(0.923);">23/4/2020</span></div>
<div style="left:490.30px;top:433.20px;width:43.10px;height:9.00px;overflow:hidden"><span class="t" style="left:2.40px;transform-origin:0 50%;top:1.81px;font-size:6.9px;line-height:6.9px;color:#5a5a5a;transform:scaleX(0.923);">23/4/2020</span></div>
<div style="left:533.40px;top:433.20px;width:31.00px;height:9.00px;overflow:hidden"><span class="t" style="right:1.60px;transform-origin:100% 50%;top:1.81px;font-size:6.9px;line-height:6.9px;color:#5a5a5a;transform:scaleX(0.820);">1</span></div>
<div style="left:564.40px;top:433.20px;width:32.50px;height:9.00px;overflow:hidden"><span class="t" style="right:1.60px;transform-origin:100% 50%;top:1.81px;font-size:6.9px;line-height:6.9px;color:#5a5a5a;transform:scaleX(0.852);">4,02 €</span></div>
<div style="left:596.90px;top:433.20px;width:39.00px;height:9.00px;overflow:hidden"><span class="t" style="right:1.60px;transform-origin:100% 50%;top:1.81px;font-size:6.9px;line-height:6.9px;color:#5a5a5a;transform:scaleX(0.852);">4,02 €</span></div>
<div style="left:635.90px;top:433.20px;width:31.70px;height:9.00px;overflow:hidden"><span class="t" style="right:1.60px;transform-origin:100% 50%;top:1.81px;font-size:6.9px;line-height:6.9px;color:#5a5a5a;transform:scaleX(0.852);">0,40 €</span></div>
<div style="left:730.60px;top:433.20px;width:36.00px;height:9.00px;overflow:hidden"><span class="t" style="right:1.60px;transform-origin:100% 50%;top:1.81px;font-size:6.9px;line-height:6.9px;color:#5a5a5a;transform:scaleX(0.852);">3,62 €</span></div>
<div style="left:766.60px;top:433.20px;width:41.90px;height:9.00px;overflow:hidden"><span class="t" style="left:2.40px;transform-origin:0 50%;top:1.81px;font-size:6.9px;line-height:6.9px;color:#5a5a5a;transform:scaleX(0.923);">23/4/2020</span></div>
<div style="left:808.50px;top:433.20px;width:38.00px;height:9.00px;overflow:hidden"><span class="t" style="left:2.40px;transform-origin:0 50%;top:1.81px;font-size:6.9px;line-height:6.9px;color:#5a5a5a;transform:scaleX(0.923);">23/4/2020</span></div>
<div style="left:82.90px;top:451.80px;width:938.50px;height:1.00px;background:#e3e3e3"></div>
<div style="left:143.60px;top:442.80px;width:1.00px;height:9.60px;background:#e3e3e3"></div>
<div style="left:217.80px;top:442.80px;width:1.00px;height:9.60px;background:#e3e3e3"></div>
<div style="left:448.10px;top:442.80px;width:1.00px;height:9.60px;background:#e3e3e3"></div>
<div style="left:490.30px;top:442.80px;width:1.00px;height:9.60px;background:#e3e3e3"></div>
<div style="left:533.40px;top:442.80px;width:1.00px;height:9.60px;background:#e3e3e3"></div>
<div style="left:564.40px;top:442.80px;width:1.00px;height:9.60px;background:#e3e3e3"></div>
<div style="left:596.90px;top:442.80px;width:1.00px;height:9.60px;background:#e3e3e3"></div>
<div style="left:635.90px;top:442.80px;width:1.00px;height:9.60px;background:#e3e3e3"></div>
<div style="left:667.60px;top:442.80px;width:1.00px;height:9.60px;background:#e3e3e3"></div>
<div style="left:730.60px;top:442.80px;width:1.00px;height:9.60px;background:#e3e3e3"></div>
<div style="left:766.60px;top:442.80px;width:1.00px;height:9.60px;background:#e3e3e3"></div>
<div style="left:808.50px;top:442.80px;width:1.00px;height:9.60px;background:#e3e3e3"></div>
<div style="left:846.50px;top:442.80px;width:1.00px;height:9.60px;background:#e3e3e3"></div>
<div style="left:882.80px;top:442.80px;width:1.00px;height:9.60px;background:#e3e3e3"></div>
<div style="left:89.40px;top:442.80px;width:54.20px;height:9.00px;overflow:hidden"><span class="t" style="left:1.60px;transform-origin:0 50%;top:1.81px;font-size:6.9px;line-height:6.9px;color:#5a5a5a;transform:scaleX(0.793);">ΙΑΤΡΙΚΕΣ ΠΡΑΞΕΙΣ</span></div>
<div style="left:143.60px;top:442.80px;width:74.20px;height:9.00px;overflow:hidden"><span class="t" style="left:2.40px;transform-origin:0 50%;top:1.81px;font-size:6.9px;line-height:6.9px;color:#5a5a5a;transform:scaleX(0.820);">130000038</span></div>
<div style="left:217.80px;top:442.80px;width:230.30px;height:9.00px;overflow:hidden"><span class="t" style="left:2.40px;transform-origin:0 50%;top:1.81px;font-size:6.9px;line-height:6.9px;color:#5a5a5a;transform:scaleX(0.883);">Αλκαλική φωσφατάση αίματος (ALP)</span></div>
<div style="left:448.10px;top:442.80px;width:42.20px;height:9.00px;overflow:hidden"><span class="t" style="left:2.40px;transform-origin:0 50%;top:1.81px;font-size:6.9px;line-height:6.9px;color:#5a5a5a;transform:scaleX(0.923);">23/4/2020</span></div>
<div style="left:490.30px;top:442.80px;width:43.10px;height:9.00px;overflow:hidden"><span class="t" style="left:2.40px;transform-origin:0 50%;top:1.81px;font-size:6.9px;line-height:6.9px;color:#5a5a5a;transform:scaleX(0.923);">23/4/2020</span></div>
<div style="left:533.40px;top:442.80px;width:31.00px;height:9.00px;overflow:hidden"><span class="t" style="right:1.60px;transform-origin:100% 50%;top:1.81px;font-size:6.9px;line-height:6.9px;color:#5a5a5a;transform:scaleX(0.820);">1</span></div>
<div style="left:564.40px;top:442.80px;width:32.50px;height:9.00px;overflow:hidden"><span class="t" style="right:1.60px;transform-origin:100% 50%;top:1.81px;font-size:6.9px;line-height:6.9px;color:#5a5a5a;transform:scaleX(0.852);">4,02 €</span></div>
<div style="left:596.90px;top:442.80px;width:39.00px;height:9.00px;overflow:hidden"><span class="t" style="right:1.60px;transform-origin:100% 50%;top:1.81px;font-size:6.9px;line-height:6.9px;color:#5a5a5a;transform:scaleX(0.852);">4,02 €</span></div>
<div style="left:635.90px;top:442.80px;width:31.70px;height:9.00px;overflow:hidden"><span class="t" style="right:1.60px;transform-origin:100% 50%;top:1.81px;font-size:6.9px;line-height:6.9px;color:#5a5a5a;transform:scaleX(0.852);">0,40 €</span></div>
<div style="left:730.60px;top:442.80px;width:36.00px;height:9.00px;overflow:hidden"><span class="t" style="right:1.60px;transform-origin:100% 50%;top:1.81px;font-size:6.9px;line-height:6.9px;color:#5a5a5a;transform:scaleX(0.852);">3,62 €</span></div>
<div style="left:766.60px;top:442.80px;width:41.90px;height:9.00px;overflow:hidden"><span class="t" style="left:2.40px;transform-origin:0 50%;top:1.81px;font-size:6.9px;line-height:6.9px;color:#5a5a5a;transform:scaleX(0.923);">23/4/2020</span></div>
<div style="left:808.50px;top:442.80px;width:38.00px;height:9.00px;overflow:hidden"><span class="t" style="left:2.40px;transform-origin:0 50%;top:1.81px;font-size:6.9px;line-height:6.9px;color:#5a5a5a;transform:scaleX(0.923);">23/4/2020</span></div>
<div style="left:82.90px;top:461.40px;width:938.50px;height:1.00px;background:#e3e3e3"></div>
<div style="left:143.60px;top:452.40px;width:1.00px;height:9.60px;background:#e3e3e3"></div>
<div style="left:217.80px;top:452.40px;width:1.00px;height:9.60px;background:#e3e3e3"></div>
<div style="left:448.10px;top:452.40px;width:1.00px;height:9.60px;background:#e3e3e3"></div>
<div style="left:490.30px;top:452.40px;width:1.00px;height:9.60px;background:#e3e3e3"></div>
<div style="left:533.40px;top:452.40px;width:1.00px;height:9.60px;background:#e3e3e3"></div>
<div style="left:564.40px;top:452.40px;width:1.00px;height:9.60px;background:#e3e3e3"></div>
<div style="left:596.90px;top:452.40px;width:1.00px;height:9.60px;background:#e3e3e3"></div>
<div style="left:635.90px;top:452.40px;width:1.00px;height:9.60px;background:#e3e3e3"></div>
<div style="left:667.60px;top:452.40px;width:1.00px;height:9.60px;background:#e3e3e3"></div>
<div style="left:730.60px;top:452.40px;width:1.00px;height:9.60px;background:#e3e3e3"></div>
<div style="left:766.60px;top:452.40px;width:1.00px;height:9.60px;background:#e3e3e3"></div>
<div style="left:808.50px;top:452.40px;width:1.00px;height:9.60px;background:#e3e3e3"></div>
<div style="left:846.50px;top:452.40px;width:1.00px;height:9.60px;background:#e3e3e3"></div>
<div style="left:882.80px;top:452.40px;width:1.00px;height:9.60px;background:#e3e3e3"></div>
<div style="left:89.40px;top:452.40px;width:54.20px;height:9.00px;overflow:hidden"><span class="t" style="left:1.60px;transform-origin:0 50%;top:1.81px;font-size:6.9px;line-height:6.9px;color:#5a5a5a;transform:scaleX(0.793);">ΙΑΤΡΙΚΕΣ ΠΡΑΞΕΙΣ</span></div>
<div style="left:143.60px;top:452.40px;width:74.20px;height:9.00px;overflow:hidden"><span class="t" style="left:2.40px;transform-origin:0 50%;top:1.81px;font-size:6.9px;line-height:6.9px;color:#5a5a5a;transform:scaleX(0.820);">130000085</span></div>
<div style="left:217.80px;top:452.40px;width:230.30px;height:9.00px;overflow:hidden"><span class="t" style="left:2.40px;transform-origin:0 50%;top:1.81px;font-size:6.9px;line-height:6.9px;color:#5a5a5a;transform:scaleX(0.886);">Προσδιορισμός γαλακτικής δεϋδρογονάσης (LDH)</span></div>
<div style="left:448.10px;top:452.40px;width:42.20px;height:9.00px;overflow:hidden"><span class="t" style="left:2.40px;transform-origin:0 50%;top:1.81px;font-size:6.9px;line-height:6.9px;color:#5a5a5a;transform:scaleX(0.923);">23/4/2020</span></div>
<div style="left:490.30px;top:452.40px;width:43.10px;height:9.00px;overflow:hidden"><span class="t" style="left:2.40px;transform-origin:0 50%;top:1.81px;font-size:6.9px;line-height:6.9px;color:#5a5a5a;transform:scaleX(0.923);">23/4/2020</span></div>
<div style="left:533.40px;top:452.40px;width:31.00px;height:9.00px;overflow:hidden"><span class="t" style="right:1.60px;transform-origin:100% 50%;top:1.81px;font-size:6.9px;line-height:6.9px;color:#5a5a5a;transform:scaleX(0.820);">1</span></div>
<div style="left:564.40px;top:452.40px;width:32.50px;height:9.00px;overflow:hidden"><span class="t" style="right:1.60px;transform-origin:100% 50%;top:1.81px;font-size:6.9px;line-height:6.9px;color:#5a5a5a;transform:scaleX(0.852);">2,74 €</span></div>
<div style="left:596.90px;top:452.40px;width:39.00px;height:9.00px;overflow:hidden"><span class="t" style="right:1.60px;transform-origin:100% 50%;top:1.81px;font-size:6.9px;line-height:6.9px;color:#5a5a5a;transform:scaleX(0.852);">2,74 €</span></div>
<div style="left:635.90px;top:452.40px;width:31.70px;height:9.00px;overflow:hidden"><span class="t" style="right:1.60px;transform-origin:100% 50%;top:1.81px;font-size:6.9px;line-height:6.9px;color:#5a5a5a;transform:scaleX(0.852);">0,27 €</span></div>
<div style="left:730.60px;top:452.40px;width:36.00px;height:9.00px;overflow:hidden"><span class="t" style="right:1.60px;transform-origin:100% 50%;top:1.81px;font-size:6.9px;line-height:6.9px;color:#5a5a5a;transform:scaleX(0.852);">2,47 €</span></div>
<div style="left:766.60px;top:452.40px;width:41.90px;height:9.00px;overflow:hidden"><span class="t" style="left:2.40px;transform-origin:0 50%;top:1.81px;font-size:6.9px;line-height:6.9px;color:#5a5a5a;transform:scaleX(0.923);">23/4/2020</span></div>
<div style="left:808.50px;top:452.40px;width:38.00px;height:9.00px;overflow:hidden"><span class="t" style="left:2.40px;transform-origin:0 50%;top:1.81px;font-size:6.9px;line-height:6.9px;color:#5a5a5a;transform:scaleX(0.923);">23/4/2020</span></div>
<div style="left:82.90px;top:471.00px;width:938.50px;height:1.00px;background:#e3e3e3"></div>
<div style="left:143.60px;top:462.00px;width:1.00px;height:9.60px;background:#e3e3e3"></div>
<div style="left:217.80px;top:462.00px;width:1.00px;height:9.60px;background:#e3e3e3"></div>
<div style="left:448.10px;top:462.00px;width:1.00px;height:9.60px;background:#e3e3e3"></div>
<div style="left:490.30px;top:462.00px;width:1.00px;height:9.60px;background:#e3e3e3"></div>
<div style="left:533.40px;top:462.00px;width:1.00px;height:9.60px;background:#e3e3e3"></div>
<div style="left:564.40px;top:462.00px;width:1.00px;height:9.60px;background:#e3e3e3"></div>
<div style="left:596.90px;top:462.00px;width:1.00px;height:9.60px;background:#e3e3e3"></div>
<div style="left:635.90px;top:462.00px;width:1.00px;height:9.60px;background:#e3e3e3"></div>
<div style="left:667.60px;top:462.00px;width:1.00px;height:9.60px;background:#e3e3e3"></div>
<div style="left:730.60px;top:462.00px;width:1.00px;height:9.60px;background:#e3e3e3"></div>
<div style="left:766.60px;top:462.00px;width:1.00px;height:9.60px;background:#e3e3e3"></div>
<div style="left:808.50px;top:462.00px;width:1.00px;height:9.60px;background:#e3e3e3"></div>
<div style="left:846.50px;top:462.00px;width:1.00px;height:9.60px;background:#e3e3e3"></div>
<div style="left:882.80px;top:462.00px;width:1.00px;height:9.60px;background:#e3e3e3"></div>
<div style="left:89.40px;top:462.00px;width:54.20px;height:9.00px;overflow:hidden"><span class="t" style="left:1.60px;transform-origin:0 50%;top:1.81px;font-size:6.9px;line-height:6.9px;color:#5a5a5a;transform:scaleX(0.793);">ΙΑΤΡΙΚΕΣ ΠΡΑΞΕΙΣ</span></div>
<div style="left:143.60px;top:462.00px;width:74.20px;height:9.00px;overflow:hidden"><span class="t" style="left:2.40px;transform-origin:0 50%;top:1.81px;font-size:6.9px;line-height:6.9px;color:#5a5a5a;transform:scaleX(0.820);">130000088</span></div>
<div style="left:217.80px;top:462.00px;width:230.30px;height:9.00px;overflow:hidden"><span class="t" style="left:2.40px;transform-origin:0 50%;top:1.81px;font-size:6.9px;line-height:6.9px;color:#5a5a5a;transform:scaleX(0.894);">Προσδιορισμός ουρίας αίματος</span></div>
<div style="left:448.10px;top:462.00px;width:42.20px;height:9.00px;overflow:hidden"><span class="t" style="left:2.40px;transform-origin:0 50%;top:1.81px;font-size:6.9px;line-height:6.9px;color:#5a5a5a;transform:scaleX(0.923);">23/4/2020</span></div>
<div style="left:490.30px;top:462.00px;width:43.10px;height:9.00px;overflow:hidden"><span class="t" style="left:2.40px;transform-origin:0 50%;top:1.81px;font-size:6.9px;line-height:6.9px;color:#5a5a5a;transform:scaleX(0.923);">23/4/2020</span></div>
<div style="left:533.40px;top:462.00px;width:31.00px;height:9.00px;overflow:hidden"><span class="t" style="right:1.60px;transform-origin:100% 50%;top:1.81px;font-size:6.9px;line-height:6.9px;color:#5a5a5a;transform:scaleX(0.820);">1</span></div>
<div style="left:564.40px;top:462.00px;width:32.50px;height:9.00px;overflow:hidden"><span class="t" style="right:1.60px;transform-origin:100% 50%;top:1.81px;font-size:6.9px;line-height:6.9px;color:#5a5a5a;transform:scaleX(0.852);">1,81 €</span></div>
<div style="left:596.90px;top:462.00px;width:39.00px;height:9.00px;overflow:hidden"><span class="t" style="right:1.60px;transform-origin:100% 50%;top:1.81px;font-size:6.9px;line-height:6.9px;color:#5a5a5a;transform:scaleX(0.852);">1,81 €</span></div>
<div style="left:635.90px;top:462.00px;width:31.70px;height:9.00px;overflow:hidden"><span class="t" style="right:1.60px;transform-origin:100% 50%;top:1.81px;font-size:6.9px;line-height:6.9px;color:#5a5a5a;transform:scaleX(0.852);">0,18 €</span></div>
<div style="left:730.60px;top:462.00px;width:36.00px;height:9.00px;overflow:hidden"><span class="t" style="right:1.60px;transform-origin:100% 50%;top:1.81px;font-size:6.9px;line-height:6.9px;color:#5a5a5a;transform:scaleX(0.852);">1,63 €</span></div>
<div style="left:766.60px;top:462.00px;width:41.90px;height:9.00px;overflow:hidden"><span class="t" style="left:2.40px;transform-origin:0 50%;top:1.81px;font-size:6.9px;line-height:6.9px;color:#5a5a5a;transform:scaleX(0.923);">23/4/2020</span></div>
<div style="left:808.50px;top:462.00px;width:38.00px;height:9.00px;overflow:hidden"><span class="t" style="left:2.40px;transform-origin:0 50%;top:1.81px;font-size:6.9px;line-height:6.9px;color:#5a5a5a;transform:scaleX(0.923);">23/4/2020</span></div>
<div style="left:82.90px;top:480.60px;width:938.50px;height:1.00px;background:#e3e3e3"></div>
<div style="left:143.60px;top:471.60px;width:1.00px;height:9.60px;background:#e3e3e3"></div>
<div style="left:217.80px;top:471.60px;width:1.00px;height:9.60px;background:#e3e3e3"></div>
<div style="left:448.10px;top:471.60px;width:1.00px;height:9.60px;background:#e3e3e3"></div>
<div style="left:490.30px;top:471.60px;width:1.00px;height:9.60px;background:#e3e3e3"></div>
<div style="left:533.40px;top:471.60px;width:1.00px;height:9.60px;background:#e3e3e3"></div>
<div style="left:564.40px;top:471.60px;width:1.00px;height:9.60px;background:#e3e3e3"></div>
<div style="left:596.90px;top:471.60px;width:1.00px;height:9.60px;background:#e3e3e3"></div>
<div style="left:635.90px;top:471.60px;width:1.00px;height:9.60px;background:#e3e3e3"></div>
<div style="left:667.60px;top:471.60px;width:1.00px;height:9.60px;background:#e3e3e3"></div>
<div style="left:730.60px;top:471.60px;width:1.00px;height:9.60px;background:#e3e3e3"></div>
<div style="left:766.60px;top:471.60px;width:1.00px;height:9.60px;background:#e3e3e3"></div>
<div style="left:808.50px;top:471.60px;width:1.00px;height:9.60px;background:#e3e3e3"></div>
<div style="left:846.50px;top:471.60px;width:1.00px;height:9.60px;background:#e3e3e3"></div>
<div style="left:882.80px;top:471.60px;width:1.00px;height:9.60px;background:#e3e3e3"></div>
<div style="left:89.40px;top:471.60px;width:54.20px;height:9.00px;overflow:hidden"><span class="t" style="left:1.60px;transform-origin:0 50%;top:1.81px;font-size:6.9px;line-height:6.9px;color:#5a5a5a;transform:scaleX(0.793);">ΙΑΤΡΙΚΕΣ ΠΡΑΞΕΙΣ</span></div>
<div style="left:143.60px;top:471.60px;width:74.20px;height:9.00px;overflow:hidden"><span class="t" style="left:2.40px;transform-origin:0 50%;top:1.81px;font-size:6.9px;line-height:6.9px;color:#5a5a5a;transform:scaleX(0.820);">130000090</span></div>
<div style="left:217.80px;top:471.60px;width:230.30px;height:9.00px;overflow:hidden"><span class="t" style="left:2.40px;transform-origin:0 50%;top:1.81px;font-size:6.9px;line-height:6.9px;color:#5a5a5a;transform:scaleX(0.890);">Προσδιορισμός σακχάρου αίματος - γλυκόζης (GL)</span></div>
<div style="left:448.10px;top:471.60px;width:42.20px;height:9.00px;overflow:hidden"><span class="t" style="left:2.40px;transform-origin:0 50%;top:1.81px;font-size:6.9px;line-height:6.9px;color:#5a5a5a;transform:scaleX(0.923);">23/4/2020</span></div>
<div style="left:490.30px;top:471.60px;width:43.10px;height:9.00px;overflow:hidden"><span class="t" style="left:2.40px;transform-origin:0 50%;top:1.81px;font-size:6.9px;line-height:6.9px;color:#5a5a5a;transform:scaleX(0.923);">23/4/2020</span></div>
<div style="left:533.40px;top:471.60px;width:31.00px;height:9.00px;overflow:hidden"><span class="t" style="right:1.60px;transform-origin:100% 50%;top:1.81px;font-size:6.9px;line-height:6.9px;color:#5a5a5a;transform:scaleX(0.820);">1</span></div>
<div style="left:564.40px;top:471.60px;width:32.50px;height:9.00px;overflow:hidden"><span class="t" style="right:1.60px;transform-origin:100% 50%;top:1.81px;font-size:6.9px;line-height:6.9px;color:#5a5a5a;transform:scaleX(0.852);">1,81 €</span></div>
<div style="left:596.90px;top:471.60px;width:39.00px;height:9.00px;overflow:hidden"><span class="t" style="right:1.60px;transform-origin:100% 50%;top:1.81px;font-size:6.9px;line-height:6.9px;color:#5a5a5a;transform:scaleX(0.852);">1,81 €</span></div>
<div style="left:635.90px;top:471.60px;width:31.70px;height:9.00px;overflow:hidden"><span class="t" style="right:1.60px;transform-origin:100% 50%;top:1.81px;font-size:6.9px;line-height:6.9px;color:#5a5a5a;transform:scaleX(0.852);">0,18 €</span></div>
<div style="left:730.60px;top:471.60px;width:36.00px;height:9.00px;overflow:hidden"><span class="t" style="right:1.60px;transform-origin:100% 50%;top:1.81px;font-size:6.9px;line-height:6.9px;color:#5a5a5a;transform:scaleX(0.852);">1,63 €</span></div>
<div style="left:766.60px;top:471.60px;width:41.90px;height:9.00px;overflow:hidden"><span class="t" style="left:2.40px;transform-origin:0 50%;top:1.81px;font-size:6.9px;line-height:6.9px;color:#5a5a5a;transform:scaleX(0.923);">23/4/2020</span></div>
<div style="left:808.50px;top:471.60px;width:38.00px;height:9.00px;overflow:hidden"><span class="t" style="left:2.40px;transform-origin:0 50%;top:1.81px;font-size:6.9px;line-height:6.9px;color:#5a5a5a;transform:scaleX(0.923);">23/4/2020</span></div>
<div style="left:82.90px;top:490.20px;width:938.50px;height:1.00px;background:#e3e3e3"></div>
<div style="left:143.60px;top:481.20px;width:1.00px;height:9.60px;background:#e3e3e3"></div>
<div style="left:217.80px;top:481.20px;width:1.00px;height:9.60px;background:#e3e3e3"></div>
<div style="left:448.10px;top:481.20px;width:1.00px;height:9.60px;background:#e3e3e3"></div>
<div style="left:490.30px;top:481.20px;width:1.00px;height:9.60px;background:#e3e3e3"></div>
<div style="left:533.40px;top:481.20px;width:1.00px;height:9.60px;background:#e3e3e3"></div>
<div style="left:564.40px;top:481.20px;width:1.00px;height:9.60px;background:#e3e3e3"></div>
<div style="left:596.90px;top:481.20px;width:1.00px;height:9.60px;background:#e3e3e3"></div>
<div style="left:635.90px;top:481.20px;width:1.00px;height:9.60px;background:#e3e3e3"></div>
<div style="left:667.60px;top:481.20px;width:1.00px;height:9.60px;background:#e3e3e3"></div>
<div style="left:730.60px;top:481.20px;width:1.00px;height:9.60px;background:#e3e3e3"></div>
<div style="left:766.60px;top:481.20px;width:1.00px;height:9.60px;background:#e3e3e3"></div>
<div style="left:808.50px;top:481.20px;width:1.00px;height:9.60px;background:#e3e3e3"></div>
<div style="left:846.50px;top:481.20px;width:1.00px;height:9.60px;background:#e3e3e3"></div>
<div style="left:882.80px;top:481.20px;width:1.00px;height:9.60px;background:#e3e3e3"></div>
<div style="left:89.40px;top:481.20px;width:54.20px;height:9.00px;overflow:hidden"><span class="t" style="left:1.60px;transform-origin:0 50%;top:1.81px;font-size:6.9px;line-height:6.9px;color:#5a5a5a;transform:scaleX(0.793);">ΙΑΤΡΙΚΕΣ ΠΡΑΞΕΙΣ</span></div>
<div style="left:143.60px;top:481.20px;width:74.20px;height:9.00px;overflow:hidden"><span class="t" style="left:2.40px;transform-origin:0 50%;top:1.81px;font-size:6.9px;line-height:6.9px;color:#5a5a5a;transform:scaleX(0.820);">150000008</span></div>
<div style="left:217.80px;top:481.20px;width:230.30px;height:9.00px;overflow:hidden"><span class="t" style="left:2.40px;transform-origin:0 50%;top:1.81px;font-size:6.9px;line-height:6.9px;color:#5a5a5a;transform:scaleX(0.894);">Γενική εξέταση ούρων</span></div>
<div style="left:448.10px;top:481.20px;width:42.20px;height:9.00px;overflow:hidden"><span class="t" style="left:2.40px;transform-origin:0 50%;top:1.81px;font-size:6.9px;line-height:6.9px;color:#5a5a5a;transform:scaleX(0.923);">23/4/2020</span></div>
<div style="left:490.30px;top:481.20px;width:43.10px;height:9.00px;overflow:hidden"><span class="t" style="left:2.40px;transform-origin:0 50%;top:1.81px;font-size:6.9px;line-height:6.9px;color:#5a5a5a;transform:scaleX(0.923);">23/4/2020</span></div>
<div style="left:533.40px;top:481.20px;width:31.00px;height:9.00px;overflow:hidden"><span class="t" style="right:1.60px;transform-origin:100% 50%;top:1.81px;font-size:6.9px;line-height:6.9px;color:#5a5a5a;transform:scaleX(0.820);">1</span></div>
<div style="left:564.40px;top:481.20px;width:32.50px;height:9.00px;overflow:hidden"><span class="t" style="right:1.60px;transform-origin:100% 50%;top:1.81px;font-size:6.9px;line-height:6.9px;color:#5a5a5a;transform:scaleX(0.852);">1,41 €</span></div>
<div style="left:596.90px;top:481.20px;width:39.00px;height:9.00px;overflow:hidden"><span class="t" style="right:1.60px;transform-origin:100% 50%;top:1.81px;font-size:6.9px;line-height:6.9px;color:#5a5a5a;transform:scaleX(0.852);">1,41 €</span></div>
<div style="left:635.90px;top:481.20px;width:31.70px;height:9.00px;overflow:hidden"><span class="t" style="right:1.60px;transform-origin:100% 50%;top:1.81px;font-size:6.9px;line-height:6.9px;color:#5a5a5a;transform:scaleX(0.852);">0,14 €</span></div>
<div style="left:730.60px;top:481.20px;width:36.00px;height:9.00px;overflow:hidden"><span class="t" style="right:1.60px;transform-origin:100% 50%;top:1.81px;font-size:6.9px;line-height:6.9px;color:#5a5a5a;transform:scaleX(0.852);">1,27 €</span></div>
<div style="left:766.60px;top:481.20px;width:41.90px;height:9.00px;overflow:hidden"><span class="t" style="left:2.40px;transform-origin:0 50%;top:1.81px;font-size:6.9px;line-height:6.9px;color:#5a5a5a;transform:scaleX(0.923);">23/4/2020</span></div>
<div style="left:808.50px;top:481.20px;width:38.00px;height:9.00px;overflow:hidden"><span class="t" style="left:2.40px;transform-origin:0 50%;top:1.81px;font-size:6.9px;line-height:6.9px;color:#5a5a5a;transform:scaleX(0.923);">23/4/2020</span></div>
<div style="left:143.60px;top:490.80px;width:1.00px;height:2.40px;background:#e3e3e3"></div>
<div style="left:217.80px;top:490.80px;width:1.00px;height:2.40px;background:#e3e3e3"></div>
<div style="left:448.10px;top:490.80px;width:1.00px;height:2.40px;background:#e3e3e3"></div>
<div style="left:490.30px;top:490.80px;width:1.00px;height:2.40px;background:#e3e3e3"></div>
<div style="left:533.40px;top:490.80px;width:1.00px;height:2.40px;background:#e3e3e3"></div>
<div style="left:564.40px;top:490.80px;width:1.00px;height:2.40px;background:#e3e3e3"></div>
<div style="left:596.90px;top:490.80px;width:1.00px;height:2.40px;background:#e3e3e3"></div>
<div style="left:635.90px;top:490.80px;width:1.00px;height:2.40px;background:#e3e3e3"></div>
<div style="left:667.60px;top:490.80px;width:1.00px;height:2.40px;background:#e3e3e3"></div>
<div style="left:730.60px;top:490.80px;width:1.00px;height:2.40px;background:#e3e3e3"></div>
<div style="left:766.60px;top:490.80px;width:1.00px;height:2.40px;background:#e3e3e3"></div>
<div style="left:808.50px;top:490.80px;width:1.00px;height:2.40px;background:#e3e3e3"></div>
<div style="left:846.50px;top:490.80px;width:1.00px;height:2.40px;background:#e3e3e3"></div>
<div style="left:882.80px;top:490.80px;width:1.00px;height:2.40px;background:#e3e3e3"></div>
<div style="left:89.40px;top:490.80px;width:54.20px;height:2.40px;overflow:hidden"><span class="t" style="left:1.60px;transform-origin:0 50%;top:1.11px;font-size:6.9px;line-height:6.9px;color:#5a5a5a;transform:scaleX(0.793);">ΙΑΤΡΙΚΕΣ ΠΡΑΞΕΙΣ</span></div>
<div style="left:143.60px;top:490.80px;width:74.20px;height:2.40px;overflow:hidden"><span class="t" style="left:2.40px;transform-origin:0 50%;top:1.11px;font-size:6.9px;line-height:6.9px;color:#5a5a5a;transform:scaleX(0.820);">150000010</span></div>
<div style="left:217.80px;top:490.80px;width:230.30px;height:2.40px;overflow:hidden"><span class="t" style="left:2.40px;transform-origin:0 50%;top:1.11px;font-size:6.9px;line-height:6.9px;color:#5a5a5a;transform:scaleX(0.893);">Μικροσκοπική εξέταση ούρων</span></div>
<div style="left:448.10px;top:490.80px;width:42.20px;height:2.40px;overflow:hidden"><span class="t" style="left:2.40px;transform-origin:0 50%;top:1.11px;font-size:6.9px;line-height:6.9px;color:#5a5a5a;transform:scaleX(0.923);">23/4/2020</span></div>
<div style="left:490.30px;top:490.80px;width:43.10px;height:2.40px;overflow:hidden"><span class="t" style="left:2.40px;transform-origin:0 50%;top:1.11px;font-size:6.9px;line-height:6.9px;color:#5a5a5a;transform:scaleX(0.923);">23/4/2020</span></div>
<div style="left:533.40px;top:490.80px;width:31.00px;height:2.40px;overflow:hidden"><span class="t" style="right:1.60px;transform-origin:100% 50%;top:1.11px;font-size:6.9px;line-height:6.9px;color:#5a5a5a;transform:scaleX(0.820);">1</span></div>
<div style="left:564.40px;top:490.80px;width:32.50px;height:2.40px;overflow:hidden"><span class="t" style="right:1.60px;transform-origin:100% 50%;top:1.11px;font-size:6.9px;line-height:6.9px;color:#5a5a5a;transform:scaleX(0.852);">1,41 €</span></div>
<div style="left:596.90px;top:490.80px;width:39.00px;height:2.40px;overflow:hidden"><span class="t" style="right:1.60px;transform-origin:100% 50%;top:1.11px;font-size:6.9px;line-height:6.9px;color:#5a5a5a;transform:scaleX(0.852);">1,41 €</span></div>
<div style="left:635.90px;top:490.80px;width:31.70px;height:2.40px;overflow:hidden"><span class="t" style="right:1.60px;transform-origin:100% 50%;top:1.11px;font-size:6.9px;line-height:6.9px;color:#5a5a5a;transform:scaleX(0.852);">0,14 €</span></div>
<div style="left:730.60px;top:490.80px;width:36.00px;height:2.40px;overflow:hidden"><span class="t" style="right:1.60px;transform-origin:100% 50%;top:1.11px;font-size:6.9px;line-height:6.9px;color:#5a5a5a;transform:scaleX(0.852);">1,27 €</span></div>
<div style="left:766.60px;top:490.80px;width:41.90px;height:2.40px;overflow:hidden"><span class="t" style="left:2.40px;transform-origin:0 50%;top:1.11px;font-size:6.9px;line-height:6.9px;color:#5a5a5a;transform:scaleX(0.923);">23/4/2020</span></div>
<div style="left:808.50px;top:490.80px;width:38.00px;height:2.40px;overflow:hidden"><span class="t" style="left:2.40px;transform-origin:0 50%;top:1.11px;font-size:6.9px;line-height:6.9px;color:#5a5a5a;transform:scaleX(0.923);">23/4/2020</span></div>
<div style="left:82.90px;top:493.20px;width:938.50px;height:1.00px;background:#d6d6d6"></div>
<span class="t" style="left:148.50px;top:499.81px;font-size:6.9px;line-height:6.9px;color:#555;transform:scaleX(0.820);transform-origin:0 50%;">37</span>
<div style="left:216.50px;top:496.00px;width:1.00px;height:15.00px;background:#e0e0e0"></div>
<span class="t" style="right:393.10px;top:499.81px;font-size:6.9px;line-height:6.9px;color:#555;transform:scaleX(0.840);transform-origin:100% 50%;">1445,40</span>
<div style="left:634.00px;top:496.00px;width:1.00px;height:15.00px;background:#e0e0e0"></div>
<span class="t" style="right:359.60px;top:499.81px;font-size:6.9px;line-height:6.9px;color:#555;transform:scaleX(0.840);transform-origin:100% 50%;">144,53</span>
<div style="left:667.00px;top:496.00px;width:1.00px;height:15.00px;background:#e0e0e0"></div>
<span class="t" style="right:260.70px;top:499.81px;font-size:6.9px;line-height:6.9px;color:#555;transform:scaleX(0.840);transform-origin:100% 50%;">1300,87</span>
<div style="left:765.90px;top:496.00px;width:1.00px;height:15.00px;background:#e0e0e0"></div>
<div style="left:82.90px;top:512.80px;width:938.50px;height:1.00px;background:#d0d0d0"></div>
<div style="left:1021.40px;top:216.80px;width:1.00px;height:296.40px;background:#d0d0d0"></div>
<div style="left:68.20px;top:513.40px;width:954.10px;height:1.00px;background:#d0d0d0"></div>
<div style="left:68.80px;top:513.80px;width:6.00px;height:17.40px;background:#f0f0f0"></div>
<div style="left:68.20px;top:534.40px;width:954.10px;height:1.00px;background:#c8c8c8"></div>
<div style="left:0.00px;top:535.50px;width:1024.00px;height:12.00px;background:#f0f0f0"></div>

<svg style="left:0;top:0" width="1024" height="547" viewBox="0 0 1024 547">
<!-- app icon -->
<g fill="none" stroke="#d42020" stroke-width="0.9" stroke-dasharray="1 0.6">
<path d="M3 3.5C2 1.5 4 -0.5 6.5 0.3C9 1 10 3 8.5 5C7.5 6.2 5.5 6.3 4.5 5.5"/>
</g>
<circle cx="5" cy="0.6" r="0.9" fill="#d42020"/><circle cx="6.6" cy="5.2" r="0.6" fill="#d42020"/>
<!-- quick access -->
<rect x="17.2" y="1.2" width="2.8" height="1.4" fill="#e8eef8"/>
<path d="M17.4 2.8H19.8L18.6 4Z" fill="#fff"/>
<!-- file tab icon -->
<rect x="10.2" y="14.2" width="8.5" height="8.3" fill="#9fb6da"/>
<rect x="10.2" y="14.2" width="2" height="7.5" fill="#dfe7f3"/>
<rect x="12.8" y="15.2" width="5.6" height="3.2" fill="#c8d6ec"/>
<rect x="13" y="19" width="2.2" height="2.6" fill="#2a7ee0"/>
<rect x="16" y="19" width="2.4" height="2.6" fill="#6a5a3a"/>
<rect x="16.8" y="16.8" width="1.6" height="1.6" fill="#d06060"/>
<!-- patient person -->
<g fill="#a9d1f6" stroke="#6fabea" stroke-width="0.7">
<circle cx="23.6" cy="31.6" r="1.6"/>
<path d="M21 35.2Q21 33.6 22.6 33.5H24.6Q26.4 33.6 26.4 35.4V40.2H25.4V46H21.8V40.2H20.8Z"/>
</g>
<path d="M21.6 37.6L23.6 38.4" stroke="#fff" stroke-width="0.9"/>
<line x1="23.6" y1="40.5" x2="23.6" y2="46" stroke="#6fabea" stroke-width="0.5"/>
<!-- people -->
<g stroke="#79b3ee" stroke-width="0.7">
<path d="M55.2 44.3V41.6Q55.2 37.8 59.8 37.8Q64.2 37.8 64.2 41.6V44.3Z" fill="#9ccaf5"/>
<circle cx="59.9" cy="34.1" r="2.9" fill="#dcedfc"/>
<path d="M62.6 44.3V42.6Q62.6 39.6 66.6 39.6Q70.8 39.6 70.8 42.6V44.3Z" fill="#bcdcf8"/>
<circle cx="66.5" cy="36.4" r="2.3" fill="#dcedfc"/>
</g>
<!-- separator group 1 handled in html -->
<!-- window list icon -->
<rect x="93.4" y="31.3" width="15.8" height="13.1" fill="#fff" stroke="#79b3ee" stroke-width="0.8"/>
<rect x="93.8" y="31.7" width="15" height="2.2" fill="#9ccaf5"/>
<g stroke="#6aa3e0" stroke-width="0.9">
<line x1="97" y1="35.8" x2="105.6" y2="35.8"/>
<line x1="98.6" y1="38.4" x2="105.6" y2="38.4" stroke-width="0.6"/>
<line x1="98.6" y1="40.8" x2="105.6" y2="40.8"/>
</g>
<circle cx="97.2" cy="38.4" r="0.4" fill="#6aa3e0"/><circle cx="97.2" cy="40.8" r="0.4" fill="#6aa3e0"/>
<!-- stethoscope -->
<g fill="none" stroke="#6fabea" stroke-width="0.8">
<path d="M129.6 30.4Q128.4 30.8 128.4 32.2V36.6Q128.4 39.6 132.3 39.6Q136.3 39.6 136.3 36.6V32.2Q136.3 30.8 135 30.4"/>
<path d="M132.4 39.6V42.4Q132.4 45.8 137.2 45.8Q142.6 45.8 142.6 42V39.4"/>
<circle cx="142.6" cy="38.3" r="1.1"/>
</g>
<circle cx="130" cy="30.5" r="0.7" fill="#9ccaf5" stroke="#6fabea" stroke-width="0.5"/>
<circle cx="134.6" cy="30.5" r="0.7" fill="#9ccaf5" stroke="#6fabea" stroke-width="0.5"/>
<!-- money -->
<rect x="169.2" y="33" width="16" height="9.7" fill="#8cc3f3" stroke="#79b3ee" stroke-width="0.6"/>
<circle cx="177" cy="37.9" r="2.6" fill="#fff"/>
<circle cx="171.6" cy="37.8" r="0.9" fill="#fff"/><circle cx="182.6" cy="37.8" r="0.9" fill="#fff"/>
<path d="M180.4 39H185.4L183 42.8L185.4 46.6H180.4L182.8 42.8Z" fill="#dcedfc" stroke="#79b3ee" stroke-width="0.6"/>
<!-- nurse -->
<path d="M218.2 37.5Q218.2 29.5 224.2 29.5Q230.2 29.5 230.2 37.5Q230.2 45.8 224.2 45.8Q218.2 45.8 218.2 37.5Z" fill="#fff" stroke="#79b3ee" stroke-width="0.8"/>
<path d="M218.6 36.4Q218.6 29.8 224.2 29.8Q229.8 29.8 229.8 36.4Z" fill="#9ccaf5"/>
<rect x="220" y="30.8" width="8.4" height="4.6" rx="0.8" fill="#fff"/>
<path d="M223.4 31.6H225V32.4H225.8V34H225V34.8H223.4V34H222.6V32.4H223.4Z" fill="#4a90e0"/>
<circle cx="221.8" cy="39.7" r="0.5" fill="#4a7fc8"/><circle cx="226.6" cy="39.7" r="0.5" fill="#4a7fc8"/>
<path d="M218.2 38.5H219.5V40.8H218.2ZM228.9 38.5H230.2V40.8H228.9Z" fill="#9ccaf5"/>
<!-- list -->
<g fill="#4a8fdc">
<rect x="257" y="31.8" width="3.1" height="3.1"/>
<rect x="257" y="36.6" width="3.1" height="3.1"/>
</g>
<rect x="257.2" y="41.1" width="2.8" height="2.8" fill="#cfe4fa" stroke="#6aa3e0" stroke-width="0.5"/>
<g stroke="#7aaee6" stroke-width="0.6">
<line x1="261" y1="33.4" x2="273" y2="33.4" stroke="#5e9be0"/>
<line x1="261" y1="38.2" x2="273" y2="38.2" stroke="#a9c9ec"/>
<line x1="261" y1="42.6" x2="273" y2="42.6" stroke="#a9c9ec"/>
</g>
<!-- ambulance -->
<path d="M297.3 33.2Q297.3 32.2 298.3 32.2H311Q313.8 32.2 313.8 35.6V42.6H297.3Z" fill="#fff" stroke="#79b3ee" stroke-width="0.7"/>
<path d="M305.6 30.2L306.8 32.2H304.4Z" fill="#9ccaf5"/>
<rect x="309" y="33" width="3.2" height="4.6" fill="#bcdcf8"/>
<path d="M297.5 38.6H313.6V39.8H297.5Z" fill="#dcedfc"/>
<path d="M302.6 33.6L304.6 35.6L302.6 37.6L300.6 35.6Z" fill="#5e9be0"/>
<circle cx="300.6" cy="42.6" r="1.4" fill="#fff" stroke="#79b3ee" stroke-width="0.7"/>
<circle cx="310.6" cy="42.6" r="1.4" fill="#fff" stroke="#79b3ee" stroke-width="0.7"/>
<!-- calendar clock 1 -->
<rect x="356.2" y="30.4" width="15.8" height="14.8" fill="#fff" stroke="#8cbcec" stroke-width="0.7"/>
<rect x="356.6" y="30.6" width="15" height="1.8" fill="#8cc3f3"/>
<g fill="#a9c9ec"><circle cx="368" cy="35.5" r="0.35"/><circle cx="370" cy="35.5" r="0.35"/><circle cx="368" cy="38" r="0.35"/><circle cx="370" cy="38" r="0.35"/><circle cx="360" cy="41.5" r="0.35"/><circle cx="362.5" cy="41.5" r="0.35"/><circle cx="365" cy="41.5" r="0.35"/><circle cx="368" cy="41.5" r="0.35"/></g>
<circle cx="360.9" cy="34.4" r="4.1" fill="#fff" stroke="#5e9be0" stroke-width="0.9"/>
<path d="M360.9 32.2V34.6L359.6 35.8" stroke="#5e7fa8" stroke-width="0.6" fill="none"/>
<!-- barcode -->
<g fill="#3f86d8">
<rect x="424.2" y="30.2" width="1.6" height="15.2"/>
<rect x="430" y="30.2" width="2.8" height="15.2"/>
<rect x="434" y="30.2" width="0.8" height="15.2"/>
</g>
<g fill="#a9c9ec">
<rect x="426.8" y="30.2" width="0.9" height="15.2"/>
<rect x="428.4" y="30.2" width="0.6" height="15.2"/>
<rect x="435.6" y="30.2" width="0.9" height="15.2"/>
<rect x="437.3" y="30.2" width="2.5" height="15.2" fill="#bcd6f0"/>
</g>
<!-- calendar clock 2 -->
<rect x="497.4" y="30.4" width="15" height="15" fill="#fff" stroke="#8cbcec" stroke-width="0.7"/>
<rect x="497.8" y="30.6" width="14.2" height="1.8" fill="#8cc3f3"/>
<g fill="#a9c9ec"><circle cx="507" cy="35.5" r="0.35"/><circle cx="509.5" cy="35.5" r="0.35"/><circle cx="507" cy="38" r="0.35"/><circle cx="509.5" cy="38" r="0.35"/><circle cx="501" cy="41.5" r="0.35"/><circle cx="503.5" cy="41.5" r="0.35"/><circle cx="506" cy="41.5" r="0.35"/><circle cx="508.5" cy="41.5" r="0.35"/></g>
<circle cx="501" cy="34.1" r="4.2" fill="#fff" stroke="#5e9be0" stroke-width="0.9"/>
<path d="M501 31.8V34.3L499.7 35.5" stroke="#5e7fa8" stroke-width="0.6" fill="none"/>
<!-- floor plan -->
<rect x="554.4" y="30.4" width="15.4" height="15.3" fill="#dcedfc" stroke="#79b3ee" stroke-width="0.7"/>
<g stroke="#79b3ee" stroke-width="0.6" fill="none">
<line x1="561.8" y1="38" x2="561.8" y2="45.6"/>
<line x1="554.4" y1="38.6" x2="557" y2="38.6"/>
<line x1="560.2" y1="38.6" x2="563.4" y2="38.6"/>
<line x1="567" y1="38.6" x2="569.8" y2="38.6"/>
<line x1="561.8" y1="30.4" x2="563.4" y2="31.6"/>
</g>
<!-- window controls -->
<g fill="none" stroke="#fff" stroke-width="0.8">
<rect x="951.4" y="-0.5" width="6.4" height="4.8"/>
<path d="M953.2 1.9H956.2M954.2 0.9L953.2 1.9L954.2 2.9"/>
<line x1="971" y1="3.6" x2="976" y2="3.6"/>
<rect x="990.2" y="1.2" width="3.6" height="3.2"/>
<path d="M991.4 1.2V0H995V3.2H993.8"/>
<path d="M1009.2 -0.6L1013.8 4.4M1013.8 -0.6L1009.2 4.4" stroke-width="0.9"/>
</g>
<path d="M1015 17.4H1018.4L1016.7 19.2Z" fill="#fff"/>
<!-- ribbon collapse chevron -->
<path d="M1012.7 70.8L1014.9 68.6L1017.1 70.8" stroke="#333" stroke-width="1.1" fill="none"/>
<!-- tab strip controls -->
<path d="M1006.3 79.3H1009.7L1008 81.4Z" fill="#444"/>
<path d="M1017.2 78.9L1020 81.7M1020 78.9L1017.2 81.7" stroke="#555" stroke-width="0.7"/>
<!-- active doc tab close -->
<circle cx="312.4" cy="85.4" r="2.5" fill="#5a5a5a"/>
<path d="M311.3 84.3L313.5 86.5M313.5 84.3L311.3 86.5" stroke="#f0f0f0" stroke-width="0.7"/>
<!-- toolbar right chevron -->
<path d="M1016.4 107.6L1017.7 108.6L1019 107.6" stroke="#777" stroke-width="0.6" fill="none"/>
<!-- export icon -->
<rect x="92.6" y="96.2" width="11.8" height="15.2" fill="#ededed" stroke="#a0a0a0" stroke-width="0.7"/>
<rect x="103.6" y="101" width="1.5" height="5.6" fill="#ededed"/>
<path d="M97.2 103.8H104.2" stroke="#8a8a8a" stroke-width="1.4"/>
<path d="M103.2 101.6L105.8 103.8L103.2 106" stroke="#8a8a8a" stroke-width="0.8" fill="none"/>
<path d="M94 109.2H100.5" stroke="#bcbcbc" stroke-width="0.5"/>
<!-- grid indicator icons -->
<circle cx="71.4" cy="129.9" r="1.4" fill="#2a6fd6"/>
<path d="M69.3 139.6H73.6L72 142.2V145.4L70.9 144.6V142.2Z" fill="#2a6fd6"/>
<path d="M69.4 154.7H73.8M72 152.9L73.8 154.7L72 156.5" stroke="#7aa6e2" stroke-width="0.7" fill="none"/>
<path d="M798 222H802.8L798.6 225.4Z" fill="#a8a8a8"/>
<!-- left panel icons -->
<rect x="6.5" y="99.4" width="12.2" height="14.2" rx="0.6" fill="#fff" stroke="#79b3ee" stroke-width="0.8"/>
<rect x="9.6" y="98.2" width="6" height="2.2" rx="0.5" fill="#dcedfc" stroke="#79b3ee" stroke-width="0.6"/>
<circle cx="12.6" cy="98.3" r="0.6" fill="#79b3ee"/>
<g stroke="#7fb1e4" stroke-width="0.6" fill="none">
<line x1="9" y1="105" x2="12.5" y2="105"/><path d="M13.6 105L14.4 105.6L15.8 104.2"/>
<line x1="9" y1="108.2" x2="12.5" y2="108.2"/><path d="M13.6 108.2L14.4 108.8L15.8 107.4"/>
</g>
<!-- data grid icon -->
<rect x="4.4" y="118.3" width="15.6" height="14.7" fill="#fff" stroke="#79b3ee" stroke-width="0.7"/>
<rect x="4.4" y="118.3" width="15.6" height="2.6" fill="#6aa8ea"/>
<rect x="4.4" y="118.3" width="2.6" height="14.7" fill="#6aa8ea"/>
<g stroke="#a9cdf3" stroke-width="0.5">
<line x1="10.2" y1="118.3" x2="10.2" y2="133"/><line x1="13.4" y1="118.3" x2="13.4" y2="133"/><line x1="16.6" y1="118.3" x2="16.6" y2="133"/>
<line x1="4.4" y1="123.8" x2="20" y2="123.8"/><line x1="4.4" y1="126.8" x2="20" y2="126.8"/><line x1="4.4" y1="129.8" x2="20" y2="129.8"/>
</g>
<!-- preview icon -->
<rect x="14.6" y="139.4" width="5" height="14.4" fill="#bcdcf8" stroke="#79b3ee" stroke-width="0.6"/>
<rect x="4.6" y="138.2" width="11.2" height="15.6" fill="#dcedfc" stroke="#79b3ee" stroke-width="0.7"/>
<line x1="6.4" y1="140.6" x2="14" y2="140.6" stroke="#6aa8ea" stroke-width="0.9"/>
<g fill="#a9cdf3">
<rect x="6.4" y="142.4" width="3.2" height="2.4"/><rect x="10.6" y="142.4" width="3.2" height="2.4"/>
<rect x="6.4" y="145.6" width="3.2" height="2.4"/><rect x="10.6" y="145.6" width="3.2" height="2.4"/>
<rect x="6.4" y="148.8" width="3.2" height="2.4"/><rect x="10.6" y="148.8" width="3.2" height="2.4"/>
</g>
</svg>

</body></html>
